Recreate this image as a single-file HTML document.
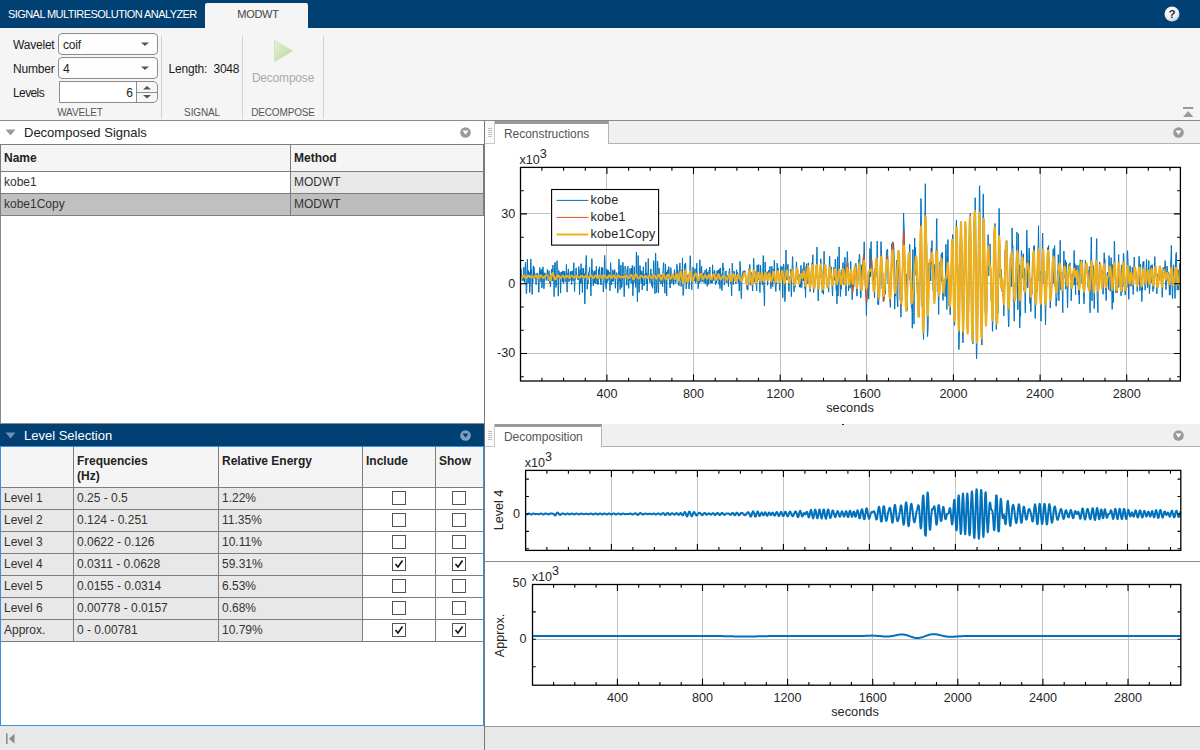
<!DOCTYPE html>
<html lang="en">
<head>
<meta charset="utf-8">
<title>Signal Multiresolution Analyzer</title>
<style>
*{box-sizing:border-box;margin:0;padding:0}
html,body{width:1200px;height:750px;overflow:hidden;background:#fff}
body{position:relative;font-family:"Liberation Sans",Arial,sans-serif;font-size:12px;color:#222}
.abs{position:absolute}
#title{left:0;top:0;width:1200px;height:28px;background:#004073}
#title .app{left:8px;top:0;line-height:29px;color:#fff;font-size:11px;white-space:nowrap;letter-spacing:-0.57px}
#tab{left:205px;top:3px;width:103px;height:25px;background:#f5f5f5;border-radius:2px 2px 0 0;text-align:center;line-height:22px;color:#444;font-size:11px;letter-spacing:-0.3px;padding-left:3px}
#strip{left:0;top:28px;width:1200px;height:92px;background:#f5f5f5}
#stripb{left:0;top:120px;width:1200px;height:1px;background:#8a8a8a}
.lbl{font-size:12px;color:#1a1a1a;white-space:nowrap;line-height:14px;letter-spacing:-0.2px}
.dd{border:1px solid #8c8c8c;border-radius:4px;background:#fdfdfd;height:22px;line-height:22px;padding-left:4px;font-size:12px;color:#222;letter-spacing:-0.2px}
.sec{font-size:10px;color:#555;letter-spacing:-0.15px;white-space:nowrap;text-align:center;line-height:12px}
.vsep{width:1px;background:#d2d2d2;top:36px;height:83px}
.ph{left:0;width:484px;height:23px}
.ph .t{left:24px;top:0;line-height:23px;font-size:13px;white-space:nowrap}
table{border-collapse:collapse;table-layout:fixed;position:absolute}
td,th{border:1px solid #7d7d7d;font-size:12px;text-align:left;padding:0 0 2px 3px;white-space:nowrap;overflow:hidden;font-weight:normal;color:#333}
th{font-weight:bold;background:#f5f5f5;color:#222;vertical-align:top}
.g{background:#e8e8e8}
#lv tr:first-child th{border-top-color:#3d8fe0}
#lv td:first-child,#lv th:first-child{border-left-color:#3d8fe0}
#lv td:last-child,#lv th:last-child{border-right-color:#3d8fe0}
#lv td:nth-child(n+4){padding:0 0 1px 0}
#lv td:last-child .cb{left:-1px}
.cb{display:block;width:14px;height:14px;border:1px solid #555;background:#fff;margin:0 auto;position:relative}
.cb svg{position:absolute;left:0;top:0}
.tabbar{left:485px;width:715px;height:23px;background:#f0f0f0;border-bottom:1px solid #b4b4b4}
.rtab{top:0;height:23px;background:#fff;border-top:3px solid #999;border-right:1px solid #b4b4b4;color:#555;font-size:12px;line-height:21px;padding-left:9px;white-space:nowrap;letter-spacing:-0.05px}
.grip{left:0;top:0;width:10px;height:23px;background:#fafafa;border-right:1px solid #c8c8c8;border-bottom:1px solid #c8c8c8}
</style>
</head>
<body>
<!-- title bar -->
<div id="title" class="abs">
  <div class="app abs">SIGNAL MULTIRESOLUTION ANALYZER</div>
  <div id="tab" class="abs">MODWT</div>
  <svg class="abs" style="left:1164px;top:6px" width="16" height="16" viewBox="0 0 16 16">
    <defs><radialGradient id="hg" cx="0.4" cy="0.3" r="0.8"><stop offset="0" stop-color="#ffffff"/><stop offset="0.6" stop-color="#f0f0f0"/><stop offset="1" stop-color="#b8bcc4"/></radialGradient></defs>
    <circle cx="8" cy="8" r="7.5" fill="url(#hg)"/>
    <text x="8" y="12" text-anchor="middle" font-family="Liberation Sans, Arial, sans-serif" font-weight="bold" font-size="11.5" fill="#1d2b45">?</text>
  </svg>
</div>
<!-- toolstrip -->
<div id="strip" class="abs"></div>
<div id="stripb" class="abs"></div>
<div class="abs lbl" style="left:13px;top:38px">Wavelet</div>
<div class="abs lbl" style="left:13px;top:62px">Number</div>
<div class="abs lbl" style="left:13px;top:86px;letter-spacing:-0.6px">Levels</div>
<div class="abs dd" style="left:58px;top:33px;width:100px">coif</div>
<div class="abs dd" style="left:58px;top:57px;width:100px">4</div>
<svg class="abs" style="left:140px;top:41px" width="10" height="6"><path d="M1 1.5h8l-4 3.6z" fill="#555"/></svg>
<svg class="abs" style="left:140px;top:65px" width="10" height="6"><path d="M1 1.5h8l-4 3.6z" fill="#555"/></svg>
<div class="abs" style="left:59px;top:81px;width:99px;height:22px;border:1px solid #8c8c8c;border-radius:0 5px 5px 0;background:#f7f7f7"></div>
<div class="abs" style="left:60px;top:82px;width:77px;height:20px;background:#fff;border-right:1px solid #8c8c8c;text-align:right;padding-right:3px;line-height:23px;font-size:12px;color:#222">6</div>
<div class="abs" style="left:137px;top:92px;width:20px;height:1px;background:#8c8c8c"></div>
<svg class="abs" style="left:142px;top:85px" width="10" height="14"><path d="M1 4.6h8l-4 -3.6z M1 10h8l-4 3.6z" fill="#555"/></svg>
<div class="abs sec" style="left:40px;top:107px;width:80px">WAVELET</div>
<div class="abs vsep" style="left:161px"></div>
<div class="abs lbl" style="left:168.5px;top:62px">Length:&nbsp; 3048</div>
<div class="abs sec" style="left:162px;top:107px;width:80px">SIGNAL</div>
<div class="abs vsep" style="left:242px"></div>
<svg class="abs" style="left:272px;top:38px" width="24" height="26" viewBox="0 0 24 26"><defs><linearGradient id="pg" x1="0" y1="0" x2="1" y2="1"><stop offset="0" stop-color="#e4f0d8"/><stop offset="1" stop-color="#b9d89f"/></linearGradient></defs><path d="M2.5 2.5 L20.5 13 L2.5 23.5 Z" fill="url(#pg)" stroke="#cfe3bd" stroke-width="1" stroke-linejoin="round"/></svg>
<div class="abs lbl" style="left:243px;top:71px;width:80px;text-align:center;color:#aaa;font-size:12px">Decompose</div>
<div class="abs sec" style="left:243px;top:107px;width:80px">DECOMPOSE</div>
<div class="abs vsep" style="left:323px"></div>
<svg class="abs" style="left:1182px;top:106px" width="12" height="12"><path d="M1 1h10.4v2H1z M6.2 5l5.2 6H1z" fill="#9a9a9a"/></svg>

<!-- left top panel -->
<div class="abs ph" style="top:121px;background:#fff">
  <svg class="abs" style="left:5px;top:8px" width="11" height="7"><path d="M0.5 0.5h10l-5 6z" fill="#9b9b9b"/></svg>
  <div class="abs t" style="color:#222">Decomposed Signals</div>
  <svg class="abs" style="left:460px;top:6px" width="11" height="11"><circle cx="5.5" cy="5.5" r="5.3" fill="#9a9a9a"/><path d="M2.5 3.6h6l-3 4.2z" fill="#fff"/></svg>
</div>
<div class="abs" style="left:0;top:144px;width:484px;height:280px;background:#fff;border:1px solid #8a8a8a;border-right:none"></div>
<table style="left:0;top:144px;width:483px">
<colgroup><col style="width:290px"><col style="width:193px"></colgroup>
<tr style="height:27px"><th style="padding-top:6px">Name</th><th style="padding-top:6px">Method</th></tr>
<tr style="height:22px"><td style="background:#fff">kobe1</td><td class="g">MODWT</td></tr>
<tr style="height:22px"><td style="background:#c0c0c0">kobe1Copy</td><td style="background:#bdbdbd">MODWT</td></tr>
</table>

<!-- left bottom panel -->
<div class="abs ph" style="top:424px;background:#004073">
  <svg class="abs" style="left:5px;top:8px" width="11" height="7"><path d="M0.5 0.5h10l-5 6z" fill="#6f8fb0"/></svg>
  <div class="abs t" style="color:#fff">Level Selection</div>
  <svg class="abs" style="left:460px;top:6px" width="11" height="11"><circle cx="5.5" cy="5.5" r="5.3" fill="#7f9fc0"/><path d="M2.5 3.6h6l-3 4.2z" fill="#0b3c6c"/></svg>
</div>
<div class="abs" style="left:0;top:446px;width:484px;height:280px;background:#fff;border:1px solid #3d8fe0"></div>
<table id="lv" style="left:0;top:446px;width:483px">
<colgroup><col style="width:73px"><col style="width:145px"><col style="width:144px"><col style="width:73px"><col style="width:48px"></colgroup>
<tr style="height:41px"><th></th><th style="padding-top:7px;line-height:15px">Frequencies<br>(Hz)</th><th style="padding-top:7px;line-height:15px">Relative Energy</th><th style="padding-top:7px;line-height:15px">Include</th><th style="padding-top:7px;line-height:15px">Show</th></tr>
<tr style="height:22px"><td class="g">Level 1</td><td class="g">0.25 - 0.5</td><td class="g">1.22%</td><td><span class="cb"></span></td><td><span class="cb"></span></td></tr>
<tr style="height:22px"><td class="g">Level 2</td><td class="g">0.124 - 0.251</td><td class="g">11.35%</td><td><span class="cb"></span></td><td><span class="cb"></span></td></tr>
<tr style="height:22px"><td class="g">Level 3</td><td class="g">0.0622 - 0.126</td><td class="g">10.11%</td><td><span class="cb"></span></td><td><span class="cb"></span></td></tr>
<tr style="height:22px"><td class="g">Level 4</td><td class="g">0.0311 - 0.0628</td><td class="g">59.31%</td><td><span class="cb"><svg width="12" height="12"><path d="M2.5 6l2.5 3l4.5-6.5" fill="none" stroke="#111" stroke-width="1.6"/></svg></span></td><td><span class="cb"><svg width="12" height="12"><path d="M2.5 6l2.5 3l4.5-6.5" fill="none" stroke="#111" stroke-width="1.6"/></svg></span></td></tr>
<tr style="height:22px"><td class="g">Level 5</td><td class="g">0.0155 - 0.0314</td><td class="g">6.53%</td><td><span class="cb"></span></td><td><span class="cb"></span></td></tr>
<tr style="height:22px"><td class="g">Level 6</td><td class="g">0.00778 - 0.0157</td><td class="g">0.68%</td><td><span class="cb"></span></td><td><span class="cb"></span></td></tr>
<tr style="height:22px"><td class="g">Approx.</td><td class="g">0 - 0.00781</td><td class="g">10.79%</td><td><span class="cb"><svg width="12" height="12"><path d="M2.5 6l2.5 3l4.5-6.5" fill="none" stroke="#111" stroke-width="1.6"/></svg></span></td><td><span class="cb"><svg width="12" height="12"><path d="M2.5 6l2.5 3l4.5-6.5" fill="none" stroke="#111" stroke-width="1.6"/></svg></span></td></tr>
</table>

<!-- status bar -->
<div class="abs" style="left:0;top:726px;width:1200px;height:24px;background:#e8e8e8"></div>
<svg class="abs" style="left:5px;top:733px" width="12" height="12"><path d="M1 0.5h1.6v10.5H1z M4 5.7l5.5-5v10z" fill="#8c8c8c"/></svg>

<!-- divider -->
<div class="abs" style="left:484px;top:121px;width:1px;height:629px;background:#777"></div>

<!-- right top -->
<div class="abs" style="left:485px;top:121px;width:715px;height:303px;background:#fff"></div>
<div class="abs tabbar" style="top:121px">
  <div class="abs grip"><svg class="abs" style="left:3px;top:7px" width="4" height="10"><path d="M0 0.5h4M0 2.5h4M0 4.5h4M0 6.5h4M0 8.5h4" stroke="#c0c0c0" stroke-width="1"/></svg></div>
  <div class="abs rtab" style="left:10px;width:114px">Reconstructions</div>
  <svg class="abs" style="left:688px;top:6px" width="11" height="11"><circle cx="5.5" cy="5.5" r="5.3" fill="#9a9a9a"/><path d="M2.5 3.6h6l-3 4.2z" fill="#fff"/></svg>
</div>
<!-- right bottom -->
<div class="abs" style="left:485px;top:424px;width:715px;height:303px;background:#fff;border-top:1px solid #999;border-bottom:1px solid #999"></div>
<div class="abs tabbar" style="top:424px">
  <div class="abs grip"><svg class="abs" style="left:3px;top:7px" width="4" height="10"><path d="M0 0.5h4M0 2.5h4M0 4.5h4M0 6.5h4M0 8.5h4" stroke="#c0c0c0" stroke-width="1"/></svg></div>
  <div class="abs rtab" style="left:10px;width:107px">Decomposition</div>
  <svg class="abs" style="left:688px;top:6px" width="11" height="11"><circle cx="5.5" cy="5.5" r="5.3" fill="#9a9a9a"/><path d="M2.5 3.6h6l-3 4.2z" fill="#fff"/></svg>
</div>
<div class="abs" style="left:842px;top:424px;width:2px;height:1px;background:#222"></div>
<div class="abs" style="left:0;top:0;width:1200px;height:750px;pointer-events:none">
<svg id="plots" width="1200" height="750" viewBox="0 0 1200 750" font-family="Liberation Sans, Arial, sans-serif" font-size="12.6" fill="#262626">
<rect x="520.5" y="167.4" width="659.9" height="213.6" fill="#fff"/>
<line x1="606.5" x2="606.5" y1="167.4" y2="381.0" stroke="#c2c2c2" stroke-width="1"/>
<line x1="693.5" x2="693.5" y1="167.4" y2="381.0" stroke="#c2c2c2" stroke-width="1"/>
<line x1="780.5" x2="780.5" y1="167.4" y2="381.0" stroke="#c2c2c2" stroke-width="1"/>
<line x1="866.5" x2="866.5" y1="167.4" y2="381.0" stroke="#c2c2c2" stroke-width="1"/>
<line x1="953.5" x2="953.5" y1="167.4" y2="381.0" stroke="#c2c2c2" stroke-width="1"/>
<line x1="1040.5" x2="1040.5" y1="167.4" y2="381.0" stroke="#c2c2c2" stroke-width="1"/>
<line x1="1126.5" x2="1126.5" y1="167.4" y2="381.0" stroke="#c2c2c2" stroke-width="1"/>
<line x1="520.5" x2="1180.4" y1="213.5" y2="213.5" stroke="#c2c2c2" stroke-width="1"/>
<line x1="520.5" x2="1180.4" y1="283.5" y2="283.5" stroke="#c2c2c2" stroke-width="1"/>
<line x1="520.5" x2="1180.4" y1="353.5" y2="353.5" stroke="#c2c2c2" stroke-width="1"/>
<clipPath id="c1"><rect x="520.5" y="167.4" width="659.9" height="213.6"/></clipPath>
<g clip-path="url(#c1)" fill="none" stroke-linejoin="round">
<path d="M520.5,286.3 L520.7,272.2 L520.9,268.6 L521.1,270.0 L521.4,272.2 L521.6,276.7 L521.8,277.8 L522.0,277.7 L522.2,279.8 L522.4,280.6 L522.7,279.7 L522.9,279.3 L523.1,280.0 L523.3,280.7 L523.5,275.5 L523.7,267.1 L524.0,268.4 L524.2,278.3 L524.4,282.6 L524.6,281.0 L524.8,279.0 L525.0,274.3 L525.3,266.0 L525.5,262.3 L525.7,266.9 L525.9,276.6 L526.1,288.4 L526.3,293.8 L526.6,292.6 L526.8,288.8 L527.0,278.9 L527.2,265.2 L527.4,259.1 L527.6,267.3 L527.9,278.7 L528.1,283.3 L528.3,276.8 L528.5,270.6 L528.7,272.3 L528.9,275.1 L529.2,272.1 L529.4,279.0 L529.6,292.3 L529.8,292.7 L530.0,286.2 L530.2,286.1 L530.5,275.6 L530.7,258.9 L530.9,259.6 L531.1,271.8 L531.3,274.2 L531.5,269.3 L531.8,275.0 L532.0,290.9 L532.2,294.6 L532.4,281.4 L532.6,276.1 L532.8,283.3 L533.1,278.2 L533.3,265.9 L533.5,269.3 L533.7,275.9 L533.9,270.3 L534.1,267.4 L534.4,274.0 L534.6,275.6 L534.8,273.2 L535.0,275.4 L535.2,278.8 L535.4,278.1 L535.7,277.9 L535.9,282.5 L536.1,284.7 L536.3,278.5 L536.5,273.6 L536.7,274.4 L537.0,275.2 L537.2,273.8 L537.4,273.3 L537.6,273.2 L537.8,273.7 L538.0,276.8 L538.3,281.2 L538.5,286.5 L538.7,292.0 L538.9,292.3 L539.1,285.8 L539.3,276.9 L539.6,269.6 L539.8,267.6 L540.0,269.1 L540.2,269.7 L540.4,270.4 L540.6,274.8 L540.9,281.9 L541.1,282.0 L541.3,272.0 L541.5,269.3 L541.7,280.4 L541.9,287.9 L542.2,283.6 L542.4,277.1 L542.6,271.2 L542.8,267.4 L543.0,266.8 L543.2,269.2 L543.5,275.8 L543.7,284.1 L543.9,288.8 L544.1,287.3 L544.3,282.6 L544.5,276.6 L544.8,272.7 L545.0,273.3 L545.2,275.3 L545.4,275.6 L545.6,274.0 L545.8,274.2 L546.1,278.8 L546.3,280.5 L546.5,275.3 L546.7,274.3 L546.9,277.0 L547.1,273.8 L547.4,269.3 L547.6,273.5 L547.8,278.9 L548.0,279.3 L548.2,280.3 L548.4,281.0 L548.7,277.4 L548.9,271.3 L549.1,270.7 L549.3,279.1 L549.5,283.0 L549.7,276.8 L550.0,275.8 L550.2,282.9 L550.4,287.1 L550.6,285.2 L550.8,281.6 L551.0,278.1 L551.3,273.3 L551.5,269.2 L551.7,270.3 L551.9,274.4 L552.1,278.4 L552.3,281.1 L552.6,276.2 L552.8,265.7 L553.0,265.0 L553.2,272.6 L553.4,275.4 L553.6,274.5 L553.9,285.2 L554.1,296.7 L554.3,286.2 L554.5,270.6 L554.7,266.0 L554.9,262.3 L555.2,262.9 L555.4,272.7 L555.6,282.2 L555.8,287.4 L556.0,287.5 L556.2,285.4 L556.5,285.1 L556.7,277.2 L556.9,262.4 L557.1,260.7 L557.3,268.2 L557.5,267.9 L557.8,269.1 L558.0,282.3 L558.2,296.1 L558.4,295.4 L558.6,280.8 L558.8,270.6 L559.1,272.7 L559.3,275.9 L559.5,275.4 L559.7,275.9 L559.9,274.4 L560.1,272.3 L560.3,282.0 L560.6,293.1 L560.8,286.8 L561.0,275.7 L561.2,275.4 L561.4,276.5 L561.6,272.0 L561.9,272.1 L562.1,277.4 L562.3,281.7 L562.5,278.5 L562.7,270.8 L562.9,271.1 L563.2,280.5 L563.4,283.7 L563.6,279.0 L563.8,273.5 L564.0,271.1 L564.2,275.5 L564.5,277.2 L564.7,271.5 L564.9,273.2 L565.1,282.1 L565.3,281.8 L565.5,276.9 L565.8,278.8 L566.0,278.4 L566.2,270.7 L566.4,264.5 L566.6,270.4 L566.8,284.5 L567.1,292.1 L567.3,284.1 L567.5,273.7 L567.7,273.4 L567.9,276.5 L568.1,272.6 L568.4,268.9 L568.6,274.6 L568.8,281.6 L569.0,281.9 L569.2,279.1 L569.4,276.6 L569.7,277.8 L569.9,280.4 L570.1,275.9 L570.3,271.5 L570.5,275.6 L570.7,277.4 L571.0,272.4 L571.2,271.5 L571.4,278.7 L571.6,284.5 L571.8,281.3 L572.0,273.9 L572.3,270.8 L572.5,273.6 L572.7,277.9 L572.9,280.0 L573.1,281.0 L573.3,279.1 L573.6,269.8 L573.8,262.7 L574.0,269.2 L574.2,280.5 L574.4,288.9 L574.6,291.5 L574.9,284.5 L575.1,277.3 L575.3,278.4 L575.5,279.3 L575.7,274.3 L575.9,269.1 L576.2,267.9 L576.4,271.5 L576.6,275.9 L576.8,276.1 L577.0,275.3 L577.2,277.4 L577.5,278.7 L577.7,276.4 L577.9,275.7 L578.1,280.0 L578.3,278.8 L578.5,270.5 L578.8,266.6 L579.0,271.3 L579.2,277.8 L579.4,288.1 L579.6,294.6 L579.8,282.7 L580.1,269.7 L580.3,274.7 L580.5,283.9 L580.7,279.6 L580.9,268.6 L581.1,263.7 L581.4,271.7 L581.6,281.7 L581.8,282.9 L582.0,280.5 L582.2,285.5 L582.4,292.5 L582.7,283.1 L582.9,268.1 L583.1,271.2 L583.3,274.8 L583.5,268.5 L583.7,270.6 L584.0,276.6 L584.2,274.1 L584.4,273.7 L584.6,290.9 L584.8,303.9 L585.0,298.6 L585.3,284.7 L585.5,270.3 L585.7,264.9 L585.9,264.3 L586.1,257.6 L586.3,255.5 L586.6,265.0 L586.8,274.6 L587.0,281.6 L587.2,289.2 L587.4,288.6 L587.6,280.3 L587.9,280.7 L588.1,283.6 L588.3,277.9 L588.5,272.9 L588.7,272.4 L588.9,271.9 L589.2,271.9 L589.4,269.4 L589.6,267.3 L589.8,273.1 L590.0,277.7 L590.2,275.4 L590.5,277.9 L590.7,289.9 L590.9,296.0 L591.1,288.3 L591.3,279.4 L591.5,268.9 L591.8,258.6 L592.0,260.5 L592.2,268.7 L592.4,269.8 L592.6,272.1 L592.8,280.2 L593.1,284.4 L593.3,285.9 L593.5,285.3 L593.7,278.5 L593.9,271.4 L594.1,276.5 L594.4,282.8 L594.6,278.0 L594.8,271.7 L595.0,270.4 L595.2,271.5 L595.4,274.0 L595.7,280.5 L595.9,283.9 L596.1,275.7 L596.3,266.3 L596.5,269.2 L596.7,277.8 L597.0,281.6 L597.2,283.5 L597.4,284.3 L597.6,281.5 L597.8,279.1 L598.0,283.8 L598.2,284.5 L598.5,272.2 L598.7,269.0 L598.9,279.0 L599.1,278.2 L599.3,268.2 L599.5,266.7 L599.8,271.5 L600.0,274.5 L600.2,276.2 L600.4,279.0 L600.6,282.2 L600.8,284.7 L601.1,285.0 L601.3,280.4 L601.5,271.0 L601.7,267.1 L601.9,271.3 L602.1,274.2 L602.4,272.3 L602.6,267.8 L602.8,268.1 L603.0,279.2 L603.2,291.1 L603.4,292.0 L603.7,286.9 L603.9,283.4 L604.1,280.3 L604.3,269.6 L604.5,257.2 L604.7,255.4 L605.0,262.0 L605.2,273.1 L605.4,283.1 L605.6,282.7 L605.8,281.6 L606.0,288.9 L606.3,288.8 L606.5,276.6 L606.7,268.9 L606.9,275.1 L607.1,282.6 L607.3,277.2 L607.6,270.3 L607.8,276.3 L608.0,280.7 L608.2,274.9 L608.4,270.3 L608.6,274.5 L608.9,277.1 L609.1,274.3 L609.3,272.4 L609.5,272.7 L609.7,280.3 L609.9,290.8 L610.2,286.2 L610.4,270.3 L610.6,262.7 L610.8,266.3 L611.0,273.0 L611.2,279.7 L611.5,284.8 L611.7,282.7 L611.9,278.1 L612.1,279.2 L612.3,281.3 L612.5,275.8 L612.8,269.7 L613.0,273.5 L613.2,279.5 L613.4,281.5 L613.6,277.4 L613.8,271.3 L614.1,272.2 L614.3,277.5 L614.5,276.0 L614.7,269.6 L614.9,271.7 L615.1,283.3 L615.4,288.3 L615.6,281.3 L615.8,275.6 L616.0,276.1 L616.2,275.1 L616.4,272.6 L616.7,272.9 L616.9,273.3 L617.1,273.6 L617.3,278.7 L617.5,287.5 L617.7,293.1 L618.0,291.4 L618.2,285.0 L618.4,278.2 L618.6,270.5 L618.8,261.5 L619.0,259.1 L619.3,268.1 L619.5,279.1 L619.7,282.4 L619.9,283.6 L620.1,289.6 L620.3,288.6 L620.6,275.9 L620.8,264.9 L621.0,265.3 L621.2,273.7 L621.4,283.5 L621.6,287.6 L621.9,287.0 L622.1,284.6 L622.3,281.2 L622.5,273.7 L622.7,265.0 L622.9,262.3 L623.2,265.8 L623.4,266.6 L623.6,266.9 L623.8,277.5 L624.0,292.8 L624.2,296.7 L624.5,288.8 L624.7,280.4 L624.9,272.8 L625.1,266.4 L625.3,266.0 L625.5,268.5 L625.8,268.6 L626.0,269.3 L626.2,274.2 L626.4,279.3 L626.6,283.9 L626.8,285.4 L627.1,279.4 L627.3,272.8 L627.5,270.3 L627.7,268.2 L627.9,266.1 L628.1,272.6 L628.4,283.4 L628.6,288.4 L628.8,287.6 L629.0,281.8 L629.2,277.9 L629.4,280.6 L629.7,280.1 L629.9,271.6 L630.1,268.4 L630.3,276.5 L630.5,276.6 L630.7,273.0 L631.0,281.8 L631.2,283.4 L631.4,269.5 L631.6,268.2 L631.8,278.7 L632.0,275.5 L632.3,265.4 L632.5,272.9 L632.7,290.9 L632.9,295.9 L633.1,289.4 L633.3,285.0 L633.6,281.9 L633.8,275.5 L634.0,269.1 L634.2,266.5 L634.4,268.1 L634.6,273.8 L634.9,280.9 L635.1,282.6 L635.3,278.1 L635.5,277.6 L635.7,287.4 L635.9,285.2 L636.2,263.2 L636.4,252.2 L636.6,264.4 L636.8,277.2 L637.0,280.1 L637.2,290.3 L637.4,301.7 L637.7,289.7 L637.9,264.4 L638.1,255.5 L638.3,261.0 L638.5,267.5 L638.7,280.1 L639.0,291.6 L639.2,292.4 L639.4,285.4 L639.6,281.2 L639.8,272.3 L640.0,265.5 L640.3,271.3 L640.5,274.8 L640.7,270.4 L640.9,272.6 L641.1,281.6 L641.3,283.6 L641.6,275.0 L641.8,271.2 L642.0,280.4 L642.2,289.9 L642.4,284.5 L642.6,273.6 L642.9,272.7 L643.1,272.3 L643.3,266.8 L643.5,268.2 L643.7,279.6 L643.9,285.4 L644.2,283.7 L644.4,285.6 L644.6,285.2 L644.8,278.1 L645.0,273.9 L645.2,275.6 L645.5,274.5 L645.7,267.7 L645.9,262.1 L646.1,270.1 L646.3,283.8 L646.5,282.5 L646.8,272.9 L647.0,280.3 L647.2,291.0 L647.4,285.0 L647.6,280.1 L647.8,280.1 L648.1,267.6 L648.3,258.6 L648.5,267.8 L648.7,275.5 L648.9,275.2 L649.1,275.3 L649.4,276.0 L649.6,278.5 L649.8,282.5 L650.0,282.8 L650.2,280.7 L650.4,277.1 L650.7,270.7 L650.9,268.9 L651.1,272.6 L651.3,274.2 L651.5,277.8 L651.7,285.9 L652.0,286.3 L652.2,281.9 L652.4,284.9 L652.6,288.3 L652.8,282.4 L653.0,275.3 L653.3,272.5 L653.5,267.5 L653.7,260.7 L653.9,263.8 L654.1,275.7 L654.3,285.0 L654.6,288.4 L654.8,290.9 L655.0,293.7 L655.2,285.6 L655.4,265.0 L655.6,253.1 L655.9,261.0 L656.1,276.4 L656.3,284.2 L656.5,289.6 L656.7,292.7 L656.9,284.5 L657.2,270.4 L657.4,263.1 L657.6,261.2 L657.8,263.8 L658.0,274.2 L658.2,288.5 L658.5,292.9 L658.7,282.6 L658.9,270.0 L659.1,268.1 L659.3,271.4 L659.5,271.7 L659.8,274.7 L660.0,281.9 L660.2,281.5 L660.4,274.7 L660.6,276.4 L660.8,284.1 L661.1,283.7 L661.3,277.0 L661.5,274.9 L661.7,278.5 L661.9,279.4 L662.1,279.1 L662.4,284.8 L662.6,286.6 L662.8,278.1 L663.0,271.2 L663.2,269.1 L663.4,263.4 L663.7,262.6 L663.9,275.7 L664.1,282.5 L664.3,273.0 L664.5,273.8 L664.7,290.9 L665.0,293.3 L665.2,275.4 L665.4,263.9 L665.6,267.8 L665.8,277.0 L666.0,274.4 L666.3,272.0 L666.5,285.7 L666.7,296.0 L666.9,283.0 L667.1,272.0 L667.3,276.5 L667.6,274.9 L667.8,269.8 L668.0,275.6 L668.2,278.5 L668.4,271.0 L668.6,266.7 L668.9,266.9 L669.1,269.8 L669.3,278.1 L669.5,283.9 L669.7,284.8 L669.9,287.4 L670.2,288.0 L670.4,283.0 L670.6,274.3 L670.8,267.7 L671.0,269.2 L671.2,273.6 L671.5,275.8 L671.7,279.9 L671.9,283.4 L672.1,282.0 L672.3,278.4 L672.5,275.1 L672.8,274.2 L673.0,275.3 L673.2,276.0 L673.4,279.3 L673.6,285.1 L673.8,284.5 L674.1,277.3 L674.3,271.2 L674.5,269.6 L674.7,272.8 L674.9,279.1 L675.1,280.9 L675.4,277.9 L675.6,279.3 L675.8,283.2 L676.0,278.6 L676.2,272.8 L676.4,273.5 L676.6,272.2 L676.9,264.3 L677.1,265.6 L677.3,277.6 L677.5,278.7 L677.7,269.7 L677.9,271.6 L678.2,281.1 L678.4,284.0 L678.6,282.6 L678.8,284.7 L679.0,285.8 L679.2,278.7 L679.5,269.8 L679.7,264.8 L679.9,262.8 L680.1,265.6 L680.3,273.6 L680.5,279.3 L680.8,279.2 L681.0,282.2 L681.2,286.5 L681.4,280.0 L681.6,270.4 L681.8,273.2 L682.1,277.9 L682.3,269.1 L682.5,257.9 L682.7,268.6 L682.9,289.3 L683.1,295.5 L683.4,294.3 L683.6,291.9 L683.8,283.8 L684.0,280.9 L684.2,282.0 L684.4,275.3 L684.7,264.8 L684.9,264.1 L685.1,268.0 L685.3,268.2 L685.5,262.9 L685.7,263.6 L686.0,278.8 L686.2,288.9 L686.4,281.6 L686.6,274.1 L686.8,278.3 L687.0,281.7 L687.3,276.8 L687.5,275.5 L687.7,281.2 L687.9,283.3 L688.1,278.1 L688.3,274.7 L688.6,278.8 L688.8,286.3 L689.0,289.0 L689.2,287.1 L689.4,285.2 L689.6,278.5 L689.9,265.5 L690.1,256.7 L690.3,255.7 L690.5,259.0 L690.7,264.9 L690.9,270.7 L691.2,276.4 L691.4,282.9 L691.6,289.1 L691.8,289.7 L692.0,284.5 L692.2,281.3 L692.5,281.8 L692.7,278.2 L692.9,270.5 L693.1,267.0 L693.3,270.6 L693.5,277.5 L693.8,280.2 L694.0,278.5 L694.2,278.4 L694.4,281.1 L694.6,278.4 L694.8,270.0 L695.1,268.6 L695.3,276.7 L695.5,282.8 L695.7,283.1 L695.9,282.6 L696.1,281.8 L696.4,276.4 L696.6,267.5 L696.8,263.2 L697.0,270.8 L697.2,280.4 L697.4,279.5 L697.7,276.4 L697.9,282.0 L698.1,288.7 L698.3,287.3 L698.5,281.6 L698.7,280.8 L699.0,283.4 L699.2,282.8 L699.4,275.8 L699.6,266.7 L699.8,259.8 L700.0,261.4 L700.3,271.1 L700.5,278.3 L700.7,280.3 L700.9,282.3 L701.1,279.5 L701.3,270.9 L701.6,266.2 L701.8,269.7 L702.0,274.4 L702.2,278.4 L702.4,281.6 L702.6,279.8 L702.9,277.0 L703.1,278.8 L703.3,279.5 L703.5,273.6 L703.7,272.8 L703.9,281.3 L704.2,283.1 L704.4,275.9 L704.6,273.9 L704.8,274.0 L705.0,270.1 L705.2,273.2 L705.5,282.5 L705.7,284.1 L705.9,281.0 L706.1,278.3 L706.3,272.9 L706.5,268.7 L706.8,273.8 L707.0,283.4 L707.2,286.3 L707.4,278.9 L707.6,272.6 L707.8,272.2 L708.1,273.8 L708.3,277.3 L708.5,283.5 L708.7,284.5 L708.9,276.4 L709.1,270.2 L709.4,274.5 L709.6,275.0 L709.8,267.0 L710.0,269.9 L710.2,281.8 L710.4,283.1 L710.7,276.9 L710.9,277.1 L711.1,281.3 L711.3,283.1 L711.5,281.8 L711.7,278.7 L712.0,280.2 L712.2,283.2 L712.4,275.4 L712.6,264.8 L712.8,269.2 L713.0,279.0 L713.3,280.5 L713.5,278.9 L713.7,275.3 L713.9,272.4 L714.1,275.1 L714.3,275.4 L714.6,270.3 L714.8,271.5 L715.0,277.9 L715.2,281.0 L715.4,283.4 L715.6,284.7 L715.8,279.7 L716.1,274.3 L716.3,277.1 L716.5,283.0 L716.7,282.1 L716.9,274.4 L717.1,270.8 L717.4,276.5 L717.6,280.3 L717.8,274.3 L718.0,270.5 L718.2,275.5 L718.4,276.9 L718.7,269.9 L718.9,273.5 L719.1,284.5 L719.3,278.6 L719.5,268.8 L719.7,278.3 L720.0,288.6 L720.2,279.9 L720.4,267.9 L720.6,269.2 L720.8,275.1 L721.0,274.4 L721.3,274.7 L721.5,282.1 L721.7,288.6 L721.9,290.6 L722.1,288.9 L722.3,283.1 L722.6,271.3 L722.8,262.9 L723.0,264.9 L723.2,269.7 L723.4,269.8 L723.6,267.7 L723.9,271.6 L724.1,281.2 L724.3,285.2 L724.5,283.7 L724.7,282.8 L724.9,282.3 L725.2,276.6 L725.4,272.9 L725.6,272.8 L725.8,271.1 L726.0,270.9 L726.2,274.8 L726.5,280.3 L726.7,283.0 L726.9,282.7 L727.1,278.7 L727.3,275.4 L727.5,278.2 L727.8,280.6 L728.0,275.9 L728.2,277.2 L728.4,286.7 L728.6,285.4 L728.8,275.2 L729.1,271.3 L729.3,270.7 L729.5,268.5 L729.7,270.7 L729.9,274.9 L730.1,277.3 L730.4,280.8 L730.6,283.3 L730.8,282.9 L731.0,281.7 L731.2,284.2 L731.4,291.7 L731.7,295.8 L731.9,285.6 L732.1,269.1 L732.3,263.2 L732.5,268.3 L732.7,271.3 L733.0,272.7 L733.2,280.1 L733.4,284.6 L733.6,277.5 L733.8,271.2 L734.0,271.9 L734.3,271.8 L734.5,273.1 L734.7,277.1 L734.9,277.6 L735.1,277.0 L735.3,280.1 L735.6,283.3 L735.8,283.9 L736.0,283.5 L736.2,279.6 L736.4,271.5 L736.6,269.7 L736.9,274.2 L737.1,275.1 L737.3,273.2 L737.5,272.6 L737.7,272.4 L737.9,276.8 L738.2,282.6 L738.4,281.8 L738.6,279.4 L738.8,280.7 L739.0,285.0 L739.2,291.1 L739.5,288.8 L739.7,272.8 L739.9,261.4 L740.1,264.3 L740.3,265.1 L740.5,265.9 L740.8,277.7 L741.0,291.2 L741.2,297.7 L741.4,298.7 L741.6,291.5 L741.8,280.4 L742.1,275.5 L742.3,276.0 L742.5,275.0 L742.7,272.3 L742.9,271.3 L743.1,271.4 L743.4,271.6 L743.6,273.3 L743.8,276.1 L744.0,274.6 L744.2,270.5 L744.4,271.0 L744.7,275.3 L744.9,275.6 L745.1,271.3 L745.3,271.6 L745.5,276.6 L745.7,277.6 L746.0,278.1 L746.2,283.0 L746.4,283.4 L746.6,279.0 L746.8,282.5 L747.0,289.1 L747.3,286.5 L747.5,284.4 L747.7,289.7 L747.9,290.2 L748.1,280.9 L748.3,272.0 L748.6,272.5 L748.8,272.6 L749.0,268.7 L749.2,272.8 L749.4,274.4 L749.6,264.5 L749.9,264.6 L750.1,279.6 L750.3,285.3 L750.5,278.0 L750.7,273.1 L750.9,272.0 L751.2,272.3 L751.4,273.9 L751.6,275.3 L751.8,278.1 L752.0,280.9 L752.2,284.3 L752.5,290.0 L752.7,291.0 L752.9,284.7 L753.1,278.1 L753.3,272.0 L753.5,262.8 L753.7,258.3 L754.0,265.7 L754.2,277.8 L754.4,282.2 L754.6,277.5 L754.8,275.6 L755.0,277.9 L755.3,275.9 L755.5,271.7 L755.7,275.9 L755.9,283.7 L756.1,284.4 L756.3,285.3 L756.6,291.0 L756.8,287.5 L757.0,271.8 L757.2,264.9 L757.4,275.9 L757.6,281.9 L757.9,274.1 L758.1,274.5 L758.3,279.7 L758.5,271.9 L758.7,264.5 L758.9,272.4 L759.2,279.5 L759.4,276.6 L759.6,279.3 L759.8,291.5 L760.0,292.5 L760.2,276.3 L760.5,265.2 L760.7,267.4 L760.9,272.2 L761.1,273.0 L761.3,272.7 L761.5,272.3 L761.8,273.9 L762.0,279.3 L762.2,284.7 L762.4,284.7 L762.6,280.6 L762.8,272.1 L763.1,260.3 L763.3,255.6 L763.5,267.9 L763.7,285.6 L763.9,291.3 L764.1,294.4 L764.4,305.8 L764.6,302.9 L764.8,278.9 L765.0,262.0 L765.2,262.0 L765.4,267.2 L765.7,272.7 L765.9,277.0 L766.1,277.3 L766.3,275.9 L766.5,275.4 L766.7,273.6 L767.0,271.8 L767.2,274.3 L767.4,281.0 L767.6,285.3 L767.8,283.0 L768.0,277.3 L768.3,273.0 L768.5,270.4 L768.7,272.4 L768.9,276.8 L769.1,276.5 L769.3,273.5 L769.6,272.4 L769.8,269.0 L770.0,266.3 L770.2,271.3 L770.4,279.6 L770.6,285.1 L770.9,288.8 L771.1,287.7 L771.3,282.1 L771.5,275.2 L771.7,268.4 L771.9,266.3 L772.2,270.5 L772.4,278.5 L772.6,285.5 L772.8,286.7 L773.0,278.5 L773.2,269.2 L773.5,269.7 L773.7,278.4 L773.9,280.8 L774.1,269.9 L774.3,260.4 L774.5,266.2 L774.8,277.7 L775.0,281.7 L775.2,283.0 L775.4,286.2 L775.6,289.5 L775.8,291.5 L776.1,287.7 L776.3,281.6 L776.5,283.0 L776.7,284.1 L776.9,273.4 L777.1,263.2 L777.4,266.2 L777.6,271.1 L777.8,269.4 L778.0,267.9 L778.2,268.7 L778.4,271.0 L778.7,275.0 L778.9,279.2 L779.1,281.2 L779.3,283.9 L779.5,289.5 L779.7,290.5 L780.0,283.3 L780.2,277.8 L780.4,277.4 L780.6,273.5 L780.8,266.4 L781.0,269.6 L781.3,277.4 L781.5,276.6 L781.7,272.9 L781.9,269.8 L782.1,266.6 L782.3,274.7 L782.6,291.2 L782.8,297.7 L783.0,288.1 L783.2,273.0 L783.4,264.2 L783.6,264.0 L783.9,265.4 L784.1,269.5 L784.3,276.8 L784.5,285.3 L784.7,295.1 L784.9,301.6 L785.2,297.4 L785.4,286.7 L785.6,274.2 L785.8,259.5 L786.0,250.0 L786.2,259.6 L786.5,277.1 L786.7,280.1 L786.9,276.5 L787.1,279.5 L787.3,279.0 L787.5,270.8 L787.8,265.0 L788.0,264.3 L788.2,268.7 L788.4,277.1 L788.6,286.3 L788.8,291.5 L789.1,290.9 L789.3,285.1 L789.5,278.3 L789.7,276.8 L789.9,278.5 L790.1,278.1 L790.4,275.4 L790.6,271.4 L790.8,269.2 L791.0,278.2 L791.2,294.6 L791.4,296.6 L791.7,284.0 L791.9,273.8 L792.1,268.7 L792.3,263.2 L792.5,256.7 L792.7,256.5 L792.9,265.0 L793.2,273.2 L793.4,275.6 L793.6,278.3 L793.8,286.1 L794.0,291.8 L794.2,290.5 L794.5,286.5 L794.7,282.6 L794.9,281.6 L795.1,285.5 L795.3,287.2 L795.5,283.1 L795.8,278.7 L796.0,276.8 L796.2,270.4 L796.4,261.9 L796.6,263.3 L796.8,270.2 L797.1,272.5 L797.3,271.3 L797.5,275.5 L797.7,279.4 L797.9,276.6 L798.1,274.4 L798.4,275.4 L798.6,275.9 L798.8,275.9 L799.0,277.4 L799.2,282.0 L799.4,287.1 L799.7,283.1 L799.9,274.2 L800.1,277.6 L800.3,287.4 L800.5,283.9 L800.7,270.7 L801.0,265.4 L801.2,269.7 L801.4,276.7 L801.6,285.1 L801.8,287.6 L802.0,278.2 L802.3,272.1 L802.5,279.2 L802.7,278.7 L802.9,268.9 L803.1,271.6 L803.3,281.2 L803.6,275.3 L803.8,262.8 L804.0,262.1 L804.2,266.1 L804.4,269.4 L804.6,279.4 L804.9,288.8 L805.1,287.1 L805.3,288.0 L805.5,297.6 L805.7,291.6 L805.9,269.3 L806.2,265.9 L806.4,275.3 L806.6,270.5 L806.8,263.5 L807.0,270.9 L807.2,282.8 L807.5,284.0 L807.7,274.8 L807.9,269.0 L808.1,269.4 L808.3,265.7 L808.5,262.9 L808.8,272.6 L809.0,282.9 L809.2,282.2 L809.4,280.6 L809.6,282.6 L809.8,286.3 L810.1,291.7 L810.3,289.9 L810.5,278.6 L810.7,276.0 L810.9,283.1 L811.1,280.9 L811.4,273.6 L811.6,273.7 L811.8,271.9 L812.0,264.3 L812.2,262.5 L812.4,264.7 L812.7,257.2 L812.9,254.7 L813.1,270.2 L813.3,288.1 L813.5,292.7 L813.7,291.2 L814.0,288.1 L814.2,285.6 L814.4,284.3 L814.6,281.8 L814.8,278.7 L815.0,279.5 L815.3,281.2 L815.5,279.8 L815.7,276.4 L815.9,275.2 L816.1,277.8 L816.3,277.1 L816.6,266.8 L816.8,251.9 L817.0,247.1 L817.2,257.0 L817.4,272.2 L817.6,281.3 L817.9,288.9 L818.1,298.6 L818.3,301.0 L818.5,292.4 L818.7,285.7 L818.9,285.5 L819.2,282.1 L819.4,272.9 L819.6,267.8 L819.8,272.8 L820.0,278.0 L820.2,273.4 L820.5,263.8 L820.7,258.8 L820.9,259.9 L821.1,264.3 L821.3,268.2 L821.5,268.9 L821.8,270.6 L822.0,280.7 L822.2,293.1 L822.4,292.4 L822.6,283.2 L822.8,284.5 L823.1,290.1 L823.3,290.9 L823.5,294.3 L823.7,286.3 L823.9,259.6 L824.1,251.3 L824.4,269.5 L824.6,278.0 L824.8,274.7 L825.0,273.9 L825.2,273.4 L825.4,272.9 L825.7,273.3 L825.9,272.4 L826.1,269.1 L826.3,268.8 L826.5,276.2 L826.7,284.6 L827.0,284.7 L827.2,280.0 L827.4,280.6 L827.6,283.5 L827.8,282.6 L828.0,281.1 L828.3,283.8 L828.5,290.7 L828.7,292.1 L828.9,283.0 L829.1,273.3 L829.3,264.4 L829.6,256.2 L829.8,258.6 L830.0,268.2 L830.2,269.8 L830.4,267.2 L830.6,272.2 L830.9,278.0 L831.1,273.9 L831.3,266.9 L831.5,270.5 L831.7,281.5 L831.9,285.4 L832.1,287.4 L832.4,294.7 L832.6,296.0 L832.8,286.4 L833.0,281.9 L833.2,282.7 L833.4,276.8 L833.7,267.9 L833.9,267.2 L834.1,269.5 L834.3,271.3 L834.5,277.9 L834.7,280.4 L835.0,270.6 L835.2,259.2 L835.4,259.8 L835.6,266.8 L835.8,273.1 L836.0,284.8 L836.3,290.4 L836.5,281.2 L836.7,284.8 L836.9,303.8 L837.1,296.0 L837.3,263.0 L837.6,256.8 L837.8,283.2 L838.0,296.0 L838.2,286.2 L838.4,282.4 L838.6,282.6 L838.9,264.7 L839.1,246.9 L839.3,254.4 L839.5,268.1 L839.7,274.8 L839.9,280.5 L840.2,288.0 L840.4,296.5 L840.6,295.0 L840.8,284.9 L841.0,272.6 L841.2,279.5 L841.5,289.1 L841.7,280.2 L841.9,269.7 L842.1,273.6 L842.3,280.4 L842.5,275.8 L842.8,265.1 L843.0,262.5 L843.2,268.3 L843.4,272.3 L843.6,274.6 L843.8,281.0 L844.1,284.9 L844.3,278.9 L844.5,270.2 L844.7,263.2 L844.9,257.2 L845.1,261.1 L845.4,274.4 L845.6,285.9 L845.8,292.6 L846.0,296.0 L846.2,290.7 L846.4,276.9 L846.7,267.3 L846.9,263.4 L847.1,257.9 L847.3,251.6 L847.5,254.2 L847.7,262.2 L848.0,263.0 L848.2,266.4 L848.4,282.3 L848.6,291.1 L848.8,281.5 L849.0,273.2 L849.3,278.3 L849.5,284.1 L849.7,283.3 L849.9,285.5 L850.1,288.3 L850.3,279.5 L850.6,263.6 L850.8,261.4 L851.0,274.2 L851.2,286.5 L851.4,284.0 L851.6,278.3 L851.9,287.4 L852.1,299.7 L852.3,296.9 L852.5,286.8 L852.7,285.0 L852.9,287.0 L853.2,282.6 L853.4,279.9 L853.6,286.3 L853.8,287.2 L854.0,276.4 L854.2,270.1 L854.5,274.9 L854.7,279.1 L854.9,276.4 L855.1,270.0 L855.3,264.3 L855.5,263.7 L855.8,264.0 L856.0,263.5 L856.2,267.2 L856.4,277.0 L856.6,288.1 L856.8,296.0 L857.1,296.2 L857.3,291.3 L857.5,285.0 L857.7,277.7 L857.9,276.3 L858.1,280.4 L858.4,276.3 L858.6,265.0 L858.8,259.8 L859.0,261.1 L859.2,258.2 L859.4,254.0 L859.7,255.2 L859.9,261.9 L860.1,273.5 L860.3,288.1 L860.5,296.2 L860.7,298.0 L861.0,296.9 L861.2,287.1 L861.4,270.8 L861.6,264.8 L861.8,269.6 L862.0,269.6 L862.3,268.0 L862.5,273.2 L862.7,279.7 L862.9,276.4 L863.1,264.8 L863.3,258.8 L863.6,262.6 L863.8,260.2 L864.0,247.5 L864.2,241.8 L864.4,251.2 L864.6,263.4 L864.9,271.3 L865.1,277.7 L865.3,285.5 L865.5,292.6 L865.7,291.3 L865.9,291.5 L866.2,305.2 L866.4,315.5 L866.6,306.9 L866.8,297.5 L867.0,297.8 L867.2,292.6 L867.5,278.8 L867.7,275.0 L867.9,277.9 L868.1,280.0 L868.3,286.9 L868.5,297.7 L868.8,299.1 L869.0,291.3 L869.2,286.0 L869.4,279.4 L869.6,263.4 L869.8,248.6 L870.0,248.8 L870.3,263.8 L870.5,276.9 L870.7,267.6 L870.9,247.3 L871.1,241.6 L871.3,251.9 L871.6,263.0 L871.8,268.8 L872.0,270.9 L872.2,273.3 L872.4,274.4 L872.6,270.8 L872.9,272.4 L873.1,281.2 L873.3,282.0 L873.5,277.1 L873.7,279.1 L873.9,279.7 L874.2,282.2 L874.4,296.7 L874.6,297.7 L874.8,275.4 L875.0,268.1 L875.2,279.2 L875.5,280.1 L875.7,274.0 L875.9,275.6 L876.1,276.4 L876.3,265.8 L876.5,258.7 L876.8,260.0 L877.0,254.0 L877.2,241.1 L877.4,250.6 L877.6,282.8 L877.8,304.2 L878.1,304.6 L878.3,301.5 L878.5,304.8 L878.7,303.9 L878.9,296.5 L879.1,289.8 L879.4,287.3 L879.6,284.9 L879.8,283.2 L880.0,283.9 L880.2,282.7 L880.4,271.6 L880.7,254.8 L880.9,242.8 L881.1,241.6 L881.3,245.4 L881.5,253.5 L881.7,269.7 L882.0,284.2 L882.2,288.9 L882.4,287.0 L882.6,275.8 L882.8,272.9 L883.0,291.1 L883.3,301.6 L883.5,294.0 L883.7,293.0 L883.9,300.1 L884.1,293.2 L884.3,286.6 L884.6,289.4 L884.8,286.8 L885.0,286.4 L885.2,294.4 L885.4,293.6 L885.6,284.7 L885.9,278.1 L886.1,270.3 L886.3,259.0 L886.5,251.4 L886.7,250.5 L886.9,251.2 L887.2,251.1 L887.4,249.3 L887.6,249.2 L887.8,260.6 L888.0,278.6 L888.2,283.6 L888.5,277.6 L888.7,277.0 L888.9,281.3 L889.1,282.8 L889.3,285.0 L889.5,292.6 L889.8,297.6 L890.0,299.2 L890.2,305.5 L890.4,307.4 L890.6,299.3 L890.8,289.4 L891.1,280.5 L891.3,265.9 L891.5,249.3 L891.7,243.7 L891.9,248.7 L892.1,252.7 L892.4,253.6 L892.6,255.6 L892.8,256.9 L893.0,252.0 L893.2,244.8 L893.4,242.6 L893.7,245.5 L893.9,250.5 L894.1,255.0 L894.3,267.4 L894.5,294.1 L894.7,309.1 L895.0,296.6 L895.2,289.1 L895.4,296.0 L895.6,294.3 L895.8,284.9 L896.0,276.4 L896.3,266.5 L896.5,260.2 L896.7,271.6 L896.9,291.3 L897.1,299.3 L897.3,299.6 L897.6,307.0 L897.8,306.8 L898.0,280.0 L898.2,251.4 L898.4,250.9 L898.6,262.7 L898.9,264.8 L899.1,265.2 L899.3,273.3 L899.5,278.0 L899.7,277.0 L899.9,287.0 L900.2,300.2 L900.4,296.5 L900.6,296.3 L900.8,313.5 L901.0,317.2 L901.2,295.3 L901.5,284.1 L901.7,294.7 L901.9,300.9 L902.1,290.0 L902.3,278.2 L902.5,272.6 L902.8,265.9 L903.0,258.2 L903.2,244.2 L903.4,222.3 L903.6,213.1 L903.8,220.3 L904.1,225.4 L904.3,230.8 L904.5,247.6 L904.7,267.8 L904.9,275.8 L905.1,280.1 L905.4,292.8 L905.6,301.5 L905.8,291.1 L906.0,278.3 L906.2,285.3 L906.4,301.0 L906.7,292.6 L906.9,273.8 L907.1,289.3 L907.3,310.4 L907.5,297.4 L907.7,276.2 L908.0,267.8 L908.2,261.5 L908.4,263.1 L908.6,269.5 L908.8,263.7 L909.0,262.4 L909.2,272.1 L909.5,264.8 L909.7,244.2 L909.9,252.9 L910.1,280.0 L910.3,274.8 L910.5,264.6 L910.8,281.1 L911.0,299.1 L911.2,304.4 L911.4,306.0 L911.6,307.4 L911.8,306.4 L912.1,314.7 L912.3,328.3 L912.5,312.7 L912.7,266.0 L912.9,249.5 L913.1,277.7 L913.4,294.1 L913.6,286.4 L913.8,301.2 L914.0,324.2 L914.2,300.6 L914.4,253.0 L914.7,238.1 L914.9,254.5 L915.1,260.7 L915.3,250.3 L915.5,247.3 L915.7,263.2 L916.0,275.4 L916.2,267.1 L916.4,256.5 L916.6,261.3 L916.8,276.4 L917.0,285.7 L917.3,292.1 L917.5,293.4 L917.7,289.1 L917.9,285.5 L918.1,281.9 L918.3,287.3 L918.6,308.4 L918.8,316.8 L919.0,305.7 L919.2,305.2 L919.4,315.2 L919.6,303.4 L919.9,274.6 L920.1,255.9 L920.3,250.9 L920.5,238.9 L920.7,215.6 L920.9,198.4 L921.2,203.4 L921.4,226.7 L921.6,250.4 L921.8,272.8 L922.0,295.6 L922.2,306.8 L922.5,301.9 L922.7,302.9 L922.9,313.7 L923.1,322.3 L923.3,333.6 L923.5,339.5 L923.8,324.1 L924.0,302.2 L924.2,293.2 L924.4,279.5 L924.6,246.8 L924.8,219.1 L925.1,209.5 L925.3,183.7 L925.5,226.1 L925.7,226.0 L925.9,229.9 L926.1,244.1 L926.4,248.4 L926.6,243.2 L926.8,248.4 L927.0,275.0 L927.2,313.1 L927.4,336.5 L927.7,335.0 L927.9,331.2 L928.1,327.6 L928.3,311.5 L928.5,289.8 L928.7,270.9 L929.0,262.9 L929.2,265.9 L929.4,272.9 L929.6,277.5 L929.8,274.1 L930.0,264.2 L930.3,260.9 L930.5,271.7 L930.7,281.0 L930.9,270.2 L931.1,249.6 L931.3,247.9 L931.6,256.5 L931.8,248.5 L932.0,240.6 L932.2,254.4 L932.4,269.5 L932.6,271.7 L932.9,276.0 L933.1,289.6 L933.3,290.8 L933.5,279.4 L933.7,282.8 L933.9,299.7 L934.2,292.1 L934.4,264.6 L934.6,269.2 L934.8,296.4 L935.0,295.5 L935.2,284.2 L935.5,289.3 L935.7,291.5 L935.9,278.4 L936.1,261.3 L936.3,244.8 L936.5,224.5 L936.8,218.6 L937.0,245.7 L937.2,268.2 L937.4,255.1 L937.6,251.5 L937.8,276.5 L938.1,291.7 L938.3,294.2 L938.5,307.1 L938.7,314.4 L938.9,300.5 L939.1,287.2 L939.4,287.5 L939.6,289.3 L939.8,275.1 L940.0,261.5 L940.2,265.3 L940.4,271.7 L940.7,273.5 L940.9,270.7 L941.1,260.4 L941.3,253.7 L941.5,265.1 L941.7,281.5 L942.0,273.9 L942.2,252.2 L942.4,255.0 L942.6,279.4 L942.8,296.9 L943.0,300.4 L943.3,296.6 L943.5,293.6 L943.7,290.9 L943.9,283.6 L944.1,279.6 L944.3,285.8 L944.6,289.2 L944.8,286.5 L945.0,290.8 L945.2,296.6 L945.4,283.1 L945.6,255.5 L945.9,244.4 L946.1,249.4 L946.3,254.7 L946.5,274.6 L946.7,305.4 L946.9,309.5 L947.2,288.1 L947.4,269.1 L947.6,255.4 L947.8,243.6 L948.0,239.6 L948.2,254.6 L948.4,276.4 L948.7,279.8 L948.9,284.2 L949.1,306.2 L949.3,304.1 L949.5,287.5 L949.7,297.4 L950.0,312.2 L950.2,314.8 L950.4,311.2 L950.6,295.5 L950.8,278.9 L951.0,278.7 L951.3,278.9 L951.5,258.6 L951.7,241.0 L951.9,248.7 L952.1,256.4 L952.3,247.2 L952.6,234.6 L952.8,235.5 L953.0,252.5 L953.2,269.8 L953.4,279.3 L953.6,292.6 L953.9,311.2 L954.1,321.5 L954.3,322.7 L954.5,325.4 L954.7,323.8 L954.9,307.2 L955.2,295.7 L955.4,292.0 L955.6,272.1 L955.8,246.3 L956.0,235.1 L956.2,225.0 L956.5,219.9 L956.7,234.7 L956.9,248.4 L957.1,258.5 L957.3,268.4 L957.5,267.9 L957.8,265.2 L958.0,274.7 L958.2,289.9 L958.4,307.3 L958.6,332.5 L958.8,349.7 L959.1,347.1 L959.3,338.3 L959.5,321.3 L959.7,290.1 L959.9,264.5 L960.1,248.9 L960.4,233.6 L960.6,223.6 L960.8,221.5 L961.0,224.9 L961.2,232.0 L961.4,237.1 L961.7,241.0 L961.9,251.3 L962.1,274.0 L962.3,298.1 L962.5,318.6 L962.7,337.4 L963.0,342.8 L963.2,333.8 L963.4,327.0 L963.6,321.7 L963.8,305.8 L964.0,280.6 L964.3,258.5 L964.5,250.1 L964.7,251.5 L964.9,248.5 L965.1,240.2 L965.3,234.8 L965.6,229.2 L965.8,228.3 L966.0,241.2 L966.2,252.0 L966.4,256.9 L966.6,274.0 L966.9,301.2 L967.1,320.3 L967.3,328.5 L967.5,332.8 L967.7,331.4 L967.9,320.8 L968.2,309.0 L968.4,307.3 L968.6,312.0 L968.8,301.9 L969.0,271.0 L969.2,237.3 L969.5,215.9 L969.7,217.5 L969.9,228.8 L970.1,223.9 L970.3,213.3 L970.5,221.0 L970.8,237.5 L971.0,251.0 L971.2,275.3 L971.4,306.7 L971.6,325.5 L971.8,334.3 L972.1,337.9 L972.3,332.4 L972.5,327.8 L972.7,335.4 L972.9,343.8 L973.1,321.1 L973.4,280.0 L973.6,265.0 L973.8,259.2 L974.0,228.0 L974.2,220.3 L974.4,253.9 L974.7,260.2 L974.9,222.1 L975.1,197.7 L975.3,203.6 L975.5,210.7 L975.7,219.7 L976.0,258.8 L976.2,319.8 L976.4,355.7 L976.6,358.7 L976.8,353.9 L977.0,342.3 L977.3,319.9 L977.5,296.5 L977.7,282.4 L977.9,284.7 L978.1,295.3 L978.3,292.2 L978.6,277.1 L978.8,269.0 L979.0,253.0 L979.2,211.4 L979.4,187.9 L979.6,185.7 L979.9,195.1 L980.1,244.6 L980.3,280.4 L980.5,303.5 L980.7,319.8 L980.9,317.9 L981.2,316.7 L981.4,330.8 L981.6,342.6 L981.8,345.0 L982.0,345.1 L982.2,338.1 L982.5,314.9 L982.7,278.5 L982.9,235.6 L983.1,199.0 L983.3,193.9 L983.5,211.5 L983.8,231.5 L984.0,236.2 L984.2,246.4 L984.4,261.7 L984.6,265.1 L984.8,273.2 L985.1,298.5 L985.3,313.2 L985.5,305.7 L985.7,297.7 L985.9,302.8 L986.1,315.5 L986.3,320.1 L986.6,315.6 L986.8,309.5 L987.0,295.2 L987.2,274.0 L987.4,259.1 L987.6,252.6 L987.9,242.7 L988.1,234.6 L988.3,240.4 L988.5,260.8 L988.7,275.8 L988.9,267.5 L989.2,254.3 L989.4,259.5 L989.6,266.3 L989.8,254.2 L990.0,243.9 L990.2,254.3 L990.5,268.6 L990.7,274.5 L990.9,282.1 L991.1,296.1 L991.3,301.2 L991.5,293.8 L991.8,288.1 L992.0,295.8 L992.2,313.2 L992.4,330.3 L992.6,331.4 L992.8,322.6 L993.1,315.4 L993.3,300.7 L993.5,271.1 L993.7,244.5 L993.9,234.0 L994.1,233.9 L994.4,237.0 L994.6,243.0 L994.8,235.3 L995.0,223.5 L995.2,231.1 L995.4,245.1 L995.7,261.0 L995.9,288.6 L996.1,318.5 L996.3,329.5 L996.5,324.0 L996.7,312.3 L997.0,302.9 L997.2,297.8 L997.4,298.1 L997.6,300.5 L997.8,308.8 L998.0,313.3 L998.3,296.8 L998.5,264.4 L998.7,237.9 L998.9,221.8 L999.1,208.4 L999.3,212.6 L999.6,246.3 L999.8,277.3 L1000.0,277.0 L1000.2,270.6 L1000.4,279.3 L1000.6,284.1 L1000.9,274.0 L1001.1,269.5 L1001.3,275.3 L1001.5,278.7 L1001.7,280.9 L1001.9,287.5 L1002.2,291.9 L1002.4,286.1 L1002.6,280.3 L1002.8,288.9 L1003.0,296.1 L1003.2,287.6 L1003.5,291.7 L1003.7,314.3 L1003.9,316.1 L1004.1,301.8 L1004.3,297.9 L1004.5,289.4 L1004.8,267.1 L1005.0,250.3 L1005.2,252.1 L1005.4,267.0 L1005.6,272.5 L1005.8,260.6 L1006.1,250.6 L1006.3,249.2 L1006.5,247.0 L1006.7,240.5 L1006.9,241.0 L1007.1,252.6 L1007.4,258.8 L1007.6,268.0 L1007.8,288.7 L1008.0,305.7 L1008.2,314.7 L1008.4,322.3 L1008.7,326.9 L1008.9,324.8 L1009.1,311.3 L1009.3,290.2 L1009.5,284.5 L1009.7,286.7 L1010.0,273.2 L1010.2,258.6 L1010.4,257.4 L1010.6,256.5 L1010.8,256.2 L1011.0,270.3 L1011.3,286.6 L1011.5,283.9 L1011.7,268.5 L1011.9,243.0 L1012.1,227.9 L1012.3,236.4 L1012.6,248.1 L1012.8,245.8 L1013.0,253.0 L1013.2,282.7 L1013.4,301.8 L1013.6,297.6 L1013.9,300.7 L1014.1,319.4 L1014.3,321.2 L1014.5,299.8 L1014.7,286.0 L1014.9,284.2 L1015.2,283.4 L1015.4,291.5 L1015.6,298.5 L1015.8,287.3 L1016.0,272.3 L1016.2,264.8 L1016.5,255.6 L1016.7,239.4 L1016.9,232.1 L1017.1,245.0 L1017.3,270.4 L1017.5,294.3 L1017.8,309.8 L1018.0,306.0 L1018.2,269.9 L1018.4,233.7 L1018.6,245.7 L1018.8,275.6 L1019.1,276.5 L1019.3,264.9 L1019.5,288.1 L1019.7,327.9 L1019.9,325.4 L1020.1,310.6 L1020.4,316.3 L1020.6,314.1 L1020.8,296.6 L1021.0,277.0 L1021.2,259.3 L1021.4,250.5 L1021.7,253.4 L1021.9,255.4 L1022.1,256.8 L1022.3,264.7 L1022.5,272.3 L1022.7,277.3 L1023.0,278.4 L1023.2,264.3 L1023.4,253.8 L1023.6,271.4 L1023.8,290.1 L1024.0,283.1 L1024.3,269.7 L1024.5,268.5 L1024.7,277.5 L1024.9,291.5 L1025.1,307.3 L1025.3,312.8 L1025.5,298.1 L1025.8,281.5 L1026.0,279.3 L1026.2,285.7 L1026.4,268.7 L1026.6,236.5 L1026.8,230.1 L1027.1,241.6 L1027.3,255.9 L1027.5,276.1 L1027.7,288.1 L1027.9,282.3 L1028.1,276.1 L1028.4,274.6 L1028.6,268.3 L1028.8,258.5 L1029.0,251.2 L1029.2,248.2 L1029.4,253.0 L1029.7,276.8 L1029.9,303.5 L1030.1,302.9 L1030.3,292.4 L1030.5,299.1 L1030.7,311.7 L1031.0,310.8 L1031.2,295.1 L1031.4,278.7 L1031.6,277.9 L1031.8,289.1 L1032.0,293.9 L1032.3,282.0 L1032.5,263.7 L1032.7,256.6 L1032.9,265.6 L1033.1,271.2 L1033.3,261.9 L1033.6,249.3 L1033.8,246.6 L1034.0,249.9 L1034.2,245.4 L1034.4,249.0 L1034.6,274.1 L1034.9,300.3 L1035.1,315.3 L1035.3,318.5 L1035.5,307.9 L1035.7,296.0 L1035.9,292.9 L1036.2,289.1 L1036.4,281.5 L1036.6,280.3 L1036.8,287.6 L1037.0,289.9 L1037.2,291.2 L1037.5,286.5 L1037.7,269.1 L1037.9,254.8 L1038.1,250.5 L1038.3,237.9 L1038.5,225.7 L1038.8,244.6 L1039.0,274.6 L1039.2,281.4 L1039.4,277.5 L1039.6,275.7 L1039.8,271.0 L1040.1,277.5 L1040.3,292.7 L1040.5,296.9 L1040.7,302.1 L1040.9,318.3 L1041.1,321.2 L1041.4,300.2 L1041.6,284.2 L1041.8,282.7 L1042.0,273.2 L1042.2,254.3 L1042.4,238.8 L1042.7,233.0 L1042.9,246.2 L1043.1,264.2 L1043.3,262.3 L1043.5,254.1 L1043.7,266.4 L1044.0,283.4 L1044.2,282.6 L1044.4,275.5 L1044.6,270.8 L1044.8,271.1 L1045.0,287.3 L1045.3,314.8 L1045.5,324.9 L1045.7,316.7 L1045.9,307.7 L1046.1,296.0 L1046.3,279.5 L1046.6,271.2 L1046.8,274.8 L1047.0,278.9 L1047.2,274.7 L1047.4,262.9 L1047.6,247.7 L1047.9,248.0 L1048.1,265.3 L1048.3,263.1 L1048.5,245.5 L1048.7,248.9 L1048.9,259.4 L1049.2,259.4 L1049.4,266.8 L1049.6,282.0 L1049.8,289.3 L1050.0,297.7 L1050.2,307.9 L1050.5,304.1 L1050.7,294.6 L1050.9,296.5 L1051.1,299.2 L1051.3,291.7 L1051.5,284.0 L1051.8,282.9 L1052.0,283.5 L1052.2,275.3 L1052.4,262.3 L1052.6,259.7 L1052.8,259.3 L1053.1,250.4 L1053.3,248.7 L1053.5,261.7 L1053.7,276.9 L1053.9,283.4 L1054.1,279.2 L1054.4,263.9 L1054.6,245.6 L1054.8,251.7 L1055.0,276.3 L1055.2,286.9 L1055.4,279.8 L1055.7,282.8 L1055.9,297.2 L1056.1,306.3 L1056.3,301.4 L1056.5,298.1 L1056.7,300.8 L1057.0,295.6 L1057.2,282.0 L1057.4,271.4 L1057.6,270.6 L1057.8,274.8 L1058.0,268.2 L1058.3,254.6 L1058.5,260.4 L1058.7,285.1 L1058.9,300.7 L1059.1,289.5 L1059.3,270.1 L1059.6,263.5 L1059.8,265.9 L1060.0,252.7 L1060.2,240.3 L1060.4,259.3 L1060.6,285.6 L1060.9,289.8 L1061.1,284.1 L1061.3,280.7 L1061.5,274.8 L1061.7,272.0 L1061.9,281.3 L1062.2,289.5 L1062.4,293.7 L1062.6,307.1 L1062.8,312.7 L1063.0,291.8 L1063.2,270.3 L1063.5,267.3 L1063.7,260.9 L1063.9,251.1 L1064.1,259.7 L1064.3,276.1 L1064.5,277.8 L1064.7,274.1 L1065.0,271.9 L1065.2,264.6 L1065.4,259.9 L1065.6,275.5 L1065.8,289.2 L1066.0,276.7 L1066.3,262.2 L1066.5,264.1 L1066.7,269.7 L1066.9,274.1 L1067.1,286.1 L1067.3,301.6 L1067.6,307.7 L1067.8,298.2 L1068.0,286.2 L1068.2,282.0 L1068.4,275.4 L1068.6,266.2 L1068.9,264.5 L1069.1,264.9 L1069.3,265.9 L1069.5,267.7 L1069.7,265.4 L1069.9,262.7 L1070.2,268.2 L1070.4,276.2 L1070.6,277.6 L1070.8,277.7 L1071.0,288.9 L1071.2,300.7 L1071.5,294.0 L1071.7,281.1 L1071.9,275.7 L1072.1,273.8 L1072.3,273.7 L1072.5,277.9 L1072.8,283.2 L1073.0,285.2 L1073.2,279.0 L1073.4,270.5 L1073.6,273.3 L1073.8,269.4 L1074.1,250.4 L1074.3,256.6 L1074.5,284.9 L1074.7,283.0 L1074.9,263.4 L1075.1,266.4 L1075.4,287.1 L1075.6,294.6 L1075.8,280.1 L1076.0,265.4 L1076.2,265.2 L1076.4,269.3 L1076.7,271.7 L1076.9,272.2 L1077.1,272.7 L1077.3,278.9 L1077.5,285.1 L1077.7,277.1 L1078.0,265.3 L1078.2,271.1 L1078.4,288.2 L1078.6,295.0 L1078.8,291.0 L1079.0,295.0 L1079.3,304.0 L1079.5,295.5 L1079.7,273.8 L1079.9,264.7 L1080.1,263.7 L1080.3,259.7 L1080.6,267.2 L1080.8,283.1 L1081.0,283.2 L1081.2,270.2 L1081.4,264.3 L1081.6,267.9 L1081.9,268.9 L1082.1,265.2 L1082.3,260.1 L1082.5,260.2 L1082.7,270.6 L1082.9,281.7 L1083.2,283.4 L1083.4,285.6 L1083.6,293.6 L1083.8,300.8 L1084.0,303.8 L1084.2,301.2 L1084.5,292.5 L1084.7,284.4 L1084.9,278.9 L1085.1,270.0 L1085.3,260.3 L1085.5,260.7 L1085.8,265.6 L1086.0,264.5 L1086.2,266.8 L1086.4,272.9 L1086.6,271.8 L1086.8,267.5 L1087.1,266.5 L1087.3,267.3 L1087.5,269.5 L1087.7,272.9 L1087.9,279.6 L1088.1,287.1 L1088.4,281.4 L1088.6,270.1 L1088.8,278.0 L1089.0,288.7 L1089.2,277.1 L1089.4,266.5 L1089.7,282.2 L1089.9,307.2 L1090.1,312.8 L1090.3,297.1 L1090.5,278.6 L1090.7,265.5 L1091.0,251.6 L1091.2,237.1 L1091.4,237.2 L1091.6,260.3 L1091.8,288.5 L1092.0,300.9 L1092.3,291.7 L1092.5,277.0 L1092.7,273.0 L1092.9,272.2 L1093.1,265.3 L1093.3,265.8 L1093.6,276.2 L1093.8,284.6 L1094.0,296.9 L1094.2,308.6 L1094.4,300.3 L1094.6,280.4 L1094.9,274.4 L1095.1,280.4 L1095.3,281.0 L1095.5,274.9 L1095.7,274.0 L1095.9,270.7 L1096.2,258.7 L1096.4,249.3 L1096.6,239.4 L1096.8,238.5 L1097.0,266.8 L1097.2,296.8 L1097.5,302.0 L1097.7,305.3 L1097.9,312.6 L1098.1,297.7 L1098.3,276.2 L1098.5,277.9 L1098.8,286.0 L1099.0,280.4 L1099.2,271.5 L1099.4,265.1 L1099.6,261.9 L1099.8,267.7 L1100.1,275.0 L1100.3,273.7 L1100.5,270.0 L1100.7,271.6 L1100.9,274.0 L1101.1,276.7 L1101.4,281.8 L1101.6,281.1 L1101.8,275.5 L1102.0,275.1 L1102.2,275.2 L1102.4,271.0 L1102.7,272.1 L1102.9,285.8 L1103.1,294.3 L1103.3,284.7 L1103.5,277.3 L1103.7,275.4 L1103.9,263.1 L1104.2,252.7 L1104.4,259.2 L1104.6,265.8 L1104.8,258.9 L1105.0,261.0 L1105.2,278.7 L1105.5,290.7 L1105.7,291.3 L1105.9,294.5 L1106.1,300.6 L1106.3,299.1 L1106.5,290.7 L1106.8,284.8 L1107.0,280.1 L1107.2,273.2 L1107.4,272.3 L1107.6,280.3 L1107.8,282.1 L1108.1,273.5 L1108.3,276.4 L1108.5,289.5 L1108.7,282.3 L1108.9,260.2 L1109.1,255.5 L1109.4,266.8 L1109.6,270.7 L1109.8,270.9 L1110.0,281.3 L1110.2,291.3 L1110.4,286.3 L1110.7,272.0 L1110.9,261.3 L1111.1,257.6 L1111.3,260.5 L1111.5,270.7 L1111.7,284.2 L1112.0,301.0 L1112.2,309.4 L1112.4,299.7 L1112.6,274.9 L1112.8,264.5 L1113.0,286.5 L1113.3,302.7 L1113.5,287.7 L1113.7,275.3 L1113.9,273.5 L1114.1,258.1 L1114.3,241.3 L1114.6,244.2 L1114.8,256.5 L1115.0,265.4 L1115.2,273.2 L1115.4,279.9 L1115.6,287.0 L1115.9,292.4 L1116.1,293.0 L1116.3,290.3 L1116.5,285.5 L1116.7,282.7 L1116.9,288.7 L1117.2,292.6 L1117.4,280.3 L1117.6,269.4 L1117.8,276.8 L1118.0,287.8 L1118.2,277.2 L1118.5,257.6 L1118.7,254.5 L1118.9,264.7 L1119.1,265.5 L1119.3,262.8 L1119.5,270.3 L1119.8,278.1 L1120.0,281.8 L1120.2,286.9 L1120.4,285.8 L1120.6,283.6 L1120.8,292.0 L1121.1,295.9 L1121.3,280.2 L1121.5,264.9 L1121.7,273.9 L1121.9,292.2 L1122.1,286.3 L1122.4,267.3 L1122.6,271.2 L1122.8,286.9 L1123.0,280.6 L1123.2,263.4 L1123.4,253.2 L1123.7,253.6 L1123.9,260.4 L1124.1,270.8 L1124.3,278.8 L1124.5,278.9 L1124.7,278.4 L1125.0,287.5 L1125.2,295.1 L1125.4,291.1 L1125.6,285.5 L1125.8,287.9 L1126.0,290.9 L1126.3,283.3 L1126.5,276.5 L1126.7,284.0 L1126.9,287.5 L1127.1,270.5 L1127.3,252.7 L1127.6,250.7 L1127.8,256.2 L1128.0,261.6 L1128.2,269.5 L1128.4,283.3 L1128.6,297.2 L1128.9,299.4 L1129.1,287.7 L1129.3,279.4 L1129.5,281.7 L1129.7,278.6 L1129.9,267.0 L1130.2,265.8 L1130.4,272.5 L1130.6,281.2 L1130.8,284.9 L1131.0,286.2 L1131.2,281.8 L1131.5,273.9 L1131.7,276.8 L1131.9,283.2 L1132.1,275.5 L1132.3,267.4 L1132.5,274.8 L1132.8,284.7 L1133.0,290.8 L1133.2,294.5 L1133.4,290.9 L1133.6,281.0 L1133.8,270.5 L1134.1,260.4 L1134.3,257.0 L1134.5,263.6 L1134.7,269.9 L1134.9,269.6 L1135.1,270.4 L1135.4,275.7 L1135.6,279.0 L1135.8,277.0 L1136.0,271.8 L1136.2,272.9 L1136.4,279.0 L1136.7,280.5 L1136.9,283.1 L1137.1,290.8 L1137.3,291.6 L1137.5,285.4 L1137.7,284.8 L1138.0,283.4 L1138.2,277.1 L1138.4,274.9 L1138.6,271.9 L1138.8,262.0 L1139.0,256.3 L1139.3,258.5 L1139.5,264.6 L1139.7,277.3 L1139.9,290.9 L1140.1,288.0 L1140.3,271.7 L1140.6,264.3 L1140.8,273.6 L1141.0,280.7 L1141.2,276.7 L1141.4,278.1 L1141.6,293.3 L1141.8,301.6 L1142.1,293.5 L1142.3,287.9 L1142.5,289.9 L1142.7,279.6 L1142.9,262.8 L1143.1,262.0 L1143.4,268.0 L1143.6,263.6 L1143.8,261.1 L1144.0,269.3 L1144.2,276.1 L1144.4,276.9 L1144.7,279.5 L1144.9,286.5 L1145.1,290.2 L1145.3,288.9 L1145.5,288.3 L1145.7,285.4 L1146.0,275.9 L1146.2,267.1 L1146.4,262.3 L1146.6,259.3 L1146.8,270.0 L1147.0,283.5 L1147.3,284.5 L1147.5,283.7 L1147.7,287.7 L1147.9,283.3 L1148.1,272.8 L1148.3,269.6 L1148.6,266.3 L1148.8,260.5 L1149.0,267.0 L1149.2,284.5 L1149.4,293.7 L1149.6,291.2 L1149.9,287.8 L1150.1,285.4 L1150.3,280.2 L1150.5,271.3 L1150.7,266.3 L1150.9,266.4 L1151.2,265.1 L1151.4,267.9 L1151.6,277.1 L1151.8,282.8 L1152.0,274.2 L1152.2,264.6 L1152.5,268.4 L1152.7,283.2 L1152.9,291.5 L1153.1,288.2 L1153.3,284.7 L1153.5,288.0 L1153.8,288.8 L1154.0,284.4 L1154.2,278.6 L1154.4,270.3 L1154.6,260.9 L1154.8,256.6 L1155.1,264.2 L1155.3,272.3 L1155.5,270.7 L1155.7,268.2 L1155.9,272.1 L1156.1,275.5 L1156.4,273.4 L1156.6,278.0 L1156.8,292.9 L1157.0,293.8 L1157.2,279.2 L1157.4,273.9 L1157.7,279.2 L1157.9,282.4 L1158.1,282.3 L1158.3,282.9 L1158.5,281.6 L1158.7,280.3 L1159.0,280.6 L1159.2,278.6 L1159.4,275.4 L1159.6,274.0 L1159.8,271.7 L1160.0,267.7 L1160.3,268.0 L1160.5,269.9 L1160.7,269.4 L1160.9,271.2 L1161.1,275.3 L1161.3,274.9 L1161.6,275.6 L1161.8,283.0 L1162.0,292.3 L1162.2,297.3 L1162.4,296.1 L1162.6,289.8 L1162.9,279.7 L1163.1,268.6 L1163.3,267.5 L1163.5,274.2 L1163.7,274.1 L1163.9,269.8 L1164.2,272.0 L1164.4,271.7 L1164.6,266.3 L1164.8,265.4 L1165.0,263.8 L1165.2,260.6 L1165.5,270.9 L1165.7,286.3 L1165.9,289.7 L1166.1,288.8 L1166.3,286.2 L1166.5,277.9 L1166.8,270.1 L1167.0,266.0 L1167.2,266.8 L1167.4,272.9 L1167.6,279.5 L1167.8,280.7 L1168.1,275.4 L1168.3,271.8 L1168.5,279.4 L1168.7,280.6 L1168.9,273.5 L1169.1,282.8 L1169.4,294.5 L1169.6,288.1 L1169.8,286.1 L1170.0,295.2 L1170.2,292.5 L1170.4,278.1 L1170.7,263.0 L1170.9,259.2 L1171.1,254.5 L1171.3,245.4 L1171.5,248.2 L1171.7,267.0 L1172.0,283.8 L1172.2,291.7 L1172.4,298.5 L1172.6,298.6 L1172.8,291.3 L1173.0,279.1 L1173.3,269.7 L1173.5,264.8 L1173.7,264.9 L1173.9,272.6 L1174.1,277.1 L1174.3,277.7 L1174.6,283.9 L1174.8,293.7 L1175.0,298.5 L1175.2,292.9 L1175.4,276.9 L1175.6,259.6 L1175.9,254.1 L1176.1,254.4 L1176.3,252.4 L1176.5,254.8 L1176.7,266.3 L1176.9,282.6 L1177.2,290.2 L1177.4,288.8 L1177.6,288.6 L1177.8,283.4 L1178.0,269.8 L1178.2,272.6 L1178.5,289.8 L1178.7,289.9 L1178.9,280.3 L1179.1,282.1 L1179.3,284.2 L1179.5,273.5 L1179.8,263.4 L1180.0,268.3 L1180.2,282.7 L1180.4,293.0" stroke="#0072BD" stroke-width="1"/>
<path d="M520.5,276.8 L520.7,277.0 L520.9,277.3 L521.1,277.6 L521.4,277.8 L521.6,277.9 L521.8,277.9 L522.0,277.7 L522.2,277.4 L522.4,277.0 L522.7,276.6 L522.9,276.1 L523.1,275.7 L523.3,275.4 L523.5,275.1 L523.7,275.0 L524.0,275.0 L524.2,275.2 L524.4,275.4 L524.6,275.8 L524.8,276.2 L525.0,276.7 L525.3,277.1 L525.5,277.5 L525.7,277.9 L525.9,278.0 L526.1,278.2 L526.3,278.3 L526.6,278.2 L526.8,278.0 L527.0,277.8 L527.2,277.5 L527.4,277.2 L527.6,277.0 L527.9,276.7 L528.1,276.6 L528.3,276.5 L528.5,276.5 L528.7,276.6 L528.9,276.8 L529.2,277.0 L529.4,277.2 L529.6,277.3 L529.8,277.5 L530.0,277.5 L530.2,277.5 L530.5,277.3 L530.7,277.1 L530.9,276.9 L531.1,276.5 L531.3,276.2 L531.5,275.9 L531.8,275.7 L532.0,275.6 L532.2,275.6 L532.4,275.7 L532.6,275.8 L532.8,276.0 L533.1,276.2 L533.3,276.3 L533.5,276.4 L533.7,276.5 L533.9,276.5 L534.1,276.4 L534.4,276.3 L534.6,276.1 L534.8,275.9 L535.0,275.7 L535.2,275.6 L535.4,275.5 L535.7,275.5 L535.9,275.6 L536.1,275.8 L536.3,276.1 L536.5,276.5 L536.7,276.9 L537.0,277.4 L537.2,277.9 L537.4,278.4 L537.6,278.8 L537.8,279.2 L538.0,279.3 L538.3,279.3 L538.5,279.2 L538.7,279.1 L538.9,278.8 L539.1,278.4 L539.3,277.9 L539.6,277.3 L539.8,276.7 L540.0,276.2 L540.2,275.7 L540.4,275.3 L540.6,275.1 L540.9,275.0 L541.1,274.8 L541.3,274.9 L541.5,275.0 L541.7,275.3 L541.9,275.7 L542.2,276.0 L542.4,276.4 L542.6,276.8 L542.8,277.1 L543.0,277.4 L543.2,277.6 L543.5,277.7 L543.7,277.8 L543.9,277.7 L544.1,277.6 L544.3,277.5 L544.5,277.3 L544.8,277.0 L545.0,276.8 L545.2,276.5 L545.4,276.2 L545.6,276.0 L545.8,275.9 L546.1,275.8 L546.3,275.7 L546.5,275.7 L546.7,275.8 L546.9,275.8 L547.1,275.8 L547.4,275.9 L547.6,275.9 L547.8,275.9 L548.0,276.0 L548.2,276.2 L548.4,276.4 L548.7,276.8 L548.9,277.3 L549.1,277.9 L549.3,278.6 L549.5,279.3 L549.7,279.9 L550.0,280.3 L550.2,280.6 L550.4,280.6 L550.6,280.4 L550.8,279.7 L551.0,278.8 L551.3,277.8 L551.5,276.7 L551.7,275.6 L551.9,274.6 L552.1,273.8 L552.3,273.1 L552.6,272.8 L552.8,272.7 L553.0,272.8 L553.2,273.2 L553.4,273.7 L553.6,274.4 L553.9,275.1 L554.1,275.9 L554.3,276.6 L554.5,277.2 L554.7,277.6 L554.9,278.0 L555.2,278.1 L555.4,278.1 L555.6,278.0 L555.8,277.8 L556.0,277.6 L556.2,277.2 L556.5,276.9 L556.7,276.6 L556.9,276.3 L557.1,276.1 L557.3,276.0 L557.5,275.9 L557.8,276.0 L558.0,276.2 L558.2,276.5 L558.4,276.7 L558.6,277.0 L558.8,277.4 L559.1,277.7 L559.3,278.1 L559.5,278.5 L559.7,278.9 L559.9,279.1 L560.1,279.3 L560.3,279.4 L560.6,279.3 L560.8,279.2 L561.0,278.9 L561.2,278.5 L561.4,278.0 L561.6,277.4 L561.9,276.9 L562.1,276.4 L562.3,275.9 L562.5,275.6 L562.7,275.3 L562.9,275.2 L563.2,275.2 L563.4,275.3 L563.6,275.6 L563.8,275.8 L564.0,276.2 L564.2,276.5 L564.5,276.8 L564.7,277.0 L564.9,277.1 L565.1,277.1 L565.3,277.0 L565.5,276.9 L565.8,276.7 L566.0,276.4 L566.2,276.2 L566.4,275.9 L566.6,275.8 L566.8,275.7 L567.1,275.7 L567.3,275.8 L567.5,276.0 L567.7,276.3 L567.9,276.6 L568.1,276.9 L568.4,277.2 L568.6,277.4 L568.8,277.6 L569.0,277.7 L569.2,277.7 L569.4,277.6 L569.7,277.5 L569.9,277.2 L570.1,276.9 L570.3,276.6 L570.5,276.2 L570.7,275.9 L571.0,275.7 L571.2,275.5 L571.4,275.5 L571.6,275.5 L571.8,275.6 L572.0,275.8 L572.3,276.0 L572.5,276.3 L572.7,276.7 L572.9,277.1 L573.1,277.4 L573.3,277.7 L573.6,278.0 L573.8,278.2 L574.0,278.3 L574.2,278.3 L574.4,278.3 L574.6,278.1 L574.9,277.8 L575.1,277.5 L575.3,277.1 L575.5,276.7 L575.7,276.3 L575.9,275.9 L576.2,275.5 L576.4,275.2 L576.6,275.0 L576.8,274.9 L577.0,274.9 L577.2,274.9 L577.5,275.1 L577.7,275.4 L577.9,275.7 L578.1,276.0 L578.3,276.4 L578.5,276.7 L578.8,277.1 L579.0,277.3 L579.2,277.5 L579.4,277.6 L579.6,277.7 L579.8,277.7 L580.1,277.6 L580.3,277.6 L580.5,277.5 L580.7,277.4 L580.9,277.3 L581.1,277.3 L581.4,277.3 L581.6,277.3 L581.8,277.4 L582.0,277.5 L582.2,277.7 L582.4,277.8 L582.7,278.0 L582.9,278.1 L583.1,278.2 L583.3,278.3 L583.5,278.2 L583.7,278.2 L584.0,278.0 L584.2,277.7 L584.4,277.4 L584.6,277.1 L584.8,276.7 L585.0,276.2 L585.3,275.8 L585.5,275.5 L585.7,275.1 L585.9,274.9 L586.1,274.8 L586.3,274.7 L586.6,274.8 L586.8,275.0 L587.0,275.3 L587.2,275.7 L587.4,276.1 L587.6,276.6 L587.9,277.0 L588.1,277.5 L588.3,277.8 L588.5,278.0 L588.7,278.2 L588.9,278.2 L589.2,278.1 L589.4,277.9 L589.6,277.5 L589.8,277.1 L590.0,276.7 L590.2,276.3 L590.5,275.9 L590.7,275.5 L590.9,275.3 L591.1,275.1 L591.3,275.1 L591.5,275.1 L591.8,275.3 L592.0,275.6 L592.2,275.9 L592.4,276.2 L592.6,276.5 L592.8,276.8 L593.1,277.0 L593.3,277.1 L593.5,277.2 L593.7,277.1 L593.9,277.0 L594.1,276.8 L594.4,276.6 L594.6,276.4 L594.8,276.2 L595.0,276.0 L595.2,276.0 L595.4,276.0 L595.7,276.1 L595.9,276.3 L596.1,276.6 L596.3,277.0 L596.5,277.4 L596.7,277.8 L597.0,278.2 L597.2,278.6 L597.4,278.8 L597.6,278.9 L597.8,278.9 L598.0,278.8 L598.2,278.5 L598.5,278.2 L598.7,277.7 L598.9,277.3 L599.1,276.8 L599.3,276.3 L599.5,276.0 L599.8,275.7 L600.0,275.5 L600.2,275.5 L600.4,275.6 L600.6,275.8 L600.8,276.1 L601.1,276.4 L601.3,276.8 L601.5,277.2 L601.7,277.5 L601.9,277.7 L602.1,277.9 L602.4,277.9 L602.6,277.8 L602.8,277.7 L603.0,277.4 L603.2,277.1 L603.4,276.7 L603.7,276.4 L603.9,276.1 L604.1,275.8 L604.3,275.6 L604.5,275.6 L604.7,275.6 L605.0,275.7 L605.2,276.0 L605.4,276.3 L605.6,276.6 L605.8,277.0 L606.0,277.4 L606.3,277.7 L606.5,277.9 L606.7,278.1 L606.9,278.1 L607.1,278.0 L607.3,277.8 L607.6,277.4 L607.8,277.0 L608.0,276.5 L608.2,276.0 L608.4,275.5 L608.6,275.1 L608.9,274.7 L609.1,274.5 L609.3,274.4 L609.5,274.5 L609.7,274.7 L609.9,275.0 L610.2,275.4 L610.4,275.9 L610.6,276.5 L610.8,277.0 L611.0,277.4 L611.2,277.8 L611.5,278.0 L611.7,278.1 L611.9,278.1 L612.1,278.0 L612.3,277.8 L612.5,277.4 L612.8,277.1 L613.0,276.7 L613.2,276.3 L613.4,276.0 L613.6,275.7 L613.8,275.6 L614.1,275.6 L614.3,275.7 L614.5,275.8 L614.7,276.1 L614.9,276.4 L615.1,276.7 L615.4,277.1 L615.6,277.4 L615.8,277.6 L616.0,277.8 L616.2,277.9 L616.4,277.9 L616.7,277.8 L616.9,277.7 L617.1,277.5 L617.3,277.3 L617.5,277.1 L617.7,276.9 L618.0,276.8 L618.2,276.8 L618.4,276.8 L618.6,276.9 L618.8,277.1 L619.0,277.4 L619.3,277.6 L619.5,277.9 L619.7,278.2 L619.9,278.4 L620.1,278.6 L620.3,278.6 L620.6,278.6 L620.8,278.5 L621.0,278.3 L621.2,278.0 L621.4,277.6 L621.6,277.3 L621.9,276.9 L622.1,276.6 L622.3,276.3 L622.5,276.2 L622.7,276.1 L622.9,276.0 L623.2,276.0 L623.4,276.0 L623.6,276.0 L623.8,276.0 L624.0,275.9 L624.2,275.8 L624.5,275.6 L624.7,275.3 L624.9,275.1 L625.1,274.9 L625.3,274.6 L625.5,274.5 L625.8,274.4 L626.0,274.4 L626.2,274.4 L626.4,274.6 L626.6,274.9 L626.8,275.3 L627.1,275.7 L627.3,276.1 L627.5,276.6 L627.7,277.0 L627.9,277.4 L628.1,277.7 L628.4,278.0 L628.6,278.1 L628.8,278.2 L629.0,278.2 L629.2,278.0 L629.4,277.8 L629.7,277.5 L629.9,277.1 L630.1,276.7 L630.3,276.4 L630.5,276.1 L630.7,275.9 L631.0,275.9 L631.2,275.8 L631.4,275.9 L631.6,276.2 L631.8,276.6 L632.0,277.1 L632.3,277.7 L632.5,278.2 L632.7,278.7 L632.9,279.2 L633.1,279.5 L633.3,279.6 L633.6,279.6 L633.8,279.5 L634.0,279.1 L634.2,278.6 L634.4,278.0 L634.6,277.2 L634.9,276.5 L635.1,275.7 L635.3,275.1 L635.5,274.6 L635.7,274.3 L635.9,274.1 L636.2,274.2 L636.4,274.4 L636.6,274.7 L636.8,275.2 L637.0,275.7 L637.2,276.2 L637.4,276.8 L637.7,277.3 L637.9,277.7 L638.1,278.0 L638.3,278.3 L638.5,278.4 L638.7,278.3 L639.0,278.2 L639.2,278.0 L639.4,277.7 L639.6,277.4 L639.8,277.1 L640.0,276.7 L640.3,276.4 L640.5,276.2 L640.7,276.0 L640.9,275.9 L641.1,275.9 L641.3,276.0 L641.6,276.1 L641.8,276.2 L642.0,276.5 L642.2,276.7 L642.4,277.0 L642.6,277.3 L642.9,277.5 L643.1,277.7 L643.3,277.8 L643.5,277.8 L643.7,277.7 L643.9,277.5 L644.2,277.3 L644.4,276.9 L644.6,276.5 L644.8,276.2 L645.0,275.8 L645.2,275.6 L645.5,275.4 L645.7,275.4 L645.9,275.5 L646.1,275.7 L646.3,275.9 L646.5,276.2 L646.8,276.4 L647.0,276.7 L647.2,276.8 L647.4,276.8 L647.6,276.8 L647.8,276.6 L648.1,276.3 L648.3,276.0 L648.5,275.7 L648.7,275.4 L648.9,275.1 L649.1,275.0 L649.4,275.0 L649.6,275.1 L649.8,275.3 L650.0,275.7 L650.2,276.2 L650.4,276.8 L650.7,277.4 L650.9,278.0 L651.1,278.6 L651.3,279.1 L651.5,279.4 L651.7,279.7 L652.0,279.7 L652.2,279.7 L652.4,279.4 L652.6,279.1 L652.8,278.6 L653.0,278.2 L653.3,277.6 L653.5,277.1 L653.7,276.7 L653.9,276.3 L654.1,276.1 L654.3,275.9 L654.6,275.8 L654.8,275.8 L655.0,275.9 L655.2,276.1 L655.4,276.3 L655.6,276.6 L655.9,276.9 L656.1,277.1 L656.3,277.3 L656.5,277.4 L656.7,277.3 L656.9,277.2 L657.2,276.9 L657.4,276.6 L657.6,276.1 L657.8,275.7 L658.0,275.2 L658.2,274.8 L658.5,274.5 L658.7,274.3 L658.9,274.3 L659.1,274.4 L659.3,274.8 L659.5,275.3 L659.8,276.0 L660.0,276.8 L660.2,277.7 L660.4,278.6 L660.6,279.4 L660.8,280.0 L661.1,280.5 L661.3,280.6 L661.5,280.4 L661.7,280.0 L661.9,279.3 L662.1,278.5 L662.4,277.6 L662.6,276.6 L662.8,275.7 L663.0,274.9 L663.2,274.3 L663.4,273.9 L663.7,273.8 L663.9,273.9 L664.1,274.3 L664.3,274.8 L664.5,275.5 L664.7,276.2 L665.0,276.9 L665.2,277.5 L665.4,278.0 L665.6,278.3 L665.8,278.3 L666.0,278.1 L666.3,277.8 L666.5,277.2 L666.7,276.6 L666.9,275.9 L667.1,275.3 L667.3,274.7 L667.6,274.3 L667.8,274.0 L668.0,274.0 L668.2,274.1 L668.4,274.5 L668.6,275.0 L668.9,275.6 L669.1,276.3 L669.3,277.0 L669.5,277.7 L669.7,278.3 L669.9,278.9 L670.2,279.3 L670.4,279.6 L670.6,279.7 L670.8,279.6 L671.0,279.3 L671.2,278.9 L671.5,278.4 L671.7,277.8 L671.9,277.2 L672.1,276.7 L672.3,276.3 L672.5,276.1 L672.8,276.1 L673.0,276.2 L673.2,276.6 L673.4,277.1 L673.6,277.6 L673.8,278.2 L674.1,278.7 L674.3,279.1 L674.5,279.3 L674.7,279.2 L674.9,278.8 L675.1,278.2 L675.4,277.4 L675.6,276.4 L675.8,275.3 L676.0,274.3 L676.2,273.4 L676.4,272.8 L676.6,272.5 L676.9,272.5 L677.1,272.9 L677.3,273.6 L677.5,274.6 L677.7,275.7 L677.9,276.8 L678.2,277.9 L678.4,278.7 L678.6,279.2 L678.8,279.4 L679.0,279.2 L679.2,278.6 L679.5,277.7 L679.7,276.6 L679.9,275.4 L680.1,274.3 L680.3,273.3 L680.5,272.6 L680.8,272.3 L681.0,272.4 L681.2,273.0 L681.4,274.1 L681.6,275.5 L681.8,277.1 L682.1,278.9 L682.3,280.6 L682.5,282.2 L682.7,283.4 L682.9,284.0 L683.1,284.1 L683.4,283.6 L683.6,282.6 L683.8,281.1 L684.0,279.3 L684.2,277.3 L684.4,275.3 L684.7,273.5 L684.9,272.0 L685.1,270.8 L685.3,270.2 L685.5,270.2 L685.7,270.6 L686.0,271.6 L686.2,272.9 L686.4,274.6 L686.6,276.3 L686.8,278.1 L687.0,279.7 L687.3,281.1 L687.5,282.0 L687.7,282.5 L687.9,282.5 L688.1,282.1 L688.3,281.2 L688.6,280.0 L688.8,278.5 L689.0,276.9 L689.2,275.4 L689.4,273.9 L689.6,272.7 L689.9,271.8 L690.1,271.3 L690.3,271.1 L690.5,271.4 L690.7,272.0 L690.9,273.0 L691.2,274.1 L691.4,275.3 L691.6,276.6 L691.8,277.8 L692.0,278.8 L692.2,279.6 L692.5,280.2 L692.7,280.5 L692.9,280.5 L693.1,280.3 L693.3,279.8 L693.5,279.3 L693.8,278.6 L694.0,277.8 L694.2,277.1 L694.4,276.4 L694.6,275.9 L694.8,275.4 L695.1,275.1 L695.3,274.9 L695.5,274.9 L695.7,275.0 L695.9,275.3 L696.1,275.7 L696.4,276.2 L696.6,276.8 L696.8,277.5 L697.0,278.2 L697.2,278.9 L697.4,279.5 L697.7,280.0 L697.9,280.3 L698.1,280.5 L698.3,280.4 L698.5,280.1 L698.7,279.5 L699.0,278.8 L699.2,277.8 L699.4,276.8 L699.6,275.7 L699.8,274.7 L700.0,273.7 L700.3,272.9 L700.5,272.4 L700.7,272.1 L700.9,272.2 L701.1,272.4 L701.3,273.0 L701.6,273.7 L701.8,274.6 L702.0,275.5 L702.2,276.5 L702.4,277.3 L702.6,277.9 L702.9,278.4 L703.1,278.6 L703.3,278.6 L703.5,278.3 L703.7,277.9 L703.9,277.4 L704.2,276.9 L704.4,276.4 L704.6,275.9 L704.8,275.6 L705.0,275.4 L705.2,275.4 L705.5,275.5 L705.7,275.9 L705.9,276.4 L706.1,277.0 L706.3,277.5 L706.5,278.0 L706.8,278.5 L707.0,278.7 L707.2,278.7 L707.4,278.6 L707.6,278.3 L707.8,277.8 L708.1,277.2 L708.3,276.6 L708.5,276.1 L708.7,275.6 L708.9,275.3 L709.1,275.1 L709.4,275.2 L709.6,275.5 L709.8,275.9 L710.0,276.5 L710.2,277.2 L710.4,278.0 L710.7,278.7 L710.9,279.3 L711.1,279.7 L711.3,279.9 L711.5,279.9 L711.7,279.6 L712.0,279.2 L712.2,278.5 L712.4,277.8 L712.6,277.0 L712.8,276.1 L713.0,275.4 L713.3,274.8 L713.5,274.4 L713.7,274.4 L713.9,274.4 L714.1,274.7 L714.3,275.2 L714.6,275.9 L714.8,276.8 L715.0,277.6 L715.2,278.4 L715.4,279.2 L715.6,279.7 L715.8,279.9 L716.1,279.9 L716.3,279.8 L716.5,279.4 L716.7,278.8 L716.9,278.0 L717.1,277.1 L717.4,276.2 L717.6,275.3 L717.8,274.6 L718.0,274.0 L718.2,273.7 L718.4,273.6 L718.7,273.8 L718.9,274.2 L719.1,274.8 L719.3,275.5 L719.5,276.3 L719.7,277.1 L720.0,277.9 L720.2,278.5 L720.4,279.0 L720.6,279.3 L720.8,279.4 L721.0,279.3 L721.3,279.1 L721.5,278.7 L721.7,278.3 L721.9,277.8 L722.1,277.4 L722.3,277.0 L722.6,276.8 L722.8,276.5 L723.0,276.4 L723.2,276.3 L723.4,276.3 L723.6,276.2 L723.9,276.2 L724.1,276.1 L724.3,276.0 L724.5,276.0 L724.7,275.9 L724.9,275.9 L725.2,276.1 L725.4,276.3 L725.6,276.6 L725.8,277.0 L726.0,277.5 L726.2,278.1 L726.5,278.5 L726.7,278.9 L726.9,279.1 L727.1,279.2 L727.3,279.0 L727.5,278.6 L727.8,278.1 L728.0,277.5 L728.2,276.8 L728.4,276.2 L728.6,275.7 L728.8,275.4 L729.1,275.4 L729.3,275.7 L729.5,276.3 L729.7,277.2 L729.9,278.3 L730.1,279.4 L730.4,280.5 L730.6,281.5 L730.8,282.3 L731.0,282.7 L731.2,282.8 L731.4,282.4 L731.7,281.7 L731.9,280.7 L732.1,279.5 L732.3,278.1 L732.5,276.8 L732.7,275.5 L733.0,274.5 L733.2,273.8 L733.4,273.5 L733.6,273.3 L733.8,273.6 L734.0,274.1 L734.3,274.9 L734.5,275.7 L734.7,276.6 L734.9,277.4 L735.1,278.0 L735.3,278.5 L735.6,278.7 L735.8,278.8 L736.0,278.6 L736.2,278.3 L736.4,277.9 L736.6,277.4 L736.9,276.9 L737.1,276.4 L737.3,276.0 L737.5,275.8 L737.7,275.6 L737.9,275.6 L738.2,275.8 L738.4,276.1 L738.6,276.5 L738.8,277.0 L739.0,277.5 L739.2,278.2 L739.5,278.8 L739.7,279.4 L739.9,279.9 L740.1,280.4 L740.3,280.9 L740.5,281.2 L740.8,281.4 L741.0,281.4 L741.2,281.3 L741.4,281.1 L741.6,280.7 L741.8,280.2 L742.1,279.6 L742.3,278.8 L742.5,278.0 L742.7,277.1 L742.9,276.1 L743.1,275.2 L743.4,274.3 L743.6,273.4 L743.8,272.7 L744.0,272.2 L744.2,271.8 L744.4,271.7 L744.7,271.9 L744.9,272.4 L745.1,273.1 L745.3,274.2 L745.5,275.6 L745.7,277.2 L746.0,278.9 L746.2,280.6 L746.4,282.4 L746.6,283.9 L746.8,285.1 L747.0,285.9 L747.3,286.2 L747.5,286.0 L747.7,285.1 L747.9,283.7 L748.1,281.8 L748.3,279.5 L748.6,277.2 L748.8,274.9 L749.0,272.7 L749.2,271.0 L749.4,269.7 L749.6,269.4 L749.9,269.1 L750.1,269.7 L750.3,271.0 L750.5,272.7 L750.7,274.7 L750.9,276.9 L751.2,279.0 L751.4,280.9 L751.6,282.4 L751.8,282.8 L752.0,282.9 L752.2,283.0 L752.5,282.0 L752.7,280.5 L752.9,278.7 L753.1,276.6 L753.3,274.7 L753.5,273.0 L753.7,271.7 L754.0,271.1 L754.2,271.3 L754.4,271.4 L754.6,272.5 L754.8,274.2 L755.0,276.1 L755.3,278.2 L755.5,280.1 L755.7,281.8 L755.9,283.0 L756.1,283.6 L756.3,283.5 L756.6,282.9 L756.8,281.6 L757.0,280.0 L757.2,278.1 L757.4,276.2 L757.6,274.5 L757.9,273.2 L758.1,272.4 L758.3,272.1 L758.5,272.5 L758.7,273.4 L758.9,274.7 L759.2,276.2 L759.4,277.7 L759.6,279.0 L759.8,279.8 L760.0,280.2 L760.2,280.0 L760.5,279.2 L760.7,278.1 L760.9,276.8 L761.1,275.4 L761.3,274.2 L761.5,273.3 L761.8,273.0 L762.0,273.1 L762.2,273.8 L762.4,275.0 L762.6,276.5 L762.8,278.1 L763.1,279.7 L763.3,281.1 L763.5,282.1 L763.7,282.7 L763.9,282.6 L764.1,282.1 L764.4,281.0 L764.6,279.6 L764.8,277.9 L765.0,276.3 L765.2,274.8 L765.4,273.7 L765.7,273.0 L765.9,272.9 L766.1,273.2 L766.3,274.0 L766.5,275.0 L766.7,276.3 L767.0,277.4 L767.2,278.3 L767.4,278.8 L767.6,278.9 L767.8,278.4 L768.0,277.6 L768.3,276.4 L768.5,275.1 L768.7,273.9 L768.9,272.9 L769.1,272.2 L769.3,272.1 L769.6,272.4 L769.8,273.1 L770.0,274.2 L770.2,275.6 L770.4,277.0 L770.6,278.4 L770.9,279.6 L771.1,280.4 L771.3,280.8 L771.5,280.8 L771.7,280.3 L771.9,279.3 L772.2,278.1 L772.4,276.8 L772.6,275.4 L772.8,274.1 L773.0,273.1 L773.2,272.6 L773.5,272.4 L773.7,272.8 L773.9,273.7 L774.1,275.0 L774.3,276.6 L774.5,278.3 L774.8,280.0 L775.0,281.5 L775.2,282.7 L775.4,283.4 L775.6,283.6 L775.8,283.3 L776.1,282.4 L776.3,281.0 L776.5,279.3 L776.7,277.3 L776.9,275.4 L777.1,273.6 L777.4,272.2 L777.6,271.2 L777.8,270.7 L778.0,270.9 L778.2,271.5 L778.4,272.7 L778.7,274.2 L778.9,275.9 L779.1,277.6 L779.3,279.2 L779.5,280.4 L779.7,281.3 L780.0,281.6 L780.2,281.4 L780.4,280.7 L780.6,279.6 L780.8,278.1 L781.0,276.4 L781.3,274.7 L781.5,273.1 L781.7,271.9 L781.9,271.0 L782.1,270.7 L782.3,270.9 L782.6,271.6 L782.8,272.9 L783.0,274.5 L783.2,276.3 L783.4,278.2 L783.6,280.1 L783.9,281.6 L784.1,282.8 L784.3,283.5 L784.5,283.7 L784.7,283.3 L784.9,282.5 L785.2,281.1 L785.4,279.5 L785.6,277.7 L785.8,275.8 L786.0,274.0 L786.2,272.4 L786.5,271.2 L786.7,270.4 L786.9,270.1 L787.1,270.3 L787.3,270.9 L787.5,272.0 L787.8,273.4 L788.0,274.9 L788.2,276.6 L788.4,278.2 L788.6,279.7 L788.8,280.9 L789.1,281.8 L789.3,282.4 L789.5,282.5 L789.7,282.4 L789.9,281.8 L790.1,281.0 L790.4,280.0 L790.6,278.7 L790.8,277.4 L791.0,276.0 L791.2,274.6 L791.4,273.3 L791.7,272.2 L791.9,271.3 L792.1,270.6 L792.3,270.3 L792.5,270.5 L792.7,271.0 L792.9,272.0 L793.2,273.4 L793.4,275.2 L793.6,277.2 L793.8,279.4 L794.0,281.4 L794.2,283.2 L794.5,284.6 L794.7,285.4 L794.9,285.5 L795.1,284.9 L795.3,283.6 L795.5,281.7 L795.8,279.3 L796.0,276.6 L796.2,273.9 L796.4,271.5 L796.6,269.5 L796.8,268.2 L797.1,267.7 L797.3,268.0 L797.5,269.2 L797.7,271.0 L797.9,273.2 L798.1,275.7 L798.4,278.2 L798.6,280.3 L798.8,281.9 L799.0,282.9 L799.2,283.0 L799.4,282.5 L799.7,281.4 L799.9,279.9 L800.1,278.2 L800.3,276.6 L800.5,275.4 L800.7,274.6 L801.0,274.4 L801.2,274.8 L801.4,275.6 L801.6,276.7 L801.8,277.8 L802.0,278.5 L802.3,278.7 L802.5,278.2 L802.7,277.1 L802.9,275.7 L803.1,274.1 L803.3,272.6 L803.6,271.4 L803.8,270.9 L804.0,271.1 L804.2,272.0 L804.4,273.6 L804.6,275.7 L804.9,278.2 L805.1,280.6 L805.3,282.8 L805.5,284.4 L805.7,285.3 L805.9,285.3 L806.2,284.3 L806.4,282.5 L806.6,280.0 L806.8,277.0 L807.0,273.9 L807.2,271.0 L807.5,268.7 L807.7,267.1 L807.9,266.5 L808.1,266.9 L808.3,268.4 L808.5,270.8 L808.8,273.8 L809.0,277.2 L809.2,280.7 L809.4,283.8 L809.6,286.2 L809.8,287.8 L810.1,288.3 L810.3,287.7 L810.5,285.9 L810.7,283.2 L810.9,279.9 L811.1,276.2 L811.4,272.5 L811.6,269.1 L811.8,266.5 L812.0,264.8 L812.2,264.3 L812.4,264.9 L812.7,266.7 L812.9,269.5 L813.1,272.9 L813.3,276.7 L813.5,280.5 L813.7,283.9 L814.0,286.5 L814.2,288.2 L814.4,288.7 L814.6,288.0 L814.8,286.3 L815.0,283.5 L815.3,280.2 L815.5,276.5 L815.7,272.9 L815.9,269.7 L816.1,267.3 L816.3,265.9 L816.6,265.7 L816.8,266.6 L817.0,268.7 L817.2,271.6 L817.4,275.1 L817.6,278.8 L817.9,282.4 L818.1,285.5 L818.3,287.7 L818.5,288.9 L818.7,288.8 L818.9,287.5 L819.2,285.2 L819.4,281.9 L819.6,278.1 L819.8,274.1 L820.0,270.2 L820.2,266.9 L820.5,264.5 L820.7,263.2 L820.9,263.1 L821.1,264.3 L821.3,266.7 L821.5,269.9 L821.8,273.7 L822.0,277.8 L822.2,281.8 L822.4,285.2 L822.6,287.9 L822.8,289.4 L823.1,289.8 L823.3,289.0 L823.5,287.1 L823.7,284.3 L823.9,280.9 L824.1,277.2 L824.4,273.7 L824.6,270.6 L824.8,268.3 L825.0,266.8 L825.2,266.4 L825.4,267.0 L825.7,268.5 L825.9,270.8 L826.1,273.7 L826.3,276.8 L826.5,279.9 L826.7,282.7 L827.0,284.9 L827.2,286.4 L827.4,287.0 L827.6,286.7 L827.8,285.6 L828.0,283.8 L828.3,281.4 L828.5,278.6 L828.7,275.7 L828.9,272.8 L829.1,270.3 L829.3,268.2 L829.6,266.8 L829.8,266.1 L830.0,266.1 L830.2,266.9 L830.4,268.3 L830.6,270.2 L830.9,272.6 L831.1,275.1 L831.3,277.7 L831.5,280.1 L831.7,282.2 L831.9,283.9 L832.1,284.9 L832.4,285.4 L832.6,285.2 L832.8,284.3 L833.0,282.9 L833.2,281.0 L833.4,278.9 L833.7,276.5 L833.9,274.2 L834.1,272.2 L834.3,270.5 L834.5,269.4 L834.7,268.9 L835.0,269.0 L835.2,269.8 L835.4,271.3 L835.6,273.2 L835.8,275.4 L836.0,277.7 L836.3,279.9 L836.5,281.8 L836.7,283.3 L836.9,284.1 L837.1,284.3 L837.3,283.8 L837.6,282.6 L837.8,281.0 L838.0,279.1 L838.2,277.0 L838.4,275.2 L838.6,273.6 L838.9,272.6 L839.1,272.3 L839.3,272.6 L839.5,273.7 L839.7,275.3 L839.9,277.3 L840.2,279.6 L840.4,281.7 L840.6,283.6 L840.8,285.0 L841.0,285.8 L841.2,285.7 L841.5,284.9 L841.7,283.2 L841.9,281.0 L842.1,278.3 L842.3,275.4 L842.5,272.6 L842.8,270.3 L843.0,268.6 L843.2,267.7 L843.4,267.6 L843.6,268.5 L843.8,270.2 L844.1,272.4 L844.3,274.8 L844.5,277.3 L844.7,279.4 L844.9,281.0 L845.1,281.7 L845.4,281.5 L845.6,280.3 L845.8,278.3 L846.0,275.7 L846.2,272.6 L846.4,269.6 L846.7,266.8 L846.9,264.7 L847.1,263.3 L847.3,263.0 L847.5,263.7 L847.7,265.4 L848.0,267.8 L848.2,270.8 L848.4,273.9 L848.6,276.9 L848.8,279.4 L849.0,281.2 L849.3,282.2 L849.5,282.4 L849.7,281.7 L849.9,280.5 L850.1,278.9 L850.3,277.4 L850.6,276.2 L850.8,275.6 L851.0,275.9 L851.2,277.1 L851.4,279.2 L851.6,281.9 L851.9,284.9 L852.1,287.9 L852.3,290.4 L852.5,292.1 L852.7,292.8 L852.9,292.2 L853.2,290.5 L853.4,287.8 L853.6,284.3 L853.8,280.4 L854.0,276.4 L854.2,272.8 L854.5,269.8 L854.7,267.7 L854.9,266.7 L855.1,266.9 L855.3,268.0 L855.5,270.1 L855.8,272.7 L856.0,275.7 L856.2,278.7 L856.4,281.4 L856.6,283.5 L856.8,284.6 L857.1,284.9 L857.3,284.4 L857.5,282.8 L857.7,280.4 L857.9,277.6 L858.1,274.5 L858.4,271.4 L858.6,268.6 L858.8,266.4 L859.0,265.4 L859.2,265.4 L859.4,265.3 L859.7,266.1 L859.9,268.4 L860.1,271.2 L860.3,274.5 L860.5,277.8 L860.7,280.8 L861.0,283.2 L861.2,284.8 L861.4,284.6 L861.6,283.6 L861.8,282.7 L862.0,280.1 L862.3,276.5 L862.5,272.2 L862.7,267.7 L862.9,263.3 L863.1,259.5 L863.3,256.5 L863.6,254.6 L863.8,254.1 L864.0,255.0 L864.2,257.2 L864.4,260.8 L864.6,265.4 L864.9,270.7 L865.1,276.4 L865.3,282.2 L865.5,287.8 L865.7,292.7 L865.9,296.8 L866.2,299.8 L866.4,301.6 L866.6,302.2 L866.8,301.7 L867.0,300.2 L867.2,297.8 L867.5,294.9 L867.7,291.7 L867.9,288.4 L868.1,285.1 L868.3,282.0 L868.5,279.3 L868.8,276.8 L869.0,274.7 L869.2,272.9 L869.4,271.2 L869.6,269.7 L869.8,268.1 L870.0,266.5 L870.3,264.8 L870.5,263.2 L870.7,261.6 L870.9,260.2 L871.1,259.2 L871.3,258.7 L871.6,258.9 L871.8,259.8 L872.0,261.6 L872.2,264.1 L872.4,267.3 L872.6,270.9 L872.9,274.9 L873.1,278.9 L873.3,282.6 L873.5,285.8 L873.7,288.3 L873.9,289.8 L874.2,290.2 L874.4,289.4 L874.6,287.6 L874.8,284.7 L875.0,281.1 L875.2,276.9 L875.5,272.6 L875.7,268.4 L875.9,264.8 L876.1,262.1 L876.3,261.1 L876.5,260.9 L876.8,262.0 L877.0,264.8 L877.2,268.8 L877.4,273.8 L877.6,279.4 L877.8,285.1 L878.1,290.5 L878.3,295.0 L878.5,298.4 L878.7,298.4 L878.9,298.3 L879.1,298.2 L879.4,295.4 L879.6,290.7 L879.8,284.8 L880.0,278.4 L880.2,271.9 L880.4,265.8 L880.7,260.6 L880.9,256.8 L881.1,255.4 L881.3,255.4 L881.5,255.7 L881.7,258.9 L882.0,263.5 L882.2,269.2 L882.4,275.5 L882.6,281.9 L882.8,288.0 L883.0,293.2 L883.3,297.3 L883.5,300.0 L883.7,301.3 L883.9,301.2 L884.1,299.8 L884.3,297.3 L884.6,294.0 L884.8,290.2 L885.0,286.2 L885.2,282.1 L885.4,278.1 L885.6,274.4 L885.9,270.8 L886.1,267.6 L886.3,264.6 L886.5,261.8 L886.7,259.5 L886.9,257.6 L887.2,256.4 L887.4,256.0 L887.6,256.6 L887.8,258.4 L888.0,261.4 L888.2,265.5 L888.5,270.6 L888.7,276.3 L888.9,282.4 L889.1,288.4 L889.3,293.7 L889.5,298.0 L889.8,300.8 L890.0,301.8 L890.2,301.0 L890.4,298.2 L890.6,293.6 L890.8,287.5 L891.1,280.3 L891.3,272.5 L891.5,264.7 L891.7,257.4 L891.9,251.1 L892.1,246.2 L892.4,243.1 L892.6,241.7 L892.8,242.2 L893.0,244.3 L893.2,247.9 L893.4,252.4 L893.7,257.7 L893.9,263.2 L894.1,268.6 L894.3,273.6 L894.5,277.9 L894.7,281.6 L895.0,284.4 L895.2,286.5 L895.4,287.9 L895.6,288.7 L895.8,289.0 L896.0,288.9 L896.3,288.4 L896.5,287.6 L896.7,286.3 L896.9,284.7 L897.1,282.6 L897.3,280.1 L897.6,277.4 L897.8,274.6 L898.0,272.0 L898.2,269.7 L898.4,268.0 L898.6,267.2 L898.9,267.6 L899.1,269.2 L899.3,272.1 L899.5,276.1 L899.7,281.0 L899.9,286.5 L900.2,292.1 L900.4,297.3 L900.6,301.7 L900.8,304.8 L901.0,306.3 L901.2,305.3 L901.5,303.2 L901.7,298.7 L901.9,292.3 L902.1,284.3 L902.3,275.2 L902.5,265.6 L902.8,256.1 L903.0,247.3 L903.2,239.9 L903.4,234.4 L903.6,232.9 L903.8,232.4 L904.1,232.4 L904.3,236.8 L904.5,243.5 L904.7,251.9 L904.9,261.3 L905.1,271.2 L905.4,280.7 L905.6,289.3 L905.8,296.3 L906.0,301.5 L906.2,304.4 L906.4,305.0 L906.7,303.5 L906.9,300.1 L907.1,295.2 L907.3,289.3 L907.5,283.0 L907.7,276.7 L908.0,270.9 L908.2,265.8 L908.4,261.9 L908.6,259.3 L908.8,258.0 L909.0,258.0 L909.2,259.3 L909.5,261.6 L909.7,264.9 L909.9,268.9 L910.1,273.5 L910.3,278.4 L910.5,283.4 L910.8,288.3 L911.0,292.9 L911.2,297.0 L911.4,300.3 L911.6,302.7 L911.8,304.1 L912.1,304.4 L912.3,303.6 L912.5,301.8 L912.7,299.0 L912.9,295.6 L913.1,291.8 L913.4,287.9 L913.6,284.0 L913.8,280.5 L914.0,277.4 L914.2,274.6 L914.4,272.2 L914.7,270.0 L914.9,267.8 L915.1,265.5 L915.3,263.2 L915.5,260.9 L915.7,258.8 L916.0,257.4 L916.2,257.0 L916.4,258.0 L916.6,260.6 L916.8,265.0 L917.0,271.2 L917.3,278.7 L917.5,287.2 L917.7,295.9 L917.9,304.0 L918.1,310.8 L918.3,315.5 L918.6,317.4 L918.8,316.2 L919.0,312.2 L919.2,304.9 L919.4,294.6 L919.6,282.1 L919.9,268.4 L920.1,254.5 L920.3,241.8 L920.5,231.5 L920.7,227.6 L920.9,226.6 L921.2,225.6 L921.4,230.7 L921.6,241.7 L921.8,256.0 L922.0,272.6 L922.2,289.9 L922.5,306.4 L922.7,320.6 L922.9,329.1 L923.1,329.6 L923.3,330.2 L923.5,330.8 L923.8,320.9 L924.0,306.0 L924.2,288.0 L924.4,268.6 L924.6,250.1 L924.8,234.2 L925.1,222.0 L925.3,215.2 L925.5,215.6 L925.7,216.0 L925.9,222.6 L926.1,233.8 L926.4,247.7 L926.6,262.8 L926.8,277.9 L927.0,291.5 L927.2,302.7 L927.4,310.6 L927.7,314.9 L927.9,315.5 L928.1,312.7 L928.3,307.3 L928.5,300.0 L928.7,291.8 L929.0,283.7 L929.2,276.4 L929.4,270.6 L929.6,266.6 L929.8,264.5 L930.0,263.8 L930.3,264.2 L930.5,264.9 L930.7,265.4 L930.9,265.1 L931.1,263.9 L931.3,261.9 L931.6,259.5 L931.8,257.2 L932.0,255.6 L932.2,255.2 L932.4,256.5 L932.6,259.6 L932.9,264.3 L933.1,270.4 L933.3,277.3 L933.5,284.3 L933.7,290.8 L933.9,295.9 L934.2,299.3 L934.4,300.3 L934.6,299.0 L934.8,295.3 L935.0,289.6 L935.2,282.4 L935.5,274.5 L935.7,266.5 L935.9,259.3 L936.1,253.4 L936.3,249.5 L936.5,249.1 L936.8,250.2 L937.0,251.4 L937.2,256.1 L937.4,262.1 L937.6,269.0 L937.8,275.9 L938.1,282.2 L938.3,287.5 L938.5,292.1 L938.7,295.0 L938.9,295.3 L939.1,295.6 L939.4,294.3 L939.6,290.6 L939.8,285.7 L940.0,280.0 L940.2,274.2 L940.4,268.7 L940.7,264.0 L940.9,260.6 L941.1,258.8 L941.3,258.6 L941.5,260.2 L941.7,263.3 L942.0,267.5 L942.2,272.4 L942.4,277.7 L942.6,282.6 L942.8,286.9 L943.0,290.2 L943.3,292.3 L943.5,293.0 L943.7,292.5 L943.9,290.9 L944.1,288.7 L944.3,286.1 L944.6,283.5 L944.8,281.3 L945.0,279.7 L945.2,278.7 L945.4,278.3 L945.6,278.3 L945.9,278.4 L946.1,278.2 L946.3,277.5 L946.5,276.1 L946.7,274.1 L946.9,271.6 L947.2,268.8 L947.4,266.2 L947.6,264.1 L947.8,263.1 L948.0,263.4 L948.2,265.3 L948.4,268.9 L948.7,273.9 L948.9,280.1 L949.1,287.0 L949.3,293.8 L949.5,299.9 L949.7,304.5 L950.0,307.0 L950.2,306.9 L950.4,304.1 L950.6,298.7 L950.8,290.9 L951.0,281.3 L951.3,270.9 L951.5,260.5 L951.7,251.3 L951.9,244.1 L952.1,239.9 L952.3,239.1 L952.6,241.8 L952.8,248.2 L953.0,257.6 L953.2,269.3 L953.4,282.2 L953.6,295.0 L953.9,306.4 L954.1,315.4 L954.3,319.7 L954.5,320.3 L954.7,319.2 L954.9,312.0 L955.2,301.2 L955.4,287.8 L955.6,273.0 L955.8,258.2 L956.0,244.9 L956.2,234.5 L956.5,227.9 L956.7,227.0 L956.9,228.8 L957.1,236.5 L957.3,248.1 L957.5,262.6 L957.8,278.7 L958.0,294.7 L958.2,309.2 L958.4,320.7 L958.6,328.0 L958.8,330.4 L959.1,327.6 L959.3,319.9 L959.5,308.0 L959.7,293.0 L959.9,276.3 L960.1,259.6 L960.4,244.5 L960.6,232.5 L960.8,224.8 L961.0,222.2 L961.2,224.9 L961.4,232.7 L961.7,244.9 L961.9,260.3 L962.1,277.5 L962.3,294.7 L962.5,310.0 L962.7,322.1 L963.0,329.8 L963.2,332.4 L963.4,329.8 L963.6,322.1 L963.8,310.2 L964.0,295.2 L964.3,278.5 L964.5,261.8 L964.7,246.5 L964.9,234.1 L965.1,225.7 L965.3,222.0 L965.6,223.4 L965.8,229.6 L966.0,240.1 L966.2,253.9 L966.4,269.7 L966.6,286.2 L966.9,301.9 L967.1,315.3 L967.3,325.5 L967.5,331.4 L967.7,332.6 L967.9,329.0 L968.2,320.9 L968.4,309.0 L968.6,294.3 L968.8,277.9 L969.0,261.3 L969.2,245.8 L969.5,232.7 L969.7,223.1 L969.9,217.8 L970.1,217.3 L970.3,221.7 L970.5,230.7 L970.8,243.6 L971.0,259.4 L971.2,276.9 L971.4,294.7 L971.6,311.3 L971.8,325.4 L972.1,335.7 L972.3,341.4 L972.5,341.9 L972.7,337.0 L972.9,327.2 L973.1,313.0 L973.4,295.7 L973.6,276.8 L973.8,257.7 L974.0,240.1 L974.2,225.6 L974.4,215.2 L974.7,210.0 L974.9,210.4 L975.1,216.3 L975.3,227.4 L975.5,242.6 L975.7,260.7 L976.0,280.2 L976.2,299.2 L976.4,316.2 L976.6,329.7 L976.8,338.5 L977.0,341.7 L977.3,339.2 L977.5,331.1 L977.7,318.2 L977.9,301.5 L978.1,282.7 L978.3,263.3 L978.6,245.1 L978.8,229.8 L979.0,218.8 L979.2,212.9 L979.4,212.9 L979.6,218.6 L979.9,229.6 L980.1,244.7 L980.3,262.8 L980.5,282.0 L980.7,300.7 L980.9,317.1 L981.2,329.8 L981.4,337.6 L981.6,339.8 L981.8,336.4 L982.0,327.5 L982.2,314.2 L982.5,297.7 L982.7,279.4 L982.9,261.3 L983.1,244.9 L983.3,231.7 L983.5,223.0 L983.8,219.5 L984.0,221.6 L984.2,228.9 L984.4,240.4 L984.6,255.1 L984.8,271.3 L985.1,287.6 L985.3,302.3 L985.5,314.1 L985.7,322.0 L985.9,325.5 L986.1,324.3 L986.3,318.9 L986.6,310.0 L986.8,298.7 L987.0,286.3 L987.2,274.0 L987.4,262.9 L987.6,254.1 L987.9,248.1 L988.1,245.1 L988.3,245.0 L988.5,247.2 L988.7,250.9 L988.9,255.3 L989.2,259.6 L989.4,262.9 L989.6,265.0 L989.8,265.9 L990.0,265.9 L990.2,265.9 L990.5,266.7 L990.7,268.9 L990.9,273.1 L991.1,279.4 L991.3,287.3 L991.5,296.2 L991.8,305.1 L992.0,312.9 L992.2,318.4 L992.4,320.9 L992.6,319.6 L992.8,314.3 L993.1,305.4 L993.3,293.3 L993.5,279.1 L993.7,264.1 L993.9,249.8 L994.1,237.6 L994.4,228.6 L994.6,228.3 L994.8,228.5 L995.0,228.7 L995.2,237.6 L995.4,250.4 L995.7,265.6 L995.9,281.7 L996.1,297.4 L996.3,311.1 L996.5,321.6 L996.7,323.8 L997.0,323.5 L997.2,323.2 L997.4,319.7 L997.6,309.0 L997.8,295.9 L998.0,281.6 L998.3,267.5 L998.5,255.0 L998.7,245.1 L998.9,238.6 L999.1,235.9 L999.3,236.9 L999.6,241.2 L999.8,248.2 L1000.0,256.7 L1000.2,265.7 L1000.4,274.1 L1000.6,281.0 L1000.9,285.7 L1001.1,287.8 L1001.3,287.6 L1001.5,285.6 L1001.7,282.6 L1001.9,279.7 L1002.2,278.2 L1002.4,278.7 L1002.6,281.4 L1002.8,285.6 L1003.0,290.7 L1003.2,295.8 L1003.5,300.0 L1003.7,302.7 L1003.9,303.2 L1004.1,301.3 L1004.3,296.9 L1004.5,290.4 L1004.8,282.2 L1005.0,273.2 L1005.2,264.0 L1005.4,255.5 L1005.6,248.5 L1005.8,243.7 L1006.1,241.3 L1006.3,241.6 L1006.5,244.6 L1006.7,250.0 L1006.9,257.3 L1007.1,265.9 L1007.4,275.2 L1007.6,284.4 L1007.8,292.8 L1008.0,299.9 L1008.2,305.3 L1008.4,308.5 L1008.7,309.7 L1008.9,308.7 L1009.1,305.8 L1009.3,301.3 L1009.5,295.5 L1009.7,289.0 L1010.0,282.2 L1010.2,275.5 L1010.4,269.3 L1010.6,263.8 L1010.8,259.4 L1011.0,256.1 L1011.3,254.0 L1011.5,253.1 L1011.7,253.3 L1011.9,254.6 L1012.1,256.8 L1012.3,259.8 L1012.6,263.5 L1012.8,267.8 L1013.0,272.4 L1013.2,277.3 L1013.4,282.2 L1013.6,286.9 L1013.9,291.2 L1014.1,294.8 L1014.3,297.6 L1014.5,299.3 L1014.7,299.7 L1014.9,298.8 L1015.2,296.4 L1015.4,292.8 L1015.6,288.0 L1015.8,282.4 L1016.0,276.1 L1016.2,269.8 L1016.5,263.7 L1016.7,258.4 L1016.9,254.3 L1017.1,251.6 L1017.3,250.6 L1017.5,251.5 L1017.8,254.0 L1018.0,258.2 L1018.2,263.7 L1018.4,270.1 L1018.6,277.0 L1018.8,283.8 L1019.1,290.1 L1019.3,295.5 L1019.5,299.4 L1019.7,301.4 L1019.9,301.1 L1020.1,300.8 L1020.4,298.0 L1020.6,293.6 L1020.8,288.2 L1021.0,282.1 L1021.2,275.8 L1021.4,269.9 L1021.7,264.7 L1021.9,260.7 L1022.1,258.0 L1022.3,257.8 L1022.5,258.0 L1022.7,259.2 L1023.0,262.3 L1023.2,266.4 L1023.4,271.0 L1023.6,275.9 L1023.8,280.5 L1024.0,284.5 L1024.3,287.7 L1024.5,289.8 L1024.7,290.8 L1024.9,290.6 L1025.1,290.0 L1025.3,288.3 L1025.5,285.8 L1025.8,282.5 L1026.0,278.9 L1026.2,275.1 L1026.4,271.5 L1026.6,268.3 L1026.8,265.6 L1027.1,263.7 L1027.3,262.5 L1027.5,262.1 L1027.7,262.2 L1027.9,262.9 L1028.1,264.0 L1028.4,265.5 L1028.6,267.1 L1028.8,269.0 L1029.0,271.2 L1029.2,273.6 L1029.4,276.4 L1029.7,279.5 L1029.9,283.0 L1030.1,286.6 L1030.3,290.1 L1030.5,293.4 L1030.7,296.1 L1031.0,297.8 L1031.2,298.3 L1031.4,297.4 L1031.6,294.8 L1031.8,290.7 L1032.0,285.5 L1032.3,279.5 L1032.5,273.0 L1032.7,266.6 L1032.9,260.8 L1033.1,256.2 L1033.3,253.2 L1033.6,252.0 L1033.8,252.8 L1034.0,255.6 L1034.2,260.2 L1034.4,266.3 L1034.6,273.4 L1034.9,280.8 L1035.1,288.0 L1035.3,294.4 L1035.5,299.4 L1035.7,302.5 L1035.9,303.6 L1036.2,302.5 L1036.4,299.2 L1036.6,294.0 L1036.8,287.4 L1037.0,279.9 L1037.2,272.0 L1037.5,264.5 L1037.7,257.9 L1037.9,252.8 L1038.1,249.6 L1038.3,248.6 L1038.5,249.7 L1038.8,253.0 L1039.0,258.1 L1039.2,264.6 L1039.4,272.0 L1039.6,279.7 L1039.8,287.1 L1040.1,293.5 L1040.3,298.5 L1040.5,301.6 L1040.7,302.7 L1040.9,301.7 L1041.1,298.6 L1041.4,293.8 L1041.6,287.6 L1041.8,280.5 L1042.0,273.1 L1042.2,265.9 L1042.4,259.7 L1042.7,254.7 L1042.9,251.6 L1043.1,250.4 L1043.3,251.4 L1043.5,254.5 L1043.7,259.4 L1044.0,265.8 L1044.2,273.3 L1044.4,281.1 L1044.6,288.8 L1044.8,295.6 L1045.0,301.0 L1045.3,304.6 L1045.5,306.2 L1045.7,305.7 L1045.9,303.0 L1046.1,298.5 L1046.3,292.5 L1046.6,285.5 L1046.8,277.9 L1047.0,270.4 L1047.2,263.4 L1047.4,257.5 L1047.6,253.1 L1047.9,250.4 L1048.1,249.6 L1048.3,250.6 L1048.5,253.4 L1048.7,257.7 L1048.9,263.1 L1049.2,269.3 L1049.4,275.6 L1049.6,281.9 L1049.8,287.5 L1050.0,292.3 L1050.2,295.8 L1050.5,298.0 L1050.7,298.7 L1050.9,298.0 L1051.1,296.0 L1051.3,292.9 L1051.5,288.8 L1051.8,284.2 L1052.0,279.2 L1052.2,274.1 L1052.4,269.4 L1052.6,265.1 L1052.8,261.7 L1053.1,259.2 L1053.3,257.7 L1053.5,257.4 L1053.7,258.2 L1053.9,260.2 L1054.1,263.0 L1054.4,266.6 L1054.6,270.6 L1054.8,274.9 L1055.0,279.1 L1055.2,282.9 L1055.4,286.3 L1055.7,288.9 L1055.9,290.8 L1056.1,291.8 L1056.3,292.0 L1056.5,291.5 L1056.7,290.4 L1057.0,288.8 L1057.2,286.8 L1057.4,284.5 L1057.6,282.0 L1057.8,279.5 L1058.0,277.0 L1058.3,274.5 L1058.5,272.1 L1058.7,270.0 L1058.9,268.0 L1059.1,266.4 L1059.3,265.2 L1059.6,264.6 L1059.8,264.6 L1060.0,265.3 L1060.2,266.7 L1060.4,268.7 L1060.6,271.3 L1060.9,274.3 L1061.1,277.6 L1061.3,280.9 L1061.5,283.9 L1061.7,286.5 L1061.9,288.4 L1062.2,289.4 L1062.4,289.6 L1062.6,288.7 L1062.8,287.0 L1063.0,284.5 L1063.2,281.4 L1063.5,278.0 L1063.7,274.6 L1063.9,271.3 L1064.1,268.6 L1064.3,266.5 L1064.5,265.2 L1064.7,265.2 L1065.0,265.7 L1065.2,266.7 L1065.4,268.7 L1065.6,271.1 L1065.8,273.8 L1066.0,276.5 L1066.3,279.2 L1066.5,281.8 L1066.7,284.0 L1066.9,285.8 L1067.1,286.2 L1067.3,286.5 L1067.6,286.9 L1067.8,285.6 L1068.0,283.7 L1068.2,281.2 L1068.4,278.3 L1068.6,275.4 L1068.9,272.6 L1069.1,270.2 L1069.3,268.4 L1069.5,268.1 L1069.7,267.8 L1069.9,268.0 L1070.2,269.6 L1070.4,271.9 L1070.6,274.6 L1070.8,277.6 L1071.0,280.5 L1071.2,283.1 L1071.5,285.1 L1071.7,286.4 L1071.9,286.8 L1072.1,286.2 L1072.3,284.7 L1072.5,282.5 L1072.8,279.8 L1073.0,276.8 L1073.2,273.8 L1073.4,271.1 L1073.6,269.0 L1073.8,267.6 L1074.1,267.1 L1074.3,267.4 L1074.5,268.6 L1074.7,270.3 L1074.9,272.4 L1075.1,274.4 L1075.4,276.1 L1075.6,277.2 L1075.8,277.4 L1076.0,276.8 L1076.2,275.6 L1076.4,274.2 L1076.7,272.9 L1076.9,272.0 L1077.1,271.8 L1077.3,272.3 L1077.5,273.7 L1077.7,275.8 L1078.0,278.4 L1078.2,281.3 L1078.4,284.2 L1078.6,286.8 L1078.8,288.7 L1079.0,289.8 L1079.3,289.8 L1079.5,288.7 L1079.7,286.5 L1079.9,283.4 L1080.1,279.7 L1080.3,275.6 L1080.6,271.5 L1080.8,267.8 L1081.0,264.7 L1081.2,262.7 L1081.4,262.0 L1081.6,262.0 L1081.9,263.5 L1082.1,266.1 L1082.3,269.6 L1082.5,273.6 L1082.7,277.9 L1082.9,282.1 L1083.2,285.8 L1083.4,288.9 L1083.6,291.0 L1083.8,292.1 L1084.0,292.1 L1084.2,291.0 L1084.5,288.9 L1084.7,286.1 L1084.9,282.7 L1085.1,279.0 L1085.3,275.3 L1085.5,271.8 L1085.8,268.7 L1086.0,266.1 L1086.2,264.3 L1086.4,263.3 L1086.6,263.1 L1086.8,263.7 L1087.1,265.1 L1087.3,267.2 L1087.5,269.9 L1087.7,273.0 L1087.9,276.4 L1088.1,279.7 L1088.4,282.9 L1088.6,285.6 L1088.8,287.7 L1089.0,289.1 L1089.2,289.5 L1089.4,288.9 L1089.7,287.3 L1089.9,284.9 L1090.1,281.6 L1090.3,277.8 L1090.5,273.8 L1090.7,269.9 L1091.0,266.4 L1091.2,263.6 L1091.4,261.8 L1091.6,261.2 L1091.8,261.9 L1092.0,263.9 L1092.3,267.0 L1092.5,271.0 L1092.7,275.5 L1092.9,280.3 L1093.1,284.8 L1093.3,288.7 L1093.6,291.6 L1093.8,293.3 L1094.0,293.4 L1094.2,292.3 L1094.4,289.7 L1094.6,286.0 L1094.9,281.5 L1095.1,276.6 L1095.3,271.9 L1095.5,267.7 L1095.7,264.5 L1095.9,262.5 L1096.2,262.0 L1096.4,263.0 L1096.6,265.5 L1096.8,269.1 L1097.0,273.4 L1097.2,278.2 L1097.5,282.8 L1097.7,286.8 L1097.9,289.8 L1098.1,291.4 L1098.3,291.6 L1098.5,290.1 L1098.8,287.3 L1099.0,283.4 L1099.2,278.9 L1099.4,274.2 L1099.6,269.9 L1099.8,266.4 L1100.1,264.2 L1100.3,263.6 L1100.5,264.5 L1100.7,266.9 L1100.9,270.4 L1101.1,274.6 L1101.4,278.8 L1101.6,282.6 L1101.8,285.3 L1102.0,286.7 L1102.2,286.5 L1102.4,284.8 L1102.7,281.8 L1102.9,277.9 L1103.1,273.7 L1103.3,269.7 L1103.5,266.4 L1103.7,264.2 L1103.9,263.4 L1104.2,264.1 L1104.4,266.1 L1104.6,269.3 L1104.8,273.2 L1105.0,277.4 L1105.2,281.4 L1105.5,284.8 L1105.7,287.2 L1105.9,288.6 L1106.1,288.9 L1106.3,288.2 L1106.5,286.8 L1106.8,284.9 L1107.0,283.0 L1107.2,281.2 L1107.4,279.8 L1107.6,278.9 L1107.8,278.4 L1108.1,278.2 L1108.3,277.9 L1108.5,277.3 L1108.7,276.2 L1108.9,274.7 L1109.1,272.7 L1109.4,270.6 L1109.6,268.5 L1109.8,266.8 L1110.0,265.9 L1110.2,265.8 L1110.4,266.7 L1110.7,268.6 L1110.9,271.3 L1111.1,274.7 L1111.3,278.4 L1111.5,281.9 L1111.7,285.0 L1112.0,287.3 L1112.2,288.5 L1112.4,288.5 L1112.6,287.2 L1112.8,284.8 L1113.0,281.4 L1113.3,277.5 L1113.5,273.4 L1113.7,269.6 L1113.9,266.3 L1114.1,264.0 L1114.3,262.9 L1114.6,263.1 L1114.8,264.6 L1115.0,267.3 L1115.2,270.8 L1115.4,275.0 L1115.6,279.3 L1115.9,283.5 L1116.1,287.0 L1116.3,289.7 L1116.5,291.1 L1116.7,291.3 L1116.9,290.2 L1117.2,287.9 L1117.4,284.5 L1117.6,280.5 L1117.8,276.2 L1118.0,271.9 L1118.2,268.2 L1118.5,265.2 L1118.7,263.4 L1118.9,262.9 L1119.1,263.7 L1119.3,265.8 L1119.5,268.9 L1119.8,272.9 L1120.0,277.2 L1120.2,281.5 L1120.4,285.3 L1120.6,288.4 L1120.8,290.4 L1121.1,290.6 L1121.3,290.4 L1121.5,288.4 L1121.7,285.3 L1121.9,281.4 L1122.1,277.0 L1122.4,272.6 L1122.6,268.6 L1122.8,265.4 L1123.0,263.3 L1123.2,263.2 L1123.4,263.3 L1123.7,264.8 L1123.9,267.7 L1124.1,271.5 L1124.3,275.8 L1124.5,280.0 L1124.7,284.0 L1125.0,287.2 L1125.2,289.3 L1125.4,290.2 L1125.6,289.9 L1125.8,288.3 L1126.0,285.7 L1126.3,282.3 L1126.5,278.4 L1126.7,274.5 L1126.9,270.9 L1127.1,268.1 L1127.3,266.1 L1127.6,265.3 L1127.8,265.6 L1128.0,267.0 L1128.2,269.3 L1128.4,272.1 L1128.6,275.2 L1128.9,278.1 L1129.1,280.6 L1129.3,282.4 L1129.5,283.3 L1129.7,283.2 L1129.9,282.2 L1130.2,280.5 L1130.4,278.3 L1130.6,276.1 L1130.8,274.2 L1131.0,273.0 L1131.2,272.8 L1131.5,273.5 L1131.7,275.1 L1131.9,277.2 L1132.1,279.5 L1132.3,281.7 L1132.5,283.3 L1132.8,284.3 L1133.0,284.3 L1133.2,283.5 L1133.4,281.7 L1133.6,279.3 L1133.8,276.5 L1134.1,273.6 L1134.3,270.9 L1134.5,268.7 L1134.7,267.2 L1134.9,266.7 L1135.1,267.1 L1135.4,268.4 L1135.6,270.6 L1135.8,273.3 L1136.0,276.4 L1136.2,279.4 L1136.4,282.3 L1136.7,284.5 L1136.9,285.9 L1137.1,285.9 L1137.3,285.8 L1137.5,285.1 L1137.7,283.2 L1138.0,280.7 L1138.2,277.7 L1138.4,274.7 L1138.6,271.8 L1138.8,269.4 L1139.0,267.6 L1139.3,267.3 L1139.5,267.2 L1139.7,267.4 L1139.9,269.1 L1140.1,271.5 L1140.3,274.4 L1140.6,277.5 L1140.8,280.4 L1141.0,283.1 L1141.2,285.2 L1141.4,286.5 L1141.6,286.9 L1141.8,286.5 L1142.1,285.2 L1142.3,283.2 L1142.5,280.7 L1142.7,278.0 L1142.9,275.2 L1143.1,272.8 L1143.4,270.9 L1143.6,269.7 L1143.8,269.3 L1144.0,269.8 L1144.2,271.0 L1144.4,272.8 L1144.7,275.0 L1144.9,277.4 L1145.1,279.6 L1145.3,281.5 L1145.5,282.7 L1145.7,283.1 L1146.0,282.8 L1146.2,281.6 L1146.4,279.8 L1146.6,277.5 L1146.8,275.1 L1147.0,272.8 L1147.3,270.9 L1147.5,269.6 L1147.7,269.2 L1147.9,269.6 L1148.1,270.9 L1148.3,272.9 L1148.6,275.3 L1148.8,277.8 L1149.0,280.2 L1149.2,282.1 L1149.4,283.3 L1149.6,283.7 L1149.9,283.2 L1150.1,281.8 L1150.3,279.8 L1150.5,277.3 L1150.7,274.8 L1150.9,272.5 L1151.2,270.7 L1151.4,269.7 L1151.6,269.5 L1151.8,270.4 L1152.0,272.1 L1152.2,274.5 L1152.5,277.2 L1152.7,280.0 L1152.9,282.5 L1153.1,284.4 L1153.3,285.4 L1153.5,285.5 L1153.8,284.5 L1154.0,282.6 L1154.2,280.0 L1154.4,276.9 L1154.6,273.6 L1154.8,270.6 L1155.1,268.1 L1155.3,266.5 L1155.5,265.8 L1155.7,266.2 L1155.9,267.7 L1156.1,270.0 L1156.4,273.1 L1156.6,276.5 L1156.8,280.0 L1157.0,283.2 L1157.2,285.8 L1157.4,287.5 L1157.7,287.7 L1157.9,287.9 L1158.1,286.8 L1158.3,284.7 L1158.5,281.8 L1158.7,278.6 L1159.0,275.3 L1159.2,272.2 L1159.4,269.7 L1159.6,268.0 L1159.8,267.9 L1160.0,267.8 L1160.3,268.6 L1160.5,270.6 L1160.7,273.3 L1160.9,276.3 L1161.1,279.3 L1161.3,282.2 L1161.6,284.4 L1161.8,285.9 L1162.0,286.5 L1162.2,286.2 L1162.4,284.9 L1162.6,282.9 L1162.9,280.4 L1163.1,277.5 L1163.3,274.6 L1163.5,272.0 L1163.7,270.0 L1163.9,268.6 L1164.2,268.0 L1164.4,268.3 L1164.6,269.3 L1164.8,270.8 L1165.0,272.7 L1165.2,274.7 L1165.5,276.4 L1165.7,277.7 L1165.9,278.4 L1166.1,278.4 L1166.3,277.7 L1166.5,276.5 L1166.8,275.1 L1167.0,273.8 L1167.2,273.0 L1167.4,272.8 L1167.6,273.3 L1167.8,274.4 L1168.1,276.1 L1168.3,278.2 L1168.5,280.4 L1168.7,282.4 L1168.9,284.1 L1169.1,285.2 L1169.4,285.6 L1169.6,285.2 L1169.8,284.1 L1170.0,282.3 L1170.2,279.9 L1170.4,277.4 L1170.7,274.8 L1170.9,272.4 L1171.1,270.6 L1171.3,269.4 L1171.5,269.0 L1171.7,269.4 L1172.0,270.6 L1172.2,272.5 L1172.4,274.8 L1172.6,277.4 L1172.8,280.1 L1173.0,282.4 L1173.3,284.4 L1173.5,285.3 L1173.7,285.1 L1173.9,284.9 L1174.1,284.2 L1174.3,282.2 L1174.6,279.7 L1174.8,276.7 L1175.0,273.8 L1175.2,270.9 L1175.4,268.6 L1175.6,266.8 L1175.9,266.5 L1176.1,266.4 L1176.3,266.5 L1176.5,267.8 L1176.7,269.8 L1176.9,272.3 L1177.2,274.9 L1177.4,277.6 L1177.6,280.0 L1177.8,282.0 L1178.0,283.5 L1178.2,284.2 L1178.5,284.5 L1178.7,284.0 L1178.9,282.8 L1179.1,281.3 L1179.3,279.4 L1179.5,277.4 L1179.8,275.4 L1180.0,273.7 L1180.2,272.6 L1180.4,272.1" stroke="#D95319" stroke-width="1"/>
<path d="M520.5,276.4 L520.7,276.5 L520.9,276.8 L521.1,277.2 L521.4,277.4 L521.6,277.6 L521.8,277.6 L522.0,277.5 L522.2,277.3 L522.4,277.0 L522.7,276.6 L522.9,276.3 L523.1,275.9 L523.3,275.7 L523.5,275.5 L523.7,275.5 L524.0,275.5 L524.2,275.7 L524.4,275.9 L524.6,276.3 L524.8,276.7 L525.0,277.1 L525.3,277.4 L525.5,277.8 L525.7,278.0 L525.9,278.1 L526.1,278.1 L526.3,278.1 L526.6,277.8 L526.8,277.6 L527.0,277.2 L527.2,276.8 L527.4,276.5 L527.6,276.1 L527.9,275.9 L528.1,275.7 L528.3,275.6 L528.5,275.6 L528.7,275.8 L528.9,276.0 L529.2,276.2 L529.4,276.5 L529.6,276.8 L529.8,277.0 L530.0,277.2 L530.2,277.3 L530.5,277.3 L530.7,277.2 L530.9,277.1 L531.1,276.9 L531.3,276.7 L531.5,276.5 L531.8,276.4 L532.0,276.4 L532.2,276.5 L532.4,276.7 L532.6,276.9 L532.8,277.1 L533.1,277.4 L533.3,277.5 L533.5,277.7 L533.7,277.7 L533.9,277.6 L534.1,277.5 L534.4,277.3 L534.6,277.0 L534.8,276.7 L535.0,276.3 L535.2,276.0 L535.4,275.7 L535.7,275.5 L535.9,275.5 L536.1,275.5 L536.3,275.6 L536.5,275.8 L536.7,276.1 L537.0,276.4 L537.2,276.8 L537.4,277.2 L537.6,277.6 L537.8,277.9 L538.0,278.1 L538.3,278.1 L538.5,278.1 L538.7,278.1 L538.9,277.9 L539.1,277.6 L539.3,277.2 L539.6,276.8 L539.8,276.4 L540.0,276.1 L540.2,275.8 L540.4,275.5 L540.6,275.5 L540.9,275.5 L541.1,275.5 L541.3,275.6 L541.5,275.8 L541.7,276.1 L541.9,276.5 L542.2,276.8 L542.4,277.2 L542.6,277.5 L542.8,277.7 L543.0,277.9 L543.2,278.0 L543.5,278.0 L543.7,277.9 L543.9,277.7 L544.1,277.5 L544.3,277.3 L544.5,277.0 L544.8,276.7 L545.0,276.4 L545.2,276.1 L545.4,275.8 L545.6,275.6 L545.8,275.4 L546.1,275.3 L546.3,275.3 L546.5,275.4 L546.7,275.5 L546.9,275.5 L547.1,275.6 L547.4,275.7 L547.6,275.8 L547.8,275.8 L548.0,276.0 L548.2,276.2 L548.4,276.4 L548.7,276.8 L548.9,277.3 L549.1,277.9 L549.3,278.6 L549.5,279.2 L549.7,279.8 L550.0,280.2 L550.2,280.4 L550.4,280.4 L550.6,280.2 L550.8,279.5 L551.0,278.6 L551.3,277.6 L551.5,276.6 L551.7,275.5 L551.9,274.6 L552.1,273.9 L552.3,273.4 L552.6,273.1 L552.8,273.1 L553.0,273.4 L553.2,273.9 L553.4,274.5 L553.6,275.3 L553.9,276.1 L554.1,276.9 L554.3,277.7 L554.5,278.3 L554.7,278.8 L554.9,279.1 L555.2,279.2 L555.4,279.2 L555.6,279.0 L555.8,278.7 L556.0,278.3 L556.2,277.9 L556.5,277.4 L556.7,276.9 L556.9,276.4 L557.1,276.1 L557.3,275.7 L557.5,275.5 L557.8,275.4 L558.0,275.4 L558.2,275.5 L558.4,275.6 L558.6,275.8 L558.8,276.0 L559.1,276.3 L559.3,276.7 L559.5,277.0 L559.7,277.3 L559.9,277.6 L560.1,277.9 L560.3,278.0 L560.6,278.0 L560.8,278.0 L561.0,277.8 L561.2,277.5 L561.4,277.2 L561.6,276.9 L561.9,276.5 L562.1,276.1 L562.3,275.9 L562.5,275.7 L562.7,275.6 L562.9,275.6 L563.2,275.7 L563.4,275.9 L563.6,276.2 L563.8,276.6 L564.0,277.0 L564.2,277.3 L564.5,277.6 L564.7,277.8 L564.9,277.9 L565.1,277.9 L565.3,277.7 L565.5,277.5 L565.8,277.2 L566.0,276.8 L566.2,276.5 L566.4,276.1 L566.6,275.9 L566.8,275.7 L567.1,275.6 L567.3,275.7 L567.5,275.9 L567.7,276.1 L567.9,276.4 L568.1,276.7 L568.4,277.1 L568.6,277.4 L568.8,277.6 L569.0,277.8 L569.2,277.9 L569.4,277.9 L569.7,277.7 L569.9,277.6 L570.1,277.3 L570.3,277.0 L570.5,276.7 L570.7,276.4 L571.0,276.1 L571.2,275.9 L571.4,275.8 L571.6,275.7 L571.8,275.7 L572.0,275.7 L572.3,275.9 L572.5,276.1 L572.7,276.3 L572.9,276.6 L573.1,276.8 L573.3,277.1 L573.6,277.4 L573.8,277.6 L574.0,277.7 L574.2,277.8 L574.4,277.8 L574.6,277.8 L574.9,277.6 L575.1,277.4 L575.3,277.2 L575.5,276.9 L575.7,276.7 L575.9,276.4 L576.2,276.1 L576.4,276.0 L576.6,275.8 L576.8,275.8 L577.0,275.8 L577.2,275.9 L577.5,276.1 L577.7,276.3 L577.9,276.5 L578.1,276.8 L578.3,277.1 L578.5,277.3 L578.8,277.5 L579.0,277.6 L579.2,277.6 L579.4,277.6 L579.6,277.5 L579.8,277.3 L580.1,277.1 L580.3,276.8 L580.5,276.6 L580.7,276.3 L580.9,276.1 L581.1,276.0 L581.4,275.9 L581.6,275.9 L581.8,276.0 L582.0,276.1 L582.2,276.3 L582.4,276.5 L582.7,276.8 L582.9,277.0 L583.1,277.3 L583.3,277.5 L583.5,277.6 L583.7,277.7 L584.0,277.7 L584.2,277.7 L584.4,277.5 L584.6,277.3 L584.8,277.1 L585.0,276.8 L585.3,276.5 L585.5,276.3 L585.7,276.0 L585.9,275.8 L586.1,275.7 L586.3,275.6 L586.6,275.7 L586.8,275.8 L587.0,276.0 L587.2,276.3 L587.4,276.6 L587.6,277.0 L587.9,277.3 L588.1,277.6 L588.3,277.8 L588.5,278.0 L588.7,278.0 L588.9,278.0 L589.2,277.8 L589.4,277.6 L589.6,277.2 L589.8,276.9 L590.0,276.5 L590.2,276.1 L590.5,275.8 L590.7,275.6 L590.9,275.5 L591.1,275.4 L591.3,275.5 L591.5,275.7 L591.8,276.0 L592.0,276.4 L592.2,276.8 L592.4,277.1 L592.6,277.5 L592.8,277.8 L593.1,278.0 L593.3,278.1 L593.5,278.0 L593.7,277.9 L593.9,277.6 L594.1,277.3 L594.4,276.9 L594.6,276.6 L594.8,276.2 L595.0,275.9 L595.2,275.6 L595.4,275.5 L595.7,275.5 L595.9,275.6 L596.1,275.8 L596.3,276.1 L596.5,276.5 L596.7,276.8 L597.0,277.2 L597.2,277.6 L597.4,277.8 L597.6,278.0 L597.8,278.1 L598.0,278.0 L598.2,277.8 L598.5,277.5 L598.7,277.2 L598.9,276.8 L599.1,276.4 L599.3,276.0 L599.5,275.7 L599.8,275.5 L600.0,275.4 L600.2,275.5 L600.4,275.6 L600.6,275.9 L600.8,276.2 L601.1,276.6 L601.3,277.0 L601.5,277.4 L601.7,277.7 L601.9,278.0 L602.1,278.1 L602.4,278.1 L602.6,278.0 L602.8,277.8 L603.0,277.5 L603.2,277.1 L603.4,276.7 L603.7,276.3 L603.9,276.0 L604.1,275.7 L604.3,275.5 L604.5,275.4 L604.7,275.4 L605.0,275.5 L605.2,275.7 L605.4,276.1 L605.6,276.4 L605.8,276.9 L606.0,277.3 L606.3,277.6 L606.5,277.9 L606.7,278.1 L606.9,278.2 L607.1,278.1 L607.3,278.0 L607.6,277.7 L607.8,277.4 L608.0,277.0 L608.2,276.6 L608.4,276.2 L608.6,275.8 L608.9,275.5 L609.1,275.4 L609.3,275.3 L609.5,275.4 L609.7,275.6 L609.9,275.9 L610.2,276.3 L610.4,276.7 L610.6,277.1 L610.8,277.5 L611.0,277.8 L611.2,278.1 L611.5,278.2 L611.7,278.2 L611.9,278.1 L612.1,277.8 L612.3,277.5 L612.5,277.1 L612.8,276.7 L613.0,276.3 L613.2,275.9 L613.4,275.6 L613.6,275.4 L613.8,275.4 L614.1,275.4 L614.3,275.6 L614.5,275.8 L614.7,276.2 L614.9,276.5 L615.1,277.0 L615.4,277.3 L615.6,277.7 L615.8,277.9 L616.0,278.1 L616.2,278.1 L616.4,278.0 L616.7,277.9 L616.9,277.6 L617.1,277.3 L617.3,276.9 L617.5,276.5 L617.7,276.2 L618.0,275.9 L618.2,275.7 L618.4,275.6 L618.6,275.6 L618.8,275.7 L619.0,275.8 L619.3,276.1 L619.5,276.3 L619.7,276.6 L619.9,276.9 L620.1,277.2 L620.3,277.3 L620.6,277.5 L620.8,277.5 L621.0,277.5 L621.2,277.4 L621.4,277.3 L621.6,277.1 L621.9,276.9 L622.1,276.8 L622.3,276.8 L622.5,276.7 L622.7,276.8 L622.9,276.9 L623.2,277.0 L623.4,277.1 L623.6,277.2 L623.8,277.3 L624.0,277.2 L624.2,277.1 L624.5,277.0 L624.7,276.8 L624.9,276.5 L625.1,276.3 L625.3,276.1 L625.5,275.9 L625.8,275.7 L626.0,275.7 L626.2,275.7 L626.4,275.8 L626.6,276.0 L626.8,276.3 L627.1,276.6 L627.3,276.9 L627.5,277.2 L627.7,277.5 L627.9,277.8 L628.1,278.0 L628.4,278.1 L628.6,278.1 L628.8,278.0 L629.0,277.8 L629.2,277.6 L629.4,277.2 L629.7,276.8 L629.9,276.4 L630.1,275.9 L630.3,275.5 L630.5,275.1 L630.7,274.9 L631.0,274.9 L631.2,274.8 L631.4,275.0 L631.6,275.3 L631.8,275.8 L632.0,276.3 L632.3,276.9 L632.5,277.5 L632.7,278.1 L632.9,278.6 L633.1,279.0 L633.3,279.2 L633.6,279.3 L633.8,279.2 L634.0,278.9 L634.2,278.5 L634.4,277.9 L634.6,277.2 L634.9,276.5 L635.1,275.7 L635.3,275.1 L635.5,274.7 L635.7,274.4 L635.9,274.2 L636.2,274.3 L636.4,274.5 L636.6,274.8 L636.8,275.3 L637.0,275.8 L637.2,276.4 L637.4,276.9 L637.7,277.4 L637.9,277.9 L638.1,278.2 L638.3,278.4 L638.5,278.5 L638.7,278.5 L639.0,278.3 L639.2,278.1 L639.4,277.8 L639.6,277.5 L639.8,277.1 L640.0,276.7 L640.3,276.4 L640.5,276.1 L640.7,275.8 L640.9,275.7 L641.1,275.6 L641.3,275.7 L641.6,275.8 L641.8,275.9 L642.0,276.1 L642.2,276.4 L642.4,276.7 L642.6,277.0 L642.9,277.3 L643.1,277.5 L643.3,277.7 L643.5,277.7 L643.7,277.7 L643.9,277.6 L644.2,277.3 L644.4,277.1 L644.6,276.7 L644.8,276.4 L645.0,276.2 L645.2,276.0 L645.5,275.9 L645.7,275.9 L645.9,276.0 L646.1,276.3 L646.3,276.6 L646.5,276.9 L646.8,277.3 L647.0,277.5 L647.2,277.7 L647.4,277.8 L647.6,277.8 L647.8,277.6 L648.1,277.3 L648.3,277.0 L648.5,276.6 L648.7,276.2 L648.9,275.9 L649.1,275.6 L649.4,275.5 L649.6,275.5 L649.8,275.6 L650.0,275.8 L650.2,276.1 L650.4,276.5 L650.7,276.9 L650.9,277.3 L651.1,277.6 L651.3,277.9 L651.5,278.1 L651.7,278.2 L652.0,278.1 L652.2,278.0 L652.4,277.7 L652.6,277.3 L652.8,276.9 L653.0,276.5 L653.3,276.1 L653.5,275.8 L653.7,275.5 L653.9,275.4 L654.1,275.3 L654.3,275.4 L654.6,275.6 L654.8,275.8 L655.0,276.1 L655.2,276.5 L655.4,277.0 L655.6,277.5 L655.9,277.9 L656.1,278.2 L656.3,278.5 L656.5,278.6 L656.7,278.6 L656.9,278.4 L657.2,278.1 L657.4,277.7 L657.6,277.2 L657.8,276.6 L658.0,276.0 L658.2,275.4 L658.5,274.9 L658.7,274.6 L658.9,274.4 L659.1,274.4 L659.3,274.6 L659.5,275.0 L659.8,275.5 L660.0,276.2 L660.2,277.0 L660.4,277.8 L660.6,278.6 L660.8,279.2 L661.1,279.6 L661.3,279.8 L661.5,279.6 L661.7,279.2 L661.9,278.6 L662.1,277.9 L662.4,277.0 L662.6,276.1 L662.8,275.3 L663.0,274.7 L663.2,274.2 L663.4,274.0 L663.7,274.0 L663.9,274.3 L664.1,274.8 L664.3,275.4 L664.5,276.2 L664.7,277.0 L665.0,277.8 L665.2,278.4 L665.4,278.9 L665.6,279.2 L665.8,279.3 L666.0,279.1 L666.3,278.8 L666.5,278.2 L666.7,277.6 L666.9,276.9 L667.1,276.2 L667.3,275.5 L667.6,275.1 L667.8,274.7 L668.0,274.6 L668.2,274.7 L668.4,274.9 L668.6,275.3 L668.9,275.8 L669.1,276.4 L669.3,277.0 L669.5,277.5 L669.7,277.9 L669.9,278.3 L670.2,278.6 L670.4,278.7 L670.6,278.7 L670.8,278.4 L671.0,278.0 L671.2,277.5 L671.5,276.9 L671.7,276.2 L671.9,275.6 L672.1,275.0 L672.3,274.6 L672.5,274.4 L672.8,274.4 L673.0,274.7 L673.2,275.1 L673.4,275.7 L673.6,276.5 L673.8,277.2 L674.1,278.0 L674.3,278.6 L674.5,279.0 L674.7,279.1 L674.9,279.0 L675.1,278.7 L675.4,278.1 L675.6,277.3 L675.8,276.4 L676.0,275.6 L676.2,274.9 L676.4,274.4 L676.6,274.2 L676.9,274.3 L677.1,274.7 L677.3,275.4 L677.5,276.4 L677.7,277.4 L677.9,278.5 L678.2,279.4 L678.4,280.1 L678.6,280.4 L678.8,280.4 L679.0,280.0 L679.2,279.3 L679.5,278.2 L679.7,276.9 L679.9,275.5 L680.1,274.1 L680.3,272.9 L680.5,272.0 L680.8,271.5 L681.0,271.5 L681.2,272.0 L681.4,272.9 L681.6,274.3 L681.8,275.9 L682.1,277.7 L682.3,279.5 L682.5,281.1 L682.7,282.4 L682.9,283.1 L683.1,283.3 L683.4,282.9 L683.6,282.0 L683.8,280.7 L684.0,279.0 L684.2,277.1 L684.4,275.2 L684.7,273.5 L684.9,272.1 L685.1,271.0 L685.3,270.5 L685.5,270.5 L685.7,270.9 L686.0,271.9 L686.2,273.2 L686.4,274.8 L686.6,276.6 L686.8,278.4 L687.0,279.9 L687.3,281.2 L687.5,282.2 L687.7,282.6 L687.9,282.6 L688.1,282.1 L688.3,281.3 L688.6,280.0 L688.8,278.6 L689.0,277.0 L689.2,275.5 L689.4,274.1 L689.6,272.9 L689.9,272.1 L690.1,271.7 L690.3,271.6 L690.5,272.0 L690.7,272.6 L690.9,273.6 L691.2,274.8 L691.4,276.1 L691.6,277.3 L691.8,278.5 L692.0,279.5 L692.2,280.2 L692.5,280.7 L692.7,280.9 L692.9,280.8 L693.1,280.5 L693.3,279.9 L693.5,279.2 L693.8,278.4 L694.0,277.5 L694.2,276.6 L694.4,275.8 L694.6,275.0 L694.8,274.4 L695.1,274.0 L695.3,273.7 L695.5,273.5 L695.7,273.6 L695.9,273.7 L696.1,274.1 L696.4,274.6 L696.6,275.2 L696.8,275.9 L697.0,276.7 L697.2,277.5 L697.4,278.2 L697.7,278.9 L697.9,279.4 L698.1,279.8 L698.3,280.0 L698.5,279.9 L698.7,279.6 L699.0,279.1 L699.2,278.4 L699.4,277.6 L699.6,276.8 L699.8,275.9 L700.0,275.2 L700.3,274.5 L700.5,274.1 L700.7,273.9 L700.9,273.9 L701.1,274.2 L701.3,274.7 L701.6,275.4 L701.8,276.1 L702.0,276.9 L702.2,277.6 L702.4,278.3 L702.6,278.7 L702.9,279.0 L703.1,279.0 L703.3,278.8 L703.5,278.5 L703.7,278.0 L703.9,277.3 L704.2,276.7 L704.4,276.1 L704.6,275.6 L704.8,275.3 L705.0,275.1 L705.2,275.1 L705.5,275.3 L705.7,275.7 L705.9,276.2 L706.1,276.8 L706.3,277.4 L706.5,278.0 L706.8,278.4 L707.0,278.6 L707.2,278.7 L707.4,278.5 L707.6,278.1 L707.8,277.6 L708.1,277.0 L708.3,276.3 L708.5,275.7 L708.7,275.2 L708.9,274.8 L709.1,274.6 L709.4,274.7 L709.6,274.9 L709.8,275.4 L710.0,276.0 L710.2,276.7 L710.4,277.4 L710.7,278.2 L710.9,278.8 L711.1,279.2 L711.3,279.5 L711.5,279.5 L711.7,279.3 L712.0,278.9 L712.2,278.3 L712.4,277.6 L712.6,276.7 L712.8,275.9 L713.0,275.2 L713.3,274.6 L713.5,274.2 L713.7,274.2 L713.9,274.2 L714.1,274.4 L714.3,275.0 L714.6,275.7 L714.8,276.5 L715.0,277.4 L715.2,278.2 L715.4,279.0 L715.6,279.6 L715.8,279.8 L716.1,279.8 L716.3,279.8 L716.5,279.5 L716.7,278.9 L716.9,278.2 L717.1,277.3 L717.4,276.5 L717.6,275.7 L717.8,275.0 L718.0,274.5 L718.2,274.3 L718.4,274.2 L718.7,274.4 L718.9,274.9 L719.1,275.5 L719.3,276.2 L719.5,277.0 L719.7,277.7 L720.0,278.4 L720.2,279.0 L720.4,279.4 L720.6,279.6 L720.8,279.6 L721.0,279.4 L721.3,279.1 L721.5,278.6 L721.7,278.1 L721.9,277.6 L722.1,277.1 L722.3,276.6 L722.6,276.3 L722.8,276.1 L723.0,276.0 L723.2,275.9 L723.4,276.0 L723.6,276.0 L723.9,276.1 L724.1,276.1 L724.3,276.2 L724.5,276.3 L724.7,276.3 L724.9,276.5 L725.2,276.7 L725.4,277.0 L725.6,277.4 L725.8,277.9 L726.0,278.4 L726.2,278.9 L726.5,279.3 L726.7,279.6 L726.9,279.8 L727.1,279.7 L727.3,279.4 L727.5,278.9 L727.8,278.3 L728.0,277.5 L728.2,276.6 L728.4,275.8 L728.6,275.1 L728.8,274.7 L729.1,274.5 L729.3,274.6 L729.5,275.1 L729.7,275.8 L729.9,276.8 L730.1,277.8 L730.4,278.8 L730.6,279.8 L730.8,280.5 L731.0,280.9 L731.2,281.0 L731.4,280.8 L731.7,280.2 L731.9,279.3 L732.1,278.3 L732.3,277.2 L732.5,276.1 L732.7,275.2 L733.0,274.5 L733.2,274.2 L733.4,274.1 L733.6,274.3 L733.8,274.9 L734.0,275.8 L734.3,276.7 L734.5,277.8 L734.7,278.8 L734.9,279.7 L735.1,280.5 L735.3,280.9 L735.6,281.1 L735.8,281.0 L736.0,280.7 L736.2,280.1 L736.4,279.4 L736.6,278.6 L736.9,277.8 L737.1,277.0 L737.3,276.2 L737.5,275.5 L737.7,275.0 L737.9,274.7 L738.2,274.5 L738.4,274.6 L738.6,274.7 L738.8,275.1 L739.0,275.5 L739.2,276.1 L739.5,276.7 L739.7,277.4 L739.9,278.1 L740.1,278.7 L740.3,279.4 L740.5,279.9 L740.8,280.4 L741.0,280.7 L741.2,280.9 L741.4,281.0 L741.6,280.9 L741.8,280.7 L742.1,280.4 L742.3,279.9 L742.5,279.2 L742.7,278.5 L742.9,277.7 L743.1,276.9 L743.4,276.0 L743.6,275.2 L743.8,274.4 L744.0,273.7 L744.2,273.2 L744.4,272.9 L744.7,272.8 L744.9,273.0 L745.1,273.4 L745.3,274.2 L745.5,275.3 L745.7,276.5 L746.0,278.0 L746.2,279.5 L746.4,281.0 L746.6,282.3 L746.8,283.4 L747.0,284.1 L747.3,284.4 L747.5,284.2 L747.7,283.4 L747.9,282.1 L748.1,280.3 L748.3,278.3 L748.6,276.2 L748.8,274.2 L749.0,272.4 L749.2,270.9 L749.4,270.0 L749.6,269.9 L749.9,269.9 L750.1,270.8 L750.3,272.2 L750.5,274.1 L750.7,276.3 L750.9,278.6 L751.2,280.7 L751.4,282.6 L751.6,284.0 L751.8,284.3 L752.0,284.2 L752.2,284.2 L752.5,283.1 L752.7,281.3 L752.9,279.2 L753.1,277.0 L753.3,274.8 L753.5,272.9 L753.7,271.4 L754.0,270.5 L754.2,270.6 L754.4,270.6 L754.6,271.6 L754.8,273.1 L755.0,275.0 L755.3,277.1 L755.5,279.1 L755.7,280.8 L755.9,282.0 L756.1,282.8 L756.3,282.8 L756.6,282.3 L756.8,281.2 L757.0,279.7 L757.2,278.0 L757.4,276.2 L757.6,274.7 L757.9,273.5 L758.1,272.8 L758.3,272.7 L758.5,273.2 L758.7,274.1 L758.9,275.4 L759.2,277.0 L759.4,278.4 L759.6,279.7 L759.8,280.5 L760.0,280.8 L760.2,280.5 L760.5,279.6 L760.7,278.4 L760.9,276.9 L761.1,275.3 L761.3,274.0 L761.5,273.0 L761.8,272.5 L762.0,272.6 L762.2,273.1 L762.4,274.2 L762.6,275.6 L762.8,277.1 L763.1,278.7 L763.3,280.1 L763.5,281.1 L763.7,281.6 L763.9,281.6 L764.1,281.1 L764.4,280.1 L764.6,278.7 L764.8,277.2 L765.0,275.7 L765.2,274.4 L765.4,273.4 L765.7,272.9 L765.9,272.9 L766.1,273.3 L766.3,274.3 L766.5,275.5 L766.7,276.8 L767.0,278.1 L767.2,279.1 L767.4,279.7 L767.6,279.8 L767.8,279.4 L768.0,278.6 L768.3,277.5 L768.5,276.2 L768.7,275.0 L768.9,274.0 L769.1,273.4 L769.3,273.2 L769.6,273.5 L769.8,274.3 L770.0,275.4 L770.2,276.7 L770.4,278.1 L770.6,279.4 L770.9,280.5 L771.1,281.2 L771.3,281.5 L771.5,281.3 L771.7,280.6 L771.9,279.6 L772.2,278.2 L772.4,276.6 L772.6,275.1 L772.8,273.6 L773.0,272.5 L773.2,271.8 L773.5,271.5 L773.7,271.7 L773.9,272.5 L774.1,273.6 L774.3,275.1 L774.5,276.8 L774.8,278.4 L775.0,280.0 L775.2,281.2 L775.4,282.0 L775.6,282.3 L775.8,282.0 L776.1,281.3 L776.3,280.1 L776.5,278.5 L776.7,276.8 L776.9,275.1 L777.1,273.5 L777.4,272.3 L777.6,271.5 L777.8,271.2 L778.0,271.4 L778.2,272.2 L778.4,273.5 L778.7,275.0 L778.9,276.8 L779.1,278.5 L779.3,280.1 L779.5,281.3 L779.7,282.2 L780.0,282.4 L780.2,282.2 L780.4,281.4 L780.6,280.2 L780.8,278.6 L781.0,276.9 L781.3,275.1 L781.5,273.4 L781.7,272.0 L781.9,271.1 L782.1,270.7 L782.3,270.8 L782.6,271.5 L782.8,272.6 L783.0,274.2 L783.2,276.0 L783.4,277.8 L783.6,279.6 L783.9,281.1 L784.1,282.3 L784.3,283.0 L784.5,283.2 L784.7,282.8 L784.9,281.9 L785.2,280.7 L785.4,279.1 L785.6,277.3 L785.8,275.5 L786.0,273.8 L786.2,272.3 L786.5,271.2 L786.7,270.5 L786.9,270.3 L787.1,270.6 L787.3,271.3 L787.5,272.4 L787.8,273.9 L788.0,275.5 L788.2,277.1 L788.4,278.8 L788.6,280.2 L788.8,281.4 L789.1,282.3 L789.3,282.8 L789.5,282.9 L789.7,282.6 L789.9,282.0 L790.1,281.2 L790.4,280.0 L790.6,278.8 L790.8,277.4 L791.0,275.9 L791.2,274.5 L791.4,273.2 L791.7,272.0 L791.9,271.0 L792.1,270.3 L792.3,270.0 L792.5,270.1 L792.7,270.6 L792.9,271.6 L793.2,273.0 L793.4,274.8 L793.6,276.8 L793.8,278.9 L794.0,281.0 L794.2,282.8 L794.5,284.2 L794.7,285.0 L794.9,285.2 L795.1,284.6 L795.3,283.3 L795.5,281.4 L795.8,279.1 L796.0,276.5 L796.2,273.9 L796.4,271.6 L796.6,269.7 L796.8,268.5 L797.1,268.1 L797.3,268.5 L797.5,269.7 L797.7,271.6 L797.9,273.9 L798.1,276.4 L798.4,278.9 L798.6,281.0 L798.8,282.6 L799.0,283.5 L799.2,283.6 L799.4,283.0 L799.7,281.8 L799.9,280.2 L800.1,278.3 L800.3,276.6 L800.5,275.2 L800.7,274.3 L801.0,274.0 L801.2,274.3 L801.4,275.1 L801.6,276.1 L801.8,277.2 L802.0,277.9 L802.3,278.0 L802.5,277.6 L802.7,276.6 L802.9,275.2 L803.1,273.7 L803.3,272.4 L803.6,271.4 L803.8,271.0 L804.0,271.2 L804.2,272.3 L804.4,274.0 L804.6,276.2 L804.9,278.7 L805.1,281.2 L805.3,283.4 L805.5,285.0 L805.7,285.8 L805.9,285.8 L806.2,284.7 L806.4,282.8 L806.6,280.1 L806.8,277.0 L807.0,273.8 L807.2,270.8 L807.5,268.3 L807.7,266.7 L807.9,266.0 L808.1,266.4 L808.3,267.8 L808.5,270.1 L808.8,273.2 L809.0,276.6 L809.2,280.2 L809.4,283.4 L809.6,286.0 L809.8,287.7 L810.1,288.3 L810.3,287.8 L810.5,286.2 L810.7,283.6 L810.9,280.4 L811.1,276.7 L811.4,273.1 L811.6,269.8 L811.8,267.2 L812.0,265.5 L812.2,265.0 L812.4,265.6 L812.7,267.3 L812.9,270.0 L813.1,273.4 L813.3,277.1 L813.5,280.8 L813.7,284.0 L814.0,286.6 L814.2,288.2 L814.4,288.6 L814.6,287.8 L814.8,285.9 L815.0,283.1 L815.3,279.7 L815.5,275.9 L815.7,272.3 L815.9,269.0 L816.1,266.6 L816.3,265.2 L816.6,264.9 L816.8,265.9 L817.0,267.9 L817.2,270.9 L817.4,274.4 L817.6,278.2 L817.9,281.8 L818.1,285.0 L818.3,287.3 L818.5,288.6 L818.7,288.7 L818.9,287.6 L819.2,285.4 L819.4,282.4 L819.6,278.7 L819.8,274.8 L820.0,271.2 L820.2,268.0 L820.5,265.7 L820.7,264.5 L820.9,264.4 L821.1,265.6 L821.3,267.9 L821.5,271.1 L821.8,274.8 L822.0,278.7 L822.2,282.4 L822.4,285.6 L822.6,288.0 L822.8,289.3 L823.1,289.4 L823.3,288.3 L823.5,286.2 L823.7,283.1 L823.9,279.5 L824.1,275.7 L824.4,272.1 L824.6,268.9 L824.8,266.5 L825.0,265.0 L825.2,264.7 L825.4,265.3 L825.7,267.0 L825.9,269.5 L826.1,272.6 L826.3,275.9 L826.5,279.3 L826.7,282.3 L827.0,284.8 L827.2,286.6 L827.4,287.5 L827.6,287.5 L827.8,286.6 L828.0,285.0 L828.3,282.7 L828.5,280.1 L828.7,277.3 L828.9,274.5 L829.1,272.0 L829.3,269.9 L829.6,268.4 L829.8,267.6 L830.0,267.5 L830.2,268.1 L830.4,269.4 L830.6,271.1 L830.9,273.3 L831.1,275.6 L831.3,278.0 L831.5,280.3 L831.7,282.2 L831.9,283.7 L832.1,284.6 L832.4,285.0 L832.6,284.7 L832.8,283.8 L833.0,282.4 L833.2,280.5 L833.4,278.4 L833.7,276.1 L833.9,273.9 L834.1,272.0 L834.3,270.4 L834.5,269.4 L834.7,269.0 L835.0,269.2 L835.2,270.2 L835.4,271.7 L835.6,273.7 L835.8,275.9 L836.0,278.2 L836.3,280.4 L836.5,282.2 L836.7,283.5 L836.9,284.2 L837.1,284.1 L837.3,283.3 L837.6,281.9 L837.8,280.0 L838.0,277.8 L838.2,275.4 L838.4,273.2 L838.6,271.4 L838.9,270.2 L839.1,269.7 L839.3,269.9 L839.5,270.8 L839.7,272.3 L839.9,274.4 L840.2,276.6 L840.4,278.9 L840.6,280.9 L840.8,282.5 L841.0,283.5 L841.2,283.7 L841.5,283.2 L841.7,281.9 L841.9,280.0 L842.1,277.7 L842.3,275.2 L842.5,272.9 L842.8,270.9 L843.0,269.6 L843.2,269.1 L843.4,269.4 L843.6,270.6 L843.8,272.5 L844.1,275.0 L844.3,277.7 L844.5,280.3 L844.7,282.7 L844.9,284.3 L845.1,285.2 L845.4,285.1 L845.6,284.1 L845.8,282.3 L846.0,279.8 L846.2,276.9 L846.4,274.0 L846.7,271.4 L846.9,269.4 L847.1,268.2 L847.3,268.0 L847.5,268.8 L847.7,270.4 L848.0,272.8 L848.2,275.6 L848.4,278.5 L848.6,281.1 L848.8,283.1 L849.0,284.4 L849.3,284.6 L849.5,283.9 L849.7,282.3 L849.9,280.0 L850.1,277.3 L850.3,274.7 L850.6,272.3 L850.8,270.7 L851.0,270.0 L851.2,270.3 L851.4,271.6 L851.6,273.7 L851.9,276.2 L852.1,278.9 L852.3,281.4 L852.5,283.2 L852.7,284.1 L852.9,284.1 L853.2,283.0 L853.4,281.0 L853.6,278.4 L853.8,275.5 L854.0,272.5 L854.2,269.9 L854.5,267.9 L854.7,266.9 L854.9,266.8 L855.1,267.8 L855.3,269.8 L855.5,272.5 L855.8,275.7 L856.0,279.1 L856.2,282.3 L856.4,285.1 L856.6,287.1 L856.8,288.0 L857.1,288.0 L857.3,287.0 L857.5,284.9 L857.7,282.1 L857.9,278.6 L858.1,274.9 L858.4,271.3 L858.6,268.0 L858.8,265.3 L859.0,264.1 L859.2,263.9 L859.4,263.8 L859.7,264.9 L859.9,267.4 L860.1,270.8 L860.3,274.7 L860.5,278.8 L860.7,282.8 L861.0,286.2 L861.2,288.9 L861.4,289.8 L861.6,289.9 L861.8,290.0 L862.0,288.4 L862.3,285.5 L862.5,281.8 L862.7,277.7 L862.9,273.4 L863.1,269.3 L863.3,265.8 L863.6,263.1 L863.8,261.4 L864.0,260.8 L864.2,261.4 L864.4,263.1 L864.6,265.8 L864.9,269.1 L865.1,272.8 L865.3,276.6 L865.5,280.3 L865.7,283.5 L865.9,286.0 L866.2,287.7 L866.4,288.5 L866.6,288.4 L866.8,287.5 L867.0,286.0 L867.2,283.9 L867.5,281.6 L867.7,279.2 L867.9,277.0 L868.1,275.0 L868.3,273.4 L868.5,272.2 L868.8,271.4 L869.0,271.0 L869.2,270.9 L869.4,270.9 L869.6,271.0 L869.8,271.0 L870.0,270.9 L870.3,270.7 L870.5,270.3 L870.7,269.8 L870.9,269.4 L871.1,269.1 L871.3,269.1 L871.6,269.6 L871.8,270.6 L872.0,272.1 L872.2,274.1 L872.4,276.6 L872.6,279.5 L872.9,282.5 L873.1,285.4 L873.3,288.0 L873.5,290.1 L873.7,291.4 L873.9,291.8 L874.2,291.2 L874.4,289.6 L874.6,286.9 L874.8,283.3 L875.0,279.0 L875.2,274.4 L875.5,269.7 L875.7,265.3 L875.9,261.7 L876.1,259.0 L876.3,258.0 L876.5,258.0 L876.8,259.2 L877.0,262.2 L877.2,266.5 L877.4,271.7 L877.6,277.5 L877.8,283.4 L878.1,289.0 L878.3,293.8 L878.5,297.3 L878.7,297.5 L878.9,297.6 L879.1,297.7 L879.4,295.1 L879.6,290.6 L879.8,285.0 L880.0,278.9 L880.2,272.6 L880.4,266.8 L880.7,261.8 L880.9,258.2 L881.1,256.9 L881.3,256.8 L881.5,256.9 L881.7,259.7 L882.0,263.9 L882.2,268.9 L882.4,274.4 L882.6,280.0 L882.8,285.2 L883.0,289.6 L883.3,293.0 L883.5,295.1 L883.7,296.0 L883.9,295.6 L884.1,294.2 L884.3,291.8 L884.6,288.9 L884.8,285.6 L885.0,282.2 L885.2,278.9 L885.4,275.8 L885.6,272.9 L885.9,270.3 L886.1,268.0 L886.3,265.9 L886.5,264.1 L886.7,262.4 L886.9,261.1 L887.2,260.3 L887.4,260.0 L887.6,260.6 L887.8,262.0 L888.0,264.4 L888.2,267.8 L888.5,272.0 L888.7,276.8 L888.9,282.0 L889.1,287.0 L889.3,291.6 L889.5,295.2 L889.8,297.6 L890.0,298.4 L890.2,297.6 L890.4,295.0 L890.6,290.8 L890.8,285.4 L891.1,279.1 L891.3,272.4 L891.5,265.8 L891.7,259.9 L891.9,255.1 L892.1,251.7 L892.4,250.1 L892.6,250.3 L892.8,252.1 L893.0,255.5 L893.2,260.0 L893.4,265.3 L893.7,270.9 L893.9,276.4 L894.1,281.5 L894.3,285.8 L894.5,289.1 L894.7,291.4 L895.0,292.6 L895.2,292.9 L895.4,292.3 L895.6,291.0 L895.8,289.2 L896.0,287.0 L896.3,284.4 L896.5,281.6 L896.7,278.4 L896.9,275.0 L897.1,271.3 L897.3,267.5 L897.6,263.5 L897.8,259.7 L898.0,256.3 L898.2,253.5 L898.4,251.6 L898.6,250.8 L898.9,251.4 L899.1,253.5 L899.3,257.0 L899.5,261.9 L899.7,267.8 L899.9,274.6 L900.2,281.6 L900.4,288.4 L900.6,294.4 L900.8,299.3 L901.0,302.5 L901.2,303.4 L901.5,303.1 L901.7,300.4 L901.9,295.7 L902.1,289.3 L902.3,281.8 L902.5,273.6 L902.8,265.4 L903.0,257.7 L903.2,251.3 L903.4,246.6 L903.6,245.8 L903.8,245.8 L904.1,246.1 L904.3,250.6 L904.5,257.1 L904.7,265.1 L904.9,274.0 L905.1,283.1 L905.4,291.8 L905.6,299.4 L905.8,305.4 L906.0,309.4 L906.2,311.1 L906.4,310.4 L906.7,307.7 L906.9,303.0 L907.1,296.9 L907.3,289.9 L907.5,282.5 L907.7,275.1 L908.0,268.4 L908.2,262.6 L908.4,258.1 L908.6,254.9 L908.8,253.2 L909.0,253.0 L909.2,254.2 L909.5,256.5 L909.7,259.9 L909.9,264.1 L910.1,268.9 L910.3,274.1 L910.5,279.4 L910.8,284.7 L911.0,289.7 L911.2,294.1 L911.4,297.8 L911.6,300.7 L911.8,302.4 L912.1,303.1 L912.3,302.7 L912.5,301.1 L912.7,298.7 L912.9,295.5 L913.1,291.9 L913.4,288.1 L913.6,284.4 L913.8,280.9 L914.0,277.8 L914.2,275.0 L914.4,272.5 L914.7,270.2 L914.9,267.8 L915.1,265.4 L915.3,262.9 L915.5,260.4 L915.7,258.2 L916.0,256.7 L916.2,256.2 L916.4,257.1 L916.6,259.8 L916.8,264.2 L917.0,270.3 L917.3,277.9 L917.5,286.4 L917.7,295.1 L917.9,303.3 L918.1,310.2 L918.3,315.0 L918.6,317.0 L918.8,315.9 L919.0,312.0 L919.2,304.8 L919.4,294.7 L919.6,282.3 L919.9,268.7 L920.1,254.9 L920.3,242.3 L920.5,232.1 L920.7,228.3 L920.9,227.4 L921.2,226.5 L921.4,231.6 L921.6,242.7 L921.8,257.2 L922.0,273.8 L922.2,291.2 L922.5,307.8 L922.7,322.0 L922.9,330.5 L923.1,331.1 L923.3,331.7 L923.5,332.3 L923.8,322.3 L924.0,307.4 L924.2,289.3 L924.4,269.9 L924.6,251.3 L924.8,235.3 L925.1,223.2 L925.3,216.3 L925.5,216.8 L925.7,217.2 L925.9,223.8 L926.1,235.0 L926.4,248.9 L926.6,264.0 L926.8,278.9 L927.0,292.4 L927.2,303.4 L927.4,311.1 L927.7,315.1 L927.9,315.4 L928.1,312.3 L928.3,306.5 L928.5,298.8 L928.7,290.1 L929.0,281.5 L929.2,273.8 L929.4,267.6 L929.6,263.2 L929.8,260.7 L930.0,259.7 L930.3,259.8 L930.5,260.4 L930.7,260.8 L930.9,260.6 L931.1,259.5 L931.3,257.8 L931.6,255.7 L931.8,253.8 L932.0,252.7 L932.2,252.9 L932.4,254.8 L932.6,258.5 L932.9,263.8 L933.1,270.5 L933.3,278.0 L933.5,285.6 L933.7,292.6 L933.9,298.2 L934.2,301.9 L934.4,303.3 L934.6,302.1 L934.8,298.6 L935.0,293.0 L935.2,285.8 L935.5,277.8 L935.7,269.7 L935.9,262.3 L936.1,256.3 L936.3,252.1 L936.5,251.5 L936.8,252.3 L937.0,253.2 L937.2,257.6 L937.4,263.4 L937.6,269.9 L937.8,276.6 L938.1,282.8 L938.3,287.9 L938.5,292.3 L938.7,295.0 L938.9,295.3 L939.1,295.5 L939.4,294.2 L939.6,290.5 L939.8,285.6 L940.0,280.0 L940.2,274.1 L940.4,268.6 L940.7,263.9 L940.9,260.5 L941.1,258.7 L941.3,258.5 L941.5,260.0 L941.7,263.0 L942.0,267.2 L942.2,272.0 L942.4,277.2 L942.6,282.1 L942.8,286.3 L943.0,289.5 L943.3,291.5 L943.5,292.2 L943.7,291.7 L943.9,290.1 L944.1,287.9 L944.3,285.3 L944.6,282.8 L944.8,280.7 L945.0,279.1 L945.2,278.2 L945.4,277.9 L945.6,277.9 L945.9,278.1 L946.1,277.9 L946.3,277.2 L946.5,275.9 L946.7,273.9 L946.9,271.4 L947.2,268.6 L947.4,265.9 L947.6,263.8 L947.8,262.7 L948.0,262.9 L948.2,264.8 L948.4,268.3 L948.7,273.3 L948.9,279.5 L949.1,286.3 L949.3,293.0 L949.5,299.1 L949.7,303.7 L950.0,306.2 L950.2,306.2 L950.4,303.4 L950.6,298.0 L950.8,290.3 L951.0,280.9 L951.3,270.5 L951.5,260.3 L951.7,251.2 L951.9,244.2 L952.1,240.2 L952.3,239.6 L952.6,242.4 L952.8,248.9 L953.0,258.5 L953.2,270.3 L953.4,283.2 L953.6,296.1 L953.9,307.5 L954.1,316.5 L954.3,320.8 L954.5,321.3 L954.7,320.2 L954.9,312.9 L955.2,302.0 L955.4,288.5 L955.6,273.6 L955.8,258.7 L956.0,245.3 L956.2,234.8 L956.5,228.1 L956.7,227.2 L956.9,228.9 L957.1,236.5 L957.3,248.1 L957.5,262.6 L957.8,278.6 L958.0,294.7 L958.2,309.2 L958.4,320.7 L958.6,328.1 L958.8,330.5 L959.1,327.8 L959.3,320.1 L959.5,308.2 L959.7,293.2 L959.9,276.6 L960.1,259.9 L960.4,244.8 L960.6,232.7 L960.8,224.9 L961.0,222.2 L961.2,224.7 L961.4,232.4 L961.7,244.5 L961.9,259.8 L962.1,276.8 L962.3,293.9 L962.5,309.1 L962.7,321.1 L963.0,328.7 L963.2,331.3 L963.4,328.6 L963.6,320.9 L963.8,309.0 L964.0,294.1 L964.3,277.6 L964.5,261.0 L964.7,245.9 L964.9,233.7 L965.1,225.5 L965.3,222.0 L965.6,223.6 L965.8,230.0 L966.0,240.7 L966.2,254.7 L966.4,270.7 L966.6,287.3 L966.9,303.1 L967.1,316.6 L967.3,326.8 L967.5,332.7 L967.7,333.8 L967.9,330.1 L968.2,321.8 L968.4,309.7 L968.6,294.8 L968.8,278.2 L969.0,261.3 L969.2,245.6 L969.5,232.3 L969.7,222.5 L969.9,217.0 L970.1,216.4 L970.3,220.6 L970.5,229.5 L970.8,242.4 L971.0,258.2 L971.2,275.7 L971.4,293.5 L971.6,310.2 L971.8,324.3 L972.1,334.8 L972.3,340.6 L972.5,341.2 L972.7,336.5 L972.9,326.8 L973.1,312.7 L973.4,295.6 L973.6,276.8 L973.8,257.9 L974.0,240.5 L974.2,226.0 L974.4,215.8 L974.7,210.7 L974.9,211.2 L975.1,217.2 L975.3,228.4 L975.5,243.7 L975.7,261.9 L976.0,281.3 L976.2,300.4 L976.4,317.5 L976.6,331.0 L976.8,339.7 L977.0,343.0 L977.3,340.5 L977.5,332.3 L977.7,319.3 L977.9,302.6 L978.1,283.6 L978.3,264.1 L978.6,245.8 L978.8,230.3 L979.0,219.1 L979.2,213.1 L979.4,212.9 L979.6,218.4 L979.9,229.1 L980.1,244.1 L980.3,262.0 L980.5,281.1 L980.7,299.6 L980.9,315.9 L981.2,328.5 L981.4,336.2 L981.6,338.5 L981.8,335.0 L982.0,326.2 L982.2,312.9 L982.5,296.4 L982.7,278.3 L982.9,260.2 L983.1,243.9 L983.3,230.8 L983.5,222.2 L983.8,218.8 L984.0,221.0 L984.2,228.4 L984.4,240.0 L984.6,254.8 L984.8,271.1 L985.1,287.4 L985.3,302.2 L985.5,314.2 L985.7,322.2 L985.9,325.7 L986.1,324.7 L986.3,319.4 L986.6,310.6 L986.8,299.4 L987.0,287.0 L987.2,274.8 L987.4,263.8 L987.6,255.0 L987.9,249.1 L988.1,246.1 L988.3,246.0 L988.5,248.2 L988.7,252.0 L988.9,256.4 L989.2,260.6 L989.4,263.9 L989.6,266.0 L989.8,266.8 L990.0,266.8 L990.2,266.7 L990.5,267.3 L990.7,269.4 L990.9,273.5 L991.1,279.6 L991.3,287.4 L991.5,296.2 L991.8,304.9 L992.0,312.5 L992.2,318.0 L992.4,320.3 L992.6,318.9 L992.8,313.5 L993.1,304.5 L993.3,292.3 L993.5,278.1 L993.7,263.1 L993.9,248.8 L994.1,236.5 L994.4,227.5 L994.6,227.2 L994.8,227.5 L995.0,227.8 L995.2,236.8 L995.4,249.7 L995.7,264.9 L995.9,281.2 L996.1,297.0 L996.3,310.8 L996.5,321.4 L996.7,323.7 L997.0,323.4 L997.2,323.1 L997.4,319.8 L997.6,309.1 L997.8,296.0 L998.0,281.7 L998.3,267.7 L998.5,255.2 L998.7,245.3 L998.9,238.7 L999.1,236.0 L999.3,237.0 L999.6,241.3 L999.8,248.3 L1000.0,256.8 L1000.2,265.8 L1000.4,274.2 L1000.6,281.1 L1000.9,285.8 L1001.1,288.0 L1001.3,287.8 L1001.5,285.8 L1001.7,282.9 L1001.9,280.1 L1002.2,278.6 L1002.4,279.3 L1002.6,282.0 L1002.8,286.3 L1003.0,291.5 L1003.2,296.6 L1003.5,301.0 L1003.7,303.7 L1003.9,304.3 L1004.1,302.4 L1004.3,298.0 L1004.5,291.4 L1004.8,283.2 L1005.0,274.1 L1005.2,264.8 L1005.4,256.3 L1005.6,249.2 L1005.8,244.2 L1006.1,241.8 L1006.3,242.0 L1006.5,244.9 L1006.7,250.1 L1006.9,257.3 L1007.1,265.8 L1007.4,274.9 L1007.6,283.9 L1007.8,292.2 L1008.0,299.2 L1008.2,304.4 L1008.4,307.6 L1008.7,308.6 L1008.9,307.6 L1009.1,304.6 L1009.3,300.0 L1009.5,294.2 L1009.7,287.7 L1010.0,280.9 L1010.2,274.2 L1010.4,268.0 L1010.6,262.6 L1010.8,258.2 L1011.0,255.0 L1011.3,253.0 L1011.5,252.2 L1011.7,252.6 L1011.9,254.0 L1012.1,256.4 L1012.3,259.6 L1012.6,263.5 L1012.8,268.0 L1013.0,272.8 L1013.2,277.9 L1013.4,283.0 L1013.6,287.9 L1013.9,292.3 L1014.1,296.1 L1014.3,298.9 L1014.5,300.7 L1014.7,301.1 L1014.9,300.2 L1015.2,297.8 L1015.4,294.1 L1015.6,289.2 L1015.8,283.5 L1016.0,277.1 L1016.2,270.6 L1016.5,264.4 L1016.7,258.9 L1016.9,254.7 L1017.1,251.9 L1017.3,250.7 L1017.5,251.4 L1017.8,253.8 L1018.0,257.9 L1018.2,263.2 L1018.4,269.5 L1018.6,276.3 L1018.8,283.0 L1019.1,289.2 L1019.3,294.5 L1019.5,298.3 L1019.7,300.2 L1019.9,299.9 L1020.1,299.6 L1020.4,296.8 L1020.6,292.4 L1020.8,286.9 L1021.0,280.9 L1021.2,274.7 L1021.4,268.8 L1021.7,263.8 L1021.9,259.8 L1022.1,257.2 L1022.3,257.2 L1022.5,257.5 L1022.7,258.8 L1023.0,262.1 L1023.2,266.3 L1023.4,271.1 L1023.6,276.1 L1023.8,280.8 L1024.0,285.0 L1024.3,288.3 L1024.5,290.6 L1024.7,291.7 L1024.9,291.6 L1025.1,291.1 L1025.3,289.5 L1025.5,287.1 L1025.8,283.9 L1026.0,280.3 L1026.2,276.6 L1026.4,273.0 L1026.6,269.8 L1026.8,267.1 L1027.1,265.2 L1027.3,263.9 L1027.5,263.4 L1027.7,263.4 L1027.9,264.0 L1028.1,264.9 L1028.4,266.2 L1028.6,267.7 L1028.8,269.4 L1029.0,271.4 L1029.2,273.6 L1029.4,276.2 L1029.7,279.2 L1029.9,282.5 L1030.1,285.9 L1030.3,289.3 L1030.5,292.5 L1030.7,295.0 L1031.0,296.6 L1031.2,297.0 L1031.4,296.0 L1031.6,293.3 L1031.8,289.3 L1032.0,284.0 L1032.3,278.0 L1032.5,271.5 L1032.7,265.2 L1032.9,259.6 L1033.1,255.0 L1033.3,252.1 L1033.6,251.0 L1033.8,252.0 L1034.0,255.0 L1034.2,259.7 L1034.4,265.9 L1034.6,273.1 L1034.9,280.7 L1035.1,288.0 L1035.3,294.5 L1035.5,299.6 L1035.7,302.9 L1035.9,304.1 L1036.2,303.1 L1036.4,299.9 L1036.6,294.8 L1036.8,288.2 L1037.0,280.7 L1037.2,272.9 L1037.5,265.4 L1037.7,258.9 L1037.9,253.8 L1038.1,250.6 L1038.3,249.5 L1038.5,250.7 L1038.8,254.0 L1039.0,259.1 L1039.2,265.7 L1039.4,273.1 L1039.6,280.8 L1039.8,288.1 L1040.1,294.5 L1040.3,299.5 L1040.5,302.6 L1040.7,303.7 L1040.9,302.5 L1041.1,299.4 L1041.4,294.4 L1041.6,288.0 L1041.8,280.7 L1042.0,273.1 L1042.2,265.7 L1042.4,259.2 L1042.7,254.0 L1042.9,250.6 L1043.1,249.2 L1043.3,250.0 L1043.5,252.9 L1043.7,257.7 L1044.0,264.0 L1044.2,271.3 L1044.4,279.2 L1044.6,286.8 L1044.8,293.6 L1045.0,299.1 L1045.3,302.8 L1045.5,304.5 L1045.7,304.1 L1045.9,301.6 L1046.1,297.4 L1046.3,291.6 L1046.6,284.7 L1046.8,277.4 L1047.0,270.1 L1047.2,263.4 L1047.4,257.8 L1047.6,253.6 L1047.9,251.1 L1048.1,250.5 L1048.3,251.8 L1048.5,254.7 L1048.7,259.2 L1048.9,264.7 L1049.2,270.9 L1049.4,277.4 L1049.6,283.6 L1049.8,289.3 L1050.0,294.0 L1050.2,297.4 L1050.5,299.5 L1050.7,300.1 L1050.9,299.2 L1051.1,297.0 L1051.3,293.7 L1051.5,289.4 L1051.8,284.5 L1052.0,279.3 L1052.2,274.0 L1052.4,269.1 L1052.6,264.7 L1052.8,261.1 L1053.1,258.5 L1053.3,257.0 L1053.5,256.6 L1053.7,257.5 L1053.9,259.4 L1054.1,262.4 L1054.4,266.0 L1054.6,270.2 L1054.8,274.6 L1055.0,278.9 L1055.2,282.9 L1055.4,286.4 L1055.7,289.2 L1055.9,291.2 L1056.1,292.3 L1056.3,292.5 L1056.5,292.0 L1056.7,290.9 L1057.0,289.2 L1057.2,287.2 L1057.4,284.8 L1057.6,282.2 L1057.8,279.5 L1058.0,276.8 L1058.3,274.2 L1058.5,271.6 L1058.7,269.3 L1058.9,267.2 L1059.1,265.5 L1059.3,264.2 L1059.6,263.5 L1059.8,263.4 L1060.0,264.0 L1060.2,265.4 L1060.4,267.5 L1060.6,270.2 L1060.9,273.4 L1061.1,276.8 L1061.3,280.2 L1061.5,283.5 L1061.7,286.3 L1061.9,288.4 L1062.2,289.7 L1062.4,290.0 L1062.6,289.4 L1062.8,287.8 L1063.0,285.5 L1063.2,282.6 L1063.5,279.3 L1063.7,275.9 L1063.9,272.7 L1064.1,270.0 L1064.3,267.9 L1064.5,266.6 L1064.7,266.6 L1065.0,267.0 L1065.2,267.8 L1065.4,269.7 L1065.6,271.9 L1065.8,274.4 L1066.0,276.9 L1066.3,279.4 L1066.5,281.7 L1066.7,283.7 L1066.9,285.2 L1067.1,285.4 L1067.3,285.6 L1067.6,285.7 L1067.8,284.2 L1068.0,282.1 L1068.2,279.5 L1068.4,276.5 L1068.6,273.5 L1068.9,270.7 L1069.1,268.3 L1069.3,266.6 L1069.5,266.3 L1069.7,266.2 L1069.9,266.6 L1070.2,268.4 L1070.4,270.9 L1070.6,274.0 L1070.8,277.3 L1071.0,280.5 L1071.2,283.5 L1071.5,285.9 L1071.7,287.4 L1071.9,288.1 L1072.1,287.8 L1072.3,286.6 L1072.5,284.6 L1072.8,282.0 L1073.0,279.0 L1073.2,276.0 L1073.4,273.3 L1073.6,271.1 L1073.8,269.5 L1074.1,268.8 L1074.3,269.0 L1074.5,269.8 L1074.7,271.3 L1074.9,273.1 L1075.1,274.8 L1075.4,276.2 L1075.6,277.0 L1075.8,277.0 L1076.0,276.2 L1076.2,274.8 L1076.4,273.3 L1076.7,271.9 L1076.9,271.0 L1077.1,270.7 L1077.3,271.3 L1077.5,272.7 L1077.7,274.8 L1078.0,277.5 L1078.2,280.6 L1078.4,283.6 L1078.6,286.2 L1078.8,288.3 L1079.0,289.4 L1079.3,289.5 L1079.5,288.4 L1079.7,286.3 L1079.9,283.3 L1080.1,279.6 L1080.3,275.5 L1080.6,271.4 L1080.8,267.7 L1081.0,264.7 L1081.2,262.6 L1081.4,261.8 L1081.6,261.9 L1081.9,263.4 L1082.1,265.9 L1082.3,269.3 L1082.5,273.3 L1082.7,277.5 L1082.9,281.7 L1083.2,285.4 L1083.4,288.4 L1083.6,290.5 L1083.8,291.5 L1084.0,291.4 L1084.2,290.3 L1084.5,288.2 L1084.7,285.4 L1084.9,282.1 L1085.1,278.5 L1085.3,274.8 L1085.5,271.4 L1085.8,268.3 L1086.0,265.9 L1086.2,264.2 L1086.4,263.4 L1086.6,263.3 L1086.8,264.1 L1087.1,265.7 L1087.3,268.0 L1087.5,270.8 L1087.7,274.1 L1087.9,277.5 L1088.1,281.0 L1088.4,284.2 L1088.6,287.0 L1088.8,289.2 L1089.0,290.5 L1089.2,290.9 L1089.4,290.2 L1089.7,288.6 L1089.9,286.0 L1090.1,282.6 L1090.3,278.7 L1090.5,274.6 L1090.7,270.5 L1091.0,266.8 L1091.2,263.9 L1091.4,262.0 L1091.6,261.2 L1091.8,261.8 L1092.0,263.7 L1092.3,266.7 L1092.5,270.6 L1092.7,275.1 L1092.9,279.9 L1093.1,284.3 L1093.3,288.2 L1093.6,291.1 L1093.8,292.7 L1094.0,292.7 L1094.2,291.6 L1094.4,288.9 L1094.6,285.2 L1094.9,280.6 L1095.1,275.7 L1095.3,271.0 L1095.5,266.7 L1095.7,263.5 L1095.9,261.5 L1096.2,260.9 L1096.4,261.9 L1096.6,264.3 L1096.8,267.9 L1097.0,272.4 L1097.2,277.2 L1097.5,281.8 L1097.7,285.9 L1097.9,289.0 L1098.1,290.8 L1098.3,291.0 L1098.5,289.8 L1098.8,287.1 L1099.0,283.4 L1099.2,279.0 L1099.4,274.4 L1099.6,270.3 L1099.8,267.0 L1100.1,265.0 L1100.3,264.5 L1100.5,265.6 L1100.7,268.1 L1100.9,271.7 L1101.1,276.0 L1101.4,280.3 L1101.6,284.2 L1101.8,287.0 L1102.0,288.4 L1102.2,288.2 L1102.4,286.5 L1102.7,283.5 L1102.9,279.5 L1103.1,275.2 L1103.3,271.0 L1103.5,267.6 L1103.7,265.2 L1103.9,264.1 L1104.2,264.6 L1104.4,266.4 L1104.6,269.3 L1104.8,272.9 L1105.0,276.8 L1105.2,280.5 L1105.5,283.6 L1105.7,285.8 L1105.9,287.0 L1106.1,287.1 L1106.3,286.2 L1106.5,284.7 L1106.8,282.8 L1107.0,280.8 L1107.2,279.1 L1107.4,277.8 L1107.6,277.0 L1107.8,276.7 L1108.1,276.6 L1108.3,276.5 L1108.5,276.2 L1108.7,275.4 L1108.9,274.1 L1109.1,272.4 L1109.4,270.5 L1109.6,268.7 L1109.8,267.3 L1110.0,266.6 L1110.2,266.7 L1110.4,267.8 L1110.7,269.9 L1110.9,272.8 L1111.1,276.2 L1111.3,280.0 L1111.5,283.6 L1111.7,286.7 L1112.0,288.9 L1112.2,290.1 L1112.4,290.0 L1112.6,288.6 L1112.8,286.1 L1113.0,282.6 L1113.3,278.5 L1113.5,274.3 L1113.7,270.2 L1113.9,266.8 L1114.1,264.3 L1114.3,263.0 L1114.6,263.0 L1114.8,264.4 L1115.0,266.9 L1115.2,270.3 L1115.4,274.4 L1115.6,278.6 L1115.9,282.7 L1116.1,286.2 L1116.3,288.8 L1116.5,290.3 L1116.7,290.5 L1116.9,289.4 L1117.2,287.1 L1117.4,283.8 L1117.6,279.9 L1117.8,275.6 L1118.0,271.4 L1118.2,267.7 L1118.5,264.9 L1118.7,263.1 L1118.9,262.7 L1119.1,263.5 L1119.3,265.7 L1119.5,268.9 L1119.8,272.9 L1120.0,277.2 L1120.2,281.6 L1120.4,285.5 L1120.6,288.6 L1120.8,290.6 L1121.1,290.8 L1121.3,290.6 L1121.5,288.6 L1121.7,285.5 L1121.9,281.5 L1122.1,277.1 L1122.4,272.7 L1122.6,268.7 L1122.8,265.4 L1123.0,263.3 L1123.2,263.1 L1123.4,263.1 L1123.7,264.6 L1123.9,267.5 L1124.1,271.3 L1124.3,275.5 L1124.5,279.7 L1124.7,283.7 L1125.0,286.9 L1125.2,289.1 L1125.4,290.0 L1125.6,289.8 L1125.8,288.3 L1126.0,285.7 L1126.3,282.4 L1126.5,278.7 L1126.7,274.8 L1126.9,271.4 L1127.1,268.6 L1127.3,266.7 L1127.6,266.0 L1127.8,266.3 L1128.0,267.7 L1128.2,269.9 L1128.4,272.7 L1128.6,275.7 L1128.9,278.5 L1129.1,280.9 L1129.3,282.6 L1129.5,283.4 L1129.7,283.2 L1129.9,282.1 L1130.2,280.2 L1130.4,278.0 L1130.6,275.7 L1130.8,273.8 L1131.0,272.6 L1131.2,272.3 L1131.5,273.0 L1131.7,274.6 L1131.9,276.7 L1132.1,279.0 L1132.3,281.2 L1132.5,283.0 L1132.8,284.0 L1133.0,284.1 L1133.2,283.3 L1133.4,281.7 L1133.6,279.4 L1133.8,276.6 L1134.1,273.8 L1134.3,271.1 L1134.5,269.0 L1134.7,267.6 L1134.9,267.1 L1135.1,267.5 L1135.4,268.8 L1135.6,271.0 L1135.8,273.7 L1136.0,276.7 L1136.2,279.8 L1136.4,282.5 L1136.7,284.7 L1136.9,286.1 L1137.1,286.0 L1137.3,286.0 L1137.5,285.2 L1137.7,283.3 L1138.0,280.8 L1138.2,277.9 L1138.4,274.9 L1138.6,272.0 L1138.8,269.6 L1139.0,267.8 L1139.3,267.4 L1139.5,267.4 L1139.7,267.5 L1139.9,269.2 L1140.1,271.5 L1140.3,274.3 L1140.6,277.3 L1140.8,280.2 L1141.0,282.8 L1141.2,284.8 L1141.4,286.0 L1141.6,286.3 L1141.8,285.8 L1142.1,284.4 L1142.3,282.3 L1142.5,279.8 L1142.7,277.0 L1142.9,274.3 L1143.1,271.8 L1143.4,269.9 L1143.6,268.8 L1143.8,268.5 L1144.0,269.0 L1144.2,270.3 L1144.4,272.3 L1144.7,274.6 L1144.9,277.2 L1145.1,279.6 L1145.3,281.6 L1145.5,283.0 L1145.7,283.6 L1146.0,283.4 L1146.2,282.4 L1146.4,280.7 L1146.6,278.5 L1146.8,276.2 L1147.0,273.9 L1147.3,272.0 L1147.5,270.8 L1147.7,270.3 L1147.9,270.7 L1148.1,271.9 L1148.3,273.8 L1148.6,276.1 L1148.8,278.5 L1149.0,280.7 L1149.2,282.5 L1149.4,283.5 L1149.6,283.7 L1149.9,283.1 L1150.1,281.6 L1150.3,279.4 L1150.5,276.9 L1150.7,274.3 L1150.9,271.9 L1151.2,270.1 L1151.4,269.1 L1151.6,269.0 L1151.8,269.8 L1152.0,271.6 L1152.2,274.0 L1152.5,276.9 L1152.7,279.7 L1152.9,282.3 L1153.1,284.3 L1153.3,285.5 L1153.5,285.7 L1153.8,284.8 L1154.0,283.0 L1154.2,280.5 L1154.4,277.4 L1154.6,274.3 L1154.8,271.3 L1155.1,268.9 L1155.3,267.2 L1155.5,266.5 L1155.7,266.9 L1155.9,268.3 L1156.1,270.6 L1156.4,273.5 L1156.6,276.8 L1156.8,280.2 L1157.0,283.2 L1157.2,285.6 L1157.4,287.2 L1157.7,287.2 L1157.9,287.2 L1158.1,285.9 L1158.3,283.6 L1158.5,280.6 L1158.7,277.2 L1159.0,273.8 L1159.2,270.7 L1159.4,268.2 L1159.6,266.4 L1159.8,266.3 L1160.0,266.3 L1160.3,267.2 L1160.5,269.3 L1160.7,272.1 L1160.9,275.3 L1161.1,278.5 L1161.3,281.5 L1161.6,284.0 L1161.8,285.7 L1162.0,286.6 L1162.2,286.5 L1162.4,285.4 L1162.6,283.7 L1162.9,281.3 L1163.1,278.7 L1163.3,276.0 L1163.5,273.6 L1163.7,271.6 L1163.9,270.4 L1164.2,269.9 L1164.4,270.2 L1164.6,271.2 L1164.8,272.7 L1165.0,274.6 L1165.2,276.4 L1165.5,278.1 L1165.7,279.2 L1165.9,279.8 L1166.1,279.6 L1166.3,278.7 L1166.5,277.3 L1166.8,275.7 L1167.0,274.2 L1167.2,273.2 L1167.4,272.8 L1167.6,273.0 L1167.8,274.0 L1168.1,275.5 L1168.3,277.4 L1168.5,279.4 L1168.7,281.3 L1168.9,282.8 L1169.1,283.8 L1169.4,284.1 L1169.6,283.7 L1169.8,282.4 L1170.0,280.6 L1170.2,278.3 L1170.4,275.7 L1170.7,273.2 L1170.9,270.9 L1171.1,269.1 L1171.3,268.0 L1171.5,267.7 L1171.7,268.2 L1172.0,269.5 L1172.2,271.6 L1172.4,274.1 L1172.6,276.9 L1172.8,279.7 L1173.0,282.3 L1173.3,284.3 L1173.5,285.5 L1173.7,285.5 L1173.9,285.5 L1174.1,285.0 L1174.3,283.2 L1174.6,280.8 L1174.8,278.0 L1175.0,275.2 L1175.2,272.5 L1175.4,270.2 L1175.6,268.6 L1175.9,268.3 L1176.1,268.3 L1176.3,268.4 L1176.5,269.7 L1176.7,271.7 L1176.9,274.1 L1177.2,276.6 L1177.4,279.1 L1177.6,281.4 L1177.8,283.2 L1178.0,284.4 L1178.2,284.9 L1178.5,284.8 L1178.7,284.0 L1178.9,282.6 L1179.1,280.7 L1179.3,278.5 L1179.5,276.2 L1179.8,274.0 L1180.0,272.0 L1180.2,270.7 L1180.4,270.1" stroke="#EDB120" stroke-width="2"/>
</g>
<path d="M606.9 381.0v-6.5M606.9 167.4v6.5M693.5 381.0v-6.5M693.5 167.4v6.5M780.2 381.0v-6.5M780.2 167.4v6.5M866.8 381.0v-6.5M866.8 167.4v6.5M953.4 381.0v-6.5M953.4 167.4v6.5M1040.1 381.0v-6.5M1040.1 167.4v6.5M1126.7 381.0v-6.5M1126.7 167.4v6.5M541.9 381.0v-3.3M541.9 167.4v3.3M563.6 381.0v-3.3M563.6 167.4v3.3M585.3 381.0v-3.3M585.3 167.4v3.3M628.6 381.0v-3.3M628.6 167.4v3.3M650.2 381.0v-3.3M650.2 167.4v3.3M671.9 381.0v-3.3M671.9 167.4v3.3M715.2 381.0v-3.3M715.2 167.4v3.3M736.9 381.0v-3.3M736.9 167.4v3.3M758.5 381.0v-3.3M758.5 167.4v3.3M801.8 381.0v-3.3M801.8 167.4v3.3M823.5 381.0v-3.3M823.5 167.4v3.3M845.1 381.0v-3.3M845.1 167.4v3.3M888.5 381.0v-3.3M888.5 167.4v3.3M910.1 381.0v-3.3M910.1 167.4v3.3M931.8 381.0v-3.3M931.8 167.4v3.3M975.1 381.0v-3.3M975.1 167.4v3.3M996.7 381.0v-3.3M996.7 167.4v3.3M1018.4 381.0v-3.3M1018.4 167.4v3.3M1061.7 381.0v-3.3M1061.7 167.4v3.3M1083.4 381.0v-3.3M1083.4 167.4v3.3M1105.0 381.0v-3.3M1105.0 167.4v3.3M1148.3 381.0v-3.3M1148.3 167.4v3.3M1170.0 381.0v-3.3M1170.0 167.4v3.3M520.5 213.9h6.5M1180.4 213.9h-6.5M520.5 283.7h6.5M1180.4 283.7h-6.5M520.5 353.5h6.5M1180.4 353.5h-6.5M520.5 190.7h3.3M1180.4 190.7h-3.3M520.5 237.2h3.3M1180.4 237.2h-3.3M520.5 260.5h3.3M1180.4 260.5h-3.3M520.5 307.0h3.3M1180.4 307.0h-3.3M520.5 330.3h3.3M1180.4 330.3h-3.3M520.5 376.8h3.3M1180.4 376.8h-3.3" stroke="#000" stroke-width="1.1" fill="none"/>
<rect x="520.5" y="167.4" width="659.9" height="213.6" fill="none" stroke="#000" stroke-width="1.3"/>
<text x="606.9" y="397.7" text-anchor="middle">400</text>
<text x="693.5" y="397.7" text-anchor="middle">800</text>
<text x="780.2" y="397.7" text-anchor="middle">1200</text>
<text x="866.8" y="397.7" text-anchor="middle">1600</text>
<text x="953.4" y="397.7" text-anchor="middle">2000</text>
<text x="1040.1" y="397.7" text-anchor="middle">2400</text>
<text x="1126.7" y="397.7" text-anchor="middle">2800</text>
<text x="515.3" y="217.8" text-anchor="end">30</text>
<text x="515.3" y="287.6" text-anchor="end">0</text>
<text x="515.3" y="357.4" text-anchor="end">-30</text>
<text x="850" y="411.6" text-anchor="middle" font-size="12.8">seconds</text>
<text x="519.5" y="163.7">x10<tspan dy="-6">3</tspan></text>
<rect x="551.6" y="189.5" width="107" height="55.6" fill="#fff" stroke="#000" stroke-width="1.1"/>
<line x1="556.5" x2="588.3" y1="200.4" y2="200.4" stroke="#0072BD" stroke-width="1"/>
<text x="590.5" y="204.0" letter-spacing="0.15">kobe</text>
<line x1="556.5" x2="588.3" y1="217.4" y2="217.4" stroke="#D95319" stroke-width="1"/>
<text x="590.5" y="221.0" letter-spacing="0.15">kobe1</text>
<line x1="556.5" x2="588.3" y1="234.4" y2="234.4" stroke="#EDB120" stroke-width="2"/>
<text x="590.5" y="238.0" letter-spacing="0.15">kobe1Copy</text>
<rect x="525.6" y="470.4" width="655.2" height="80.0" fill="#fff"/>
<line x1="611.5" x2="611.5" y1="470.4" y2="550.4" stroke="#c2c2c2" stroke-width="1"/>
<line x1="697.5" x2="697.5" y1="470.4" y2="550.4" stroke="#c2c2c2" stroke-width="1"/>
<line x1="783.5" x2="783.5" y1="470.4" y2="550.4" stroke="#c2c2c2" stroke-width="1"/>
<line x1="869.5" x2="869.5" y1="470.4" y2="550.4" stroke="#c2c2c2" stroke-width="1"/>
<line x1="955.5" x2="955.5" y1="470.4" y2="550.4" stroke="#c2c2c2" stroke-width="1"/>
<line x1="1041.5" x2="1041.5" y1="470.4" y2="550.4" stroke="#c2c2c2" stroke-width="1"/>
<line x1="1127.5" x2="1127.5" y1="470.4" y2="550.4" stroke="#c2c2c2" stroke-width="1"/>
<line x1="525.6" x2="1180.8" y1="513.5" y2="513.5" stroke="#c2c2c2" stroke-width="1"/>
<path d="M525.6,513.8 L525.8,513.9 L526.0,514.0 L526.2,514.1 L526.5,514.2 L526.7,514.3 L526.9,514.3 L527.1,514.2 L527.3,514.2 L527.5,514.0 L527.8,513.9 L528.0,513.8 L528.2,513.7 L528.4,513.6 L528.6,513.5 L528.8,513.5 L529.0,513.5 L529.3,513.6 L529.5,513.7 L529.7,513.8 L529.9,513.9 L530.1,514.1 L530.3,514.2 L530.5,514.3 L530.8,514.4 L531.0,514.5 L531.2,514.5 L531.4,514.5 L531.6,514.4 L531.8,514.3 L532.1,514.1 L532.3,514.0 L532.5,513.9 L532.7,513.7 L532.9,513.6 L533.1,513.6 L533.3,513.5 L533.6,513.6 L533.8,513.6 L534.0,513.7 L534.2,513.8 L534.4,513.9 L534.6,514.0 L534.8,514.1 L535.1,514.1 L535.3,514.2 L535.5,514.2 L535.7,514.2 L535.9,514.1 L536.1,514.0 L536.4,513.9 L536.6,513.9 L536.8,513.9 L537.0,513.9 L537.2,513.9 L537.4,513.9 L537.6,514.0 L537.9,514.1 L538.1,514.2 L538.3,514.3 L538.5,514.3 L538.7,514.3 L538.9,514.3 L539.1,514.3 L539.4,514.2 L539.6,514.1 L539.8,513.9 L540.0,513.8 L540.2,513.7 L540.4,513.6 L540.7,513.5 L540.9,513.5 L541.1,513.5 L541.3,513.5 L541.5,513.6 L541.7,513.7 L541.9,513.9 L542.2,514.0 L542.4,514.1 L542.6,514.3 L542.8,514.4 L543.0,514.5 L543.2,514.5 L543.4,514.5 L543.7,514.5 L543.9,514.4 L544.1,514.3 L544.3,514.1 L544.5,514.0 L544.7,513.9 L545.0,513.7 L545.2,513.6 L545.4,513.5 L545.6,513.5 L545.8,513.5 L546.0,513.5 L546.2,513.5 L546.5,513.6 L546.7,513.7 L546.9,513.9 L547.1,514.0 L547.3,514.1 L547.5,514.2 L547.7,514.3 L548.0,514.4 L548.2,514.4 L548.4,514.4 L548.6,514.4 L548.8,514.3 L549.0,514.3 L549.3,514.2 L549.5,514.1 L549.7,514.0 L549.9,513.8 L550.1,513.7 L550.3,513.6 L550.5,513.5 L550.8,513.5 L551.0,513.4 L551.2,513.4 L551.4,513.5 L551.6,513.5 L551.8,513.5 L552.0,513.5 L552.3,513.6 L552.5,513.6 L552.7,513.6 L552.9,513.7 L553.1,513.7 L553.3,513.9 L553.6,514.0 L553.8,514.2 L554.0,514.4 L554.2,514.6 L554.4,514.9 L554.6,515.1 L554.8,515.3 L555.1,515.4 L555.3,515.4 L555.5,515.3 L555.7,515.0 L555.9,514.7 L556.1,514.3 L556.3,513.9 L556.6,513.5 L556.8,513.2 L557.0,512.9 L557.2,512.7 L557.4,512.6 L557.6,512.6 L557.9,512.7 L558.1,512.9 L558.3,513.1 L558.5,513.4 L558.7,513.7 L558.9,514.0 L559.1,514.3 L559.4,514.5 L559.6,514.7 L559.8,514.8 L560.0,514.9 L560.2,514.9 L560.4,514.8 L560.7,514.7 L560.9,514.6 L561.1,514.4 L561.3,514.2 L561.5,514.0 L561.7,513.9 L561.9,513.7 L562.2,513.6 L562.4,513.5 L562.6,513.5 L562.8,513.5 L563.0,513.5 L563.2,513.5 L563.4,513.6 L563.7,513.7 L563.9,513.8 L564.1,513.9 L564.3,514.1 L564.5,514.2 L564.7,514.3 L565.0,514.4 L565.2,514.4 L565.4,514.4 L565.6,514.4 L565.8,514.4 L566.0,514.3 L566.2,514.1 L566.5,514.0 L566.7,513.9 L566.9,513.7 L567.1,513.6 L567.3,513.6 L567.5,513.5 L567.7,513.5 L568.0,513.6 L568.2,513.7 L568.4,513.8 L568.6,513.9 L568.8,514.0 L569.0,514.2 L569.3,514.3 L569.5,514.4 L569.7,514.4 L569.9,514.4 L570.1,514.3 L570.3,514.2 L570.5,514.1 L570.8,514.0 L571.0,513.9 L571.2,513.7 L571.4,513.6 L571.6,513.6 L571.8,513.6 L572.0,513.6 L572.3,513.6 L572.5,513.7 L572.7,513.8 L572.9,514.0 L573.1,514.1 L573.3,514.2 L573.6,514.3 L573.8,514.4 L574.0,514.4 L574.2,514.4 L574.4,514.3 L574.6,514.3 L574.8,514.2 L575.1,514.1 L575.3,514.0 L575.5,513.8 L575.7,513.7 L575.9,513.7 L576.1,513.6 L576.3,513.6 L576.6,513.6 L576.8,513.6 L577.0,513.6 L577.2,513.7 L577.4,513.8 L577.6,513.9 L577.9,514.0 L578.1,514.1 L578.3,514.2 L578.5,514.3 L578.7,514.3 L578.9,514.4 L579.1,514.4 L579.4,514.3 L579.6,514.3 L579.8,514.2 L580.0,514.1 L580.2,514.0 L580.4,513.9 L580.6,513.8 L580.9,513.7 L581.1,513.7 L581.3,513.6 L581.5,513.6 L581.7,513.6 L581.9,513.7 L582.2,513.7 L582.4,513.8 L582.6,513.9 L582.8,514.0 L583.0,514.1 L583.2,514.2 L583.4,514.2 L583.7,514.3 L583.9,514.3 L584.1,514.3 L584.3,514.2 L584.5,514.2 L584.7,514.1 L584.9,514.0 L585.2,513.9 L585.4,513.8 L585.6,513.7 L585.8,513.7 L586.0,513.7 L586.2,513.7 L586.5,513.7 L586.7,513.7 L586.9,513.8 L587.1,513.9 L587.3,514.0 L587.5,514.1 L587.7,514.2 L588.0,514.2 L588.2,514.3 L588.4,514.3 L588.6,514.3 L588.8,514.3 L589.0,514.3 L589.2,514.2 L589.5,514.1 L589.7,514.0 L589.9,513.9 L590.1,513.8 L590.3,513.7 L590.5,513.6 L590.8,513.6 L591.0,513.5 L591.2,513.6 L591.4,513.6 L591.6,513.7 L591.8,513.8 L592.0,513.9 L592.3,514.1 L592.5,514.2 L592.7,514.3 L592.9,514.4 L593.1,514.4 L593.3,514.4 L593.5,514.4 L593.8,514.4 L594.0,514.3 L594.2,514.2 L594.4,514.0 L594.6,513.9 L594.8,513.7 L595.1,513.6 L595.3,513.5 L595.5,513.5 L595.7,513.5 L595.9,513.5 L596.1,513.6 L596.3,513.7 L596.6,513.8 L596.8,514.0 L597.0,514.1 L597.2,514.3 L597.4,514.4 L597.6,514.4 L597.9,514.5 L598.1,514.5 L598.3,514.4 L598.5,514.3 L598.7,514.2 L598.9,514.0 L599.1,513.9 L599.4,513.8 L599.6,513.6 L599.8,513.5 L600.0,513.5 L600.2,513.5 L600.4,513.5 L600.6,513.6 L600.9,513.7 L601.1,513.9 L601.3,514.0 L601.5,514.1 L601.7,514.3 L601.9,514.4 L602.2,514.4 L602.4,514.5 L602.6,514.4 L602.8,514.4 L603.0,514.3 L603.2,514.1 L603.4,514.0 L603.7,513.8 L603.9,513.7 L604.1,513.6 L604.3,513.5 L604.5,513.5 L604.7,513.5 L604.9,513.5 L605.2,513.6 L605.4,513.8 L605.6,513.9 L605.8,514.1 L606.0,514.2 L606.2,514.3 L606.5,514.4 L606.7,514.5 L606.9,514.5 L607.1,514.4 L607.3,514.4 L607.5,514.3 L607.7,514.1 L608.0,514.0 L608.2,513.8 L608.4,513.7 L608.6,513.6 L608.8,513.5 L609.0,513.5 L609.2,513.5 L609.5,513.5 L609.7,513.6 L609.9,513.7 L610.1,513.9 L610.3,514.0 L610.5,514.2 L610.8,514.3 L611.0,514.4 L611.2,514.5 L611.4,514.5 L611.6,514.5 L611.8,514.4 L612.0,514.3 L612.3,514.2 L612.5,514.1 L612.7,513.9 L612.9,513.7 L613.1,513.6 L613.3,513.5 L613.5,513.5 L613.8,513.4 L614.0,513.5 L614.2,513.5 L614.4,513.6 L614.6,513.8 L614.8,513.9 L615.1,514.1 L615.3,514.2 L615.5,514.4 L615.7,514.5 L615.9,514.5 L616.1,514.5 L616.3,514.5 L616.6,514.4 L616.8,514.2 L617.0,514.1 L617.2,513.9 L617.4,513.8 L617.6,513.7 L617.8,513.5 L618.1,513.5 L618.3,513.4 L618.5,513.5 L618.7,513.5 L618.9,513.6 L619.1,513.7 L619.4,513.9 L619.6,514.0 L619.8,514.2 L620.0,514.3 L620.2,514.4 L620.4,514.5 L620.6,514.5 L620.9,514.5 L621.1,514.4 L621.3,514.3 L621.5,514.2 L621.7,514.0 L621.9,513.9 L622.1,513.8 L622.4,513.7 L622.6,513.6 L622.8,513.5 L623.0,513.5 L623.2,513.6 L623.4,513.6 L623.7,513.7 L623.9,513.8 L624.1,513.9 L624.3,514.0 L624.5,514.1 L624.7,514.2 L624.9,514.2 L625.2,514.3 L625.4,514.2 L625.6,514.2 L625.8,514.2 L626.0,514.1 L626.2,514.0 L626.4,514.0 L626.7,514.0 L626.9,514.0 L627.1,514.0 L627.3,514.0 L627.5,514.1 L627.7,514.1 L628.0,514.1 L628.2,514.2 L628.4,514.1 L628.6,514.1 L628.8,514.1 L629.0,514.0 L629.2,513.9 L629.5,513.8 L629.7,513.7 L629.9,513.6 L630.1,513.6 L630.3,513.6 L630.5,513.6 L630.8,513.6 L631.0,513.7 L631.2,513.8 L631.4,513.9 L631.6,514.0 L631.8,514.2 L632.0,514.3 L632.3,514.4 L632.5,514.4 L632.7,514.5 L632.9,514.5 L633.1,514.4 L633.3,514.4 L633.5,514.3 L633.8,514.1 L634.0,514.0 L634.2,513.8 L634.4,513.7 L634.6,513.5 L634.8,513.4 L635.1,513.3 L635.3,513.3 L635.5,513.3 L635.7,513.3 L635.9,513.4 L636.1,513.6 L636.3,513.8 L636.6,514.0 L636.8,514.3 L637.0,514.5 L637.2,514.7 L637.4,514.8 L637.6,514.9 L637.8,514.9 L638.1,514.9 L638.3,514.8 L638.5,514.6 L638.7,514.4 L638.9,514.1 L639.1,513.9 L639.4,513.6 L639.6,513.4 L639.8,513.2 L640.0,513.1 L640.2,513.0 L640.4,513.0 L640.6,513.1 L640.9,513.3 L641.1,513.4 L641.3,513.6 L641.5,513.8 L641.7,514.0 L641.9,514.2 L642.1,514.4 L642.4,514.5 L642.6,514.6 L642.8,514.6 L643.0,514.6 L643.2,514.6 L643.4,514.5 L643.7,514.4 L643.9,514.2 L644.1,514.1 L644.3,514.0 L644.5,513.8 L644.7,513.7 L644.9,513.6 L645.2,513.6 L645.4,513.6 L645.6,513.6 L645.8,513.6 L646.0,513.7 L646.2,513.7 L646.4,513.8 L646.7,513.9 L646.9,514.1 L647.1,514.2 L647.3,514.3 L647.5,514.3 L647.7,514.3 L648.0,514.3 L648.2,514.3 L648.4,514.2 L648.6,514.1 L648.8,514.0 L649.0,513.9 L649.2,513.8 L649.5,513.7 L649.7,513.6 L649.9,513.7 L650.1,513.7 L650.3,513.8 L650.5,513.9 L650.7,514.0 L651.0,514.2 L651.2,514.3 L651.4,514.3 L651.6,514.4 L651.8,514.3 L652.0,514.3 L652.3,514.2 L652.5,514.1 L652.7,513.9 L652.9,513.8 L653.1,513.6 L653.3,513.6 L653.5,513.5 L653.8,513.5 L654.0,513.5 L654.2,513.6 L654.4,513.7 L654.6,513.9 L654.8,514.0 L655.0,514.2 L655.3,514.3 L655.5,514.4 L655.7,514.5 L655.9,514.5 L656.1,514.5 L656.3,514.4 L656.6,514.3 L656.8,514.2 L657.0,514.0 L657.2,513.9 L657.4,513.7 L657.6,513.6 L657.8,513.5 L658.1,513.4 L658.3,513.4 L658.5,513.5 L658.7,513.5 L658.9,513.6 L659.1,513.7 L659.3,513.9 L659.6,514.1 L659.8,514.2 L660.0,514.4 L660.2,514.5 L660.4,514.6 L660.6,514.7 L660.9,514.7 L661.1,514.6 L661.3,514.5 L661.5,514.3 L661.7,514.1 L661.9,513.9 L662.1,513.7 L662.4,513.5 L662.6,513.3 L662.8,513.1 L663.0,513.1 L663.2,513.1 L663.4,513.2 L663.7,513.3 L663.9,513.5 L664.1,513.8 L664.3,514.1 L664.5,514.4 L664.7,514.7 L664.9,514.9 L665.2,515.1 L665.4,515.1 L665.6,515.0 L665.8,514.9 L666.0,514.7 L666.2,514.4 L666.4,514.1 L666.7,513.7 L666.9,513.4 L667.1,513.2 L667.3,513.0 L667.5,512.9 L667.7,512.9 L668.0,513.0 L668.2,513.2 L668.4,513.5 L668.6,513.8 L668.8,514.1 L669.0,514.4 L669.2,514.6 L669.5,514.8 L669.7,514.9 L669.9,514.9 L670.1,514.9 L670.3,514.7 L670.5,514.5 L670.7,514.3 L671.0,514.0 L671.2,513.7 L671.4,513.5 L671.6,513.3 L671.8,513.2 L672.0,513.2 L672.3,513.2 L672.5,513.3 L672.7,513.4 L672.9,513.6 L673.1,513.8 L673.3,514.0 L673.5,514.2 L673.8,514.4 L674.0,514.6 L674.2,514.7 L674.4,514.7 L674.6,514.7 L674.8,514.6 L675.0,514.5 L675.3,514.2 L675.5,514.0 L675.7,513.8 L675.9,513.5 L676.1,513.3 L676.3,513.2 L676.6,513.1 L676.8,513.1 L677.0,513.2 L677.2,513.4 L677.4,513.6 L677.6,513.9 L677.8,514.2 L678.1,514.4 L678.3,514.6 L678.5,514.8 L678.7,514.9 L678.9,514.8 L679.1,514.7 L679.3,514.5 L679.6,514.2 L679.8,513.8 L680.0,513.5 L680.2,513.3 L680.4,513.1 L680.6,513.0 L680.9,513.0 L681.1,513.2 L681.3,513.5 L681.5,513.8 L681.7,514.2 L681.9,514.6 L682.1,515.0 L682.4,515.2 L682.6,515.4 L682.8,515.3 L683.0,515.2 L683.2,514.9 L683.4,514.5 L683.6,514.0 L683.9,513.5 L684.1,513.0 L684.3,512.5 L684.5,512.2 L684.7,512.0 L684.9,512.0 L685.2,512.2 L685.4,512.5 L685.6,513.0 L685.8,513.7 L686.0,514.3 L686.2,515.0 L686.4,515.6 L686.7,516.1 L686.9,516.4 L687.1,516.4 L687.3,516.3 L687.5,515.9 L687.7,515.4 L687.9,514.8 L688.2,514.1 L688.4,513.4 L688.6,512.8 L688.8,512.2 L689.0,511.8 L689.2,511.6 L689.5,511.6 L689.7,511.8 L689.9,512.1 L690.1,512.6 L690.3,513.3 L690.5,513.9 L690.7,514.6 L691.0,515.2 L691.2,515.7 L691.4,516.0 L691.6,516.2 L691.8,516.2 L692.0,516.0 L692.2,515.7 L692.5,515.2 L692.7,514.7 L692.9,514.1 L693.1,513.5 L693.3,513.0 L693.5,512.5 L693.8,512.2 L694.0,512.1 L694.2,512.0 L694.4,512.2 L694.6,512.4 L694.8,512.8 L695.0,513.2 L695.3,513.7 L695.5,514.2 L695.7,514.6 L695.9,515.0 L696.1,515.3 L696.3,515.5 L696.5,515.5 L696.8,515.5 L697.0,515.4 L697.2,515.2 L697.4,514.9 L697.6,514.6 L697.8,514.2 L698.1,513.9 L698.3,513.6 L698.5,513.3 L698.7,513.1 L698.9,512.9 L699.1,512.8 L699.3,512.8 L699.6,512.8 L699.8,512.8 L700.0,513.0 L700.2,513.2 L700.4,513.4 L700.6,513.7 L700.9,513.9 L701.1,514.2 L701.3,514.5 L701.5,514.8 L701.7,515.0 L701.9,515.1 L702.1,515.2 L702.4,515.1 L702.6,515.0 L702.8,514.8 L703.0,514.6 L703.2,514.3 L703.4,514.0 L703.6,513.7 L703.9,513.4 L704.1,513.1 L704.3,513.0 L704.5,512.9 L704.7,512.9 L704.9,513.0 L705.2,513.2 L705.4,513.4 L705.6,513.7 L705.8,514.0 L706.0,514.3 L706.2,514.5 L706.4,514.7 L706.7,514.8 L706.9,514.8 L707.1,514.7 L707.3,514.6 L707.5,514.4 L707.7,514.2 L707.9,513.9 L708.2,513.7 L708.4,513.5 L708.6,513.4 L708.8,513.3 L709.0,513.3 L709.2,513.4 L709.5,513.6 L709.7,513.7 L709.9,514.0 L710.1,514.2 L710.3,514.4 L710.5,514.6 L710.7,514.6 L711.0,514.7 L711.2,514.6 L711.4,514.5 L711.6,514.3 L711.8,514.0 L712.0,513.8 L712.2,513.5 L712.5,513.3 L712.7,513.2 L712.9,513.1 L713.1,513.2 L713.3,513.2 L713.5,513.4 L713.8,513.6 L714.0,513.9 L714.2,514.2 L714.4,514.5 L714.6,514.7 L714.8,514.9 L715.0,514.9 L715.3,515.0 L715.5,514.9 L715.7,514.7 L715.9,514.5 L716.1,514.2 L716.3,513.9 L716.5,513.6 L716.8,513.3 L717.0,513.1 L717.2,513.0 L717.4,513.0 L717.6,513.0 L717.8,513.0 L718.1,513.2 L718.3,513.5 L718.5,513.8 L718.7,514.1 L718.9,514.4 L719.1,514.7 L719.3,514.9 L719.6,515.0 L719.8,515.0 L720.0,515.0 L720.2,514.9 L720.4,514.7 L720.6,514.4 L720.8,514.1 L721.1,513.8 L721.3,513.5 L721.5,513.2 L721.7,513.0 L721.9,512.9 L722.1,512.9 L722.4,513.0 L722.6,513.1 L722.8,513.3 L723.0,513.6 L723.2,513.9 L723.4,514.2 L723.6,514.4 L723.9,514.7 L724.1,514.8 L724.3,514.9 L724.5,514.9 L724.7,514.8 L724.9,514.7 L725.1,514.5 L725.4,514.3 L725.6,514.1 L725.8,513.9 L726.0,513.7 L726.2,513.6 L726.4,513.5 L726.7,513.5 L726.9,513.5 L727.1,513.5 L727.3,513.5 L727.5,513.5 L727.7,513.5 L727.9,513.5 L728.2,513.6 L728.4,513.6 L728.6,513.6 L728.8,513.7 L729.0,513.8 L729.2,514.0 L729.4,514.2 L729.7,514.3 L729.9,514.5 L730.1,514.7 L730.3,514.8 L730.5,514.8 L730.7,514.8 L731.0,514.7 L731.2,514.5 L731.4,514.3 L731.6,514.0 L731.8,513.6 L732.0,513.3 L732.2,513.1 L732.5,512.9 L732.7,512.8 L732.9,512.9 L733.1,513.1 L733.3,513.3 L733.5,513.7 L733.8,514.1 L734.0,514.4 L734.2,514.8 L734.4,515.1 L734.6,515.2 L734.8,515.3 L735.0,515.2 L735.3,514.9 L735.5,514.6 L735.7,514.2 L735.9,513.8 L736.1,513.4 L736.3,513.1 L736.5,512.8 L736.8,512.7 L737.0,512.7 L737.2,512.7 L737.4,512.9 L737.6,513.3 L737.8,513.6 L738.1,514.0 L738.3,514.4 L738.5,514.7 L738.7,515.0 L738.9,515.2 L739.1,515.3 L739.3,515.2 L739.6,515.1 L739.8,514.9 L740.0,514.6 L740.2,514.3 L740.4,514.0 L740.6,513.7 L740.8,513.4 L741.1,513.2 L741.3,513.0 L741.5,512.9 L741.7,512.8 L741.9,512.8 L742.1,512.9 L742.4,513.0 L742.6,513.2 L742.8,513.4 L743.0,513.6 L743.2,513.9 L743.4,514.1 L743.6,514.4 L743.9,514.6 L744.1,514.8 L744.3,515.0 L744.5,515.1 L744.7,515.2 L744.9,515.2 L745.1,515.2 L745.4,515.1 L745.6,515.0 L745.8,514.8 L746.0,514.6 L746.2,514.3 L746.4,514.0 L746.7,513.7 L746.9,513.4 L747.1,513.1 L747.3,512.8 L747.5,512.5 L747.7,512.3 L747.9,512.2 L748.2,512.2 L748.4,512.3 L748.6,512.4 L748.8,512.7 L749.0,513.1 L749.2,513.6 L749.4,514.2 L749.7,514.7 L749.9,515.3 L750.1,515.8 L750.3,516.2 L750.5,516.5 L750.7,516.6 L751.0,516.5 L751.2,516.2 L751.4,515.7 L751.6,515.1 L751.8,514.3 L752.0,513.5 L752.2,512.8 L752.5,512.1 L752.7,511.6 L752.9,511.2 L753.1,511.2 L753.3,511.2 L753.5,511.5 L753.7,512.1 L754.0,512.8 L754.2,513.6 L754.4,514.5 L754.6,515.3 L754.8,516.0 L755.0,516.5 L755.3,516.6 L755.5,516.6 L755.7,516.6 L755.9,516.2 L756.1,515.5 L756.3,514.7 L756.5,513.9 L756.8,513.1 L757.0,512.4 L757.2,511.8 L757.4,511.5 L757.6,511.5 L757.8,511.5 L758.0,511.9 L758.3,512.5 L758.5,513.2 L758.7,514.0 L758.9,514.7 L759.1,515.4 L759.3,515.8 L759.6,516.1 L759.8,516.1 L760.0,515.9 L760.2,515.5 L760.4,515.0 L760.6,514.3 L760.8,513.7 L761.1,513.1 L761.3,512.6 L761.5,512.4 L761.7,512.4 L761.9,512.5 L762.1,512.9 L762.3,513.4 L762.6,514.0 L762.8,514.5 L763.0,515.0 L763.2,515.3 L763.4,515.4 L763.6,515.3 L763.9,515.0 L764.1,514.5 L764.3,513.9 L764.5,513.4 L764.7,512.9 L764.9,512.5 L765.1,512.3 L765.4,512.3 L765.6,512.6 L765.8,513.0 L766.0,513.5 L766.2,514.1 L766.4,514.7 L766.6,515.2 L766.9,515.5 L767.1,515.7 L767.3,515.7 L767.5,515.5 L767.7,515.2 L767.9,514.7 L768.2,514.1 L768.4,513.5 L768.6,513.1 L768.8,512.7 L769.0,512.5 L769.2,512.5 L769.4,512.7 L769.7,513.0 L769.9,513.5 L770.1,514.0 L770.3,514.5 L770.5,514.8 L770.7,515.1 L771.0,515.1 L771.2,515.0 L771.4,514.6 L771.6,514.2 L771.8,513.7 L772.0,513.3 L772.2,512.9 L772.5,512.7 L772.7,512.6 L772.9,512.7 L773.1,513.0 L773.3,513.4 L773.5,513.9 L773.7,514.5 L774.0,514.9 L774.2,515.3 L774.4,515.6 L774.6,515.7 L774.8,515.7 L775.0,515.4 L775.3,515.0 L775.5,514.5 L775.7,513.9 L775.9,513.3 L776.1,512.8 L776.3,512.4 L776.5,512.1 L776.8,512.0 L777.0,512.1 L777.2,512.4 L777.4,512.8 L777.6,513.4 L777.8,514.0 L778.0,514.6 L778.3,515.2 L778.5,515.6 L778.7,515.9 L778.9,516.0 L779.1,515.9 L779.3,515.7 L779.6,515.2 L779.8,514.6 L780.0,514.0 L780.2,513.3 L780.4,512.8 L780.6,512.3 L780.8,512.0 L781.1,511.9 L781.3,512.0 L781.5,512.3 L781.7,512.7 L781.9,513.3 L782.1,514.0 L782.3,514.6 L782.6,515.2 L782.8,515.7 L783.0,516.0 L783.2,516.1 L783.4,516.0 L783.6,515.7 L783.9,515.3 L784.1,514.7 L784.3,514.0 L784.5,513.3 L784.7,512.7 L784.9,512.2 L785.1,511.9 L785.4,511.7 L785.6,511.7 L785.8,512.0 L786.0,512.4 L786.2,513.0 L786.4,513.7 L786.6,514.4 L786.9,515.0 L787.1,515.6 L787.3,516.0 L787.5,516.3 L787.7,516.4 L787.9,516.2 L788.2,515.9 L788.4,515.4 L788.6,514.8 L788.8,514.2 L789.0,513.5 L789.2,512.9 L789.4,512.3 L789.7,511.9 L789.9,511.6 L790.1,511.6 L790.3,511.7 L790.5,511.9 L790.7,512.4 L790.9,512.9 L791.2,513.5 L791.4,514.1 L791.6,514.7 L791.8,515.3 L792.0,515.7 L792.2,516.0 L792.5,516.2 L792.7,516.3 L792.9,516.2 L793.1,516.0 L793.3,515.6 L793.5,515.2 L793.7,514.7 L794.0,514.2 L794.2,513.7 L794.4,513.1 L794.6,512.6 L794.8,512.2 L795.0,511.8 L795.2,511.6 L795.5,511.4 L795.7,511.5 L795.9,511.7 L796.1,512.0 L796.3,512.6 L796.5,513.2 L796.8,514.0 L797.0,514.8 L797.2,515.5 L797.4,516.2 L797.6,516.7 L797.8,517.1 L798.0,517.1 L798.3,516.9 L798.5,516.4 L798.7,515.7 L798.9,514.9 L799.1,513.9 L799.3,512.9 L799.5,512.0 L799.8,511.3 L800.0,510.9 L800.2,510.7 L800.4,510.9 L800.6,511.3 L800.8,512.0 L801.1,512.9 L801.3,513.8 L801.5,514.8 L801.7,515.6 L801.9,516.2 L802.1,516.5 L802.3,516.5 L802.6,516.3 L802.8,515.9 L803.0,515.2 L803.2,514.6 L803.4,513.9 L803.6,513.4 L803.9,513.1 L804.1,512.9 L804.3,513.1 L804.5,513.3 L804.7,513.7 L804.9,514.1 L805.1,514.4 L805.4,514.4 L805.6,514.3 L805.8,513.9 L806.0,513.4 L806.2,512.8 L806.4,512.3 L806.6,512.0 L806.9,511.8 L807.1,511.9 L807.3,512.3 L807.5,512.9 L807.7,513.8 L807.9,514.7 L808.2,515.6 L808.4,516.5 L808.6,517.1 L808.8,517.4 L809.0,517.3 L809.2,516.9 L809.4,516.2 L809.7,515.2 L809.9,514.1 L810.1,512.9 L810.3,511.7 L810.5,510.8 L810.7,510.2 L810.9,509.9 L811.2,510.1 L811.4,510.6 L811.6,511.5 L811.8,512.6 L812.0,513.9 L812.2,515.2 L812.5,516.4 L812.7,517.4 L812.9,518.1 L813.1,518.3 L813.3,518.1 L813.5,517.5 L813.7,516.5 L814.0,515.3 L814.2,514.0 L814.4,512.6 L814.6,511.4 L814.8,510.4 L815.0,509.8 L815.2,509.6 L815.5,509.8 L815.7,510.4 L815.9,511.4 L816.1,512.7 L816.3,514.1 L816.5,515.5 L816.8,516.7 L817.0,517.7 L817.2,518.2 L817.4,518.4 L817.6,518.1 L817.8,517.4 L818.0,516.4 L818.3,515.1 L818.5,513.7 L818.7,512.3 L818.9,511.1 L819.1,510.2 L819.3,509.6 L819.5,509.5 L819.8,509.9 L820.0,510.7 L820.2,511.8 L820.4,513.1 L820.6,514.5 L820.8,515.9 L821.1,517.1 L821.3,517.9 L821.5,518.4 L821.7,518.5 L821.9,518.0 L822.1,517.2 L822.3,516.1 L822.6,514.7 L822.8,513.3 L823.0,511.9 L823.2,510.7 L823.4,509.8 L823.6,509.4 L823.8,509.4 L824.1,509.8 L824.3,510.7 L824.5,511.8 L824.7,513.2 L824.9,514.7 L825.1,516.1 L825.4,517.3 L825.6,518.2 L825.8,518.7 L826.0,518.7 L826.2,518.3 L826.4,517.5 L826.6,516.4 L826.9,515.0 L827.1,513.6 L827.3,512.2 L827.5,511.0 L827.7,510.1 L827.9,509.6 L828.1,509.4 L828.4,509.7 L828.6,510.3 L828.8,511.3 L829.0,512.4 L829.2,513.7 L829.4,514.9 L829.7,516.0 L829.9,517.0 L830.1,517.6 L830.3,518.0 L830.5,518.0 L830.7,517.7 L830.9,517.0 L831.2,516.2 L831.4,515.2 L831.6,514.2 L831.8,513.1 L832.0,512.2 L832.2,511.4 L832.4,510.8 L832.7,510.5 L832.9,510.5 L833.1,510.7 L833.3,511.2 L833.5,511.9 L833.7,512.7 L834.0,513.6 L834.2,514.4 L834.4,515.3 L834.6,516.0 L834.8,516.6 L835.0,516.9 L835.2,517.1 L835.5,516.9 L835.7,516.6 L835.9,516.1 L836.1,515.4 L836.3,514.6 L836.5,513.7 L836.8,512.9 L837.0,512.2 L837.2,511.6 L837.4,511.2 L837.6,511.1 L837.8,511.2 L838.0,511.5 L838.3,512.1 L838.5,512.8 L838.7,513.7 L838.9,514.5 L839.1,515.3 L839.3,516.0 L839.5,516.5 L839.8,516.8 L840.0,516.7 L840.2,516.4 L840.4,515.9 L840.6,515.2 L840.8,514.3 L841.1,513.5 L841.3,512.7 L841.5,512.0 L841.7,511.5 L841.9,511.3 L842.1,511.4 L842.3,511.7 L842.6,512.3 L842.8,513.1 L843.0,513.9 L843.2,514.8 L843.4,515.5 L843.6,516.1 L843.8,516.5 L844.1,516.6 L844.3,516.4 L844.5,515.9 L844.7,515.2 L844.9,514.3 L845.1,513.4 L845.4,512.5 L845.6,511.8 L845.8,511.3 L846.0,511.1 L846.2,511.2 L846.4,511.7 L846.6,512.4 L846.9,513.3 L847.1,514.3 L847.3,515.3 L847.5,516.2 L847.7,516.8 L847.9,517.1 L848.1,517.1 L848.4,516.7 L848.6,516.0 L848.8,515.1 L849.0,514.0 L849.2,512.9 L849.4,512.0 L849.7,511.2 L849.9,510.8 L850.1,510.7 L850.3,511.0 L850.5,511.6 L850.7,512.5 L850.9,513.5 L851.2,514.6 L851.4,515.6 L851.6,516.4 L851.8,516.8 L852.0,516.9 L852.2,516.7 L852.4,516.0 L852.7,515.2 L852.9,514.2 L853.1,513.2 L853.3,512.3 L853.5,511.7 L853.7,511.5 L854.0,511.6 L854.2,512.1 L854.4,512.8 L854.6,513.8 L854.8,514.8 L855.0,515.7 L855.2,516.4 L855.5,516.8 L855.7,516.7 L855.9,516.3 L856.1,515.6 L856.3,514.6 L856.5,513.5 L856.7,512.4 L857.0,511.5 L857.2,510.7 L857.4,510.3 L857.6,510.3 L857.8,510.7 L858.0,511.4 L858.3,512.4 L858.5,513.7 L858.7,514.9 L858.9,516.1 L859.1,517.2 L859.3,517.9 L859.5,518.3 L859.8,518.3 L860.0,517.9 L860.2,517.2 L860.4,516.1 L860.6,514.8 L860.8,513.4 L861.0,512.1 L861.3,510.8 L861.5,509.8 L861.7,509.4 L861.9,509.3 L862.1,509.3 L862.3,509.7 L862.6,510.7 L862.8,512.0 L863.0,513.4 L863.2,515.0 L863.4,516.4 L863.6,517.7 L863.8,518.8 L864.1,519.1 L864.3,519.1 L864.5,519.2 L864.7,518.6 L864.9,517.5 L865.1,516.1 L865.3,514.6 L865.6,513.0 L865.8,511.5 L866.0,510.2 L866.2,509.1 L866.4,508.5 L866.6,508.3 L866.9,508.5 L867.1,509.2 L867.3,510.2 L867.5,511.4 L867.7,512.8 L867.9,514.2 L868.1,515.6 L868.4,516.8 L868.6,517.8 L868.8,518.4 L869.0,518.7 L869.2,518.7 L869.4,518.3 L869.6,517.7 L869.9,517.0 L870.1,516.1 L870.3,515.2 L870.5,514.4 L870.7,513.6 L870.9,513.0 L871.2,512.5 L871.4,512.3 L871.6,512.1 L871.8,512.0 L872.0,512.0 L872.2,512.1 L872.4,512.1 L872.7,512.0 L872.9,511.9 L873.1,511.7 L873.3,511.6 L873.5,511.4 L873.7,511.3 L874.0,511.3 L874.2,511.4 L874.4,511.8 L874.6,512.3 L874.8,513.1 L875.0,514.0 L875.2,515.1 L875.5,516.2 L875.7,517.2 L875.9,518.2 L876.1,519.0 L876.3,519.5 L876.5,519.6 L876.7,519.4 L877.0,518.7 L877.2,517.7 L877.4,516.3 L877.6,514.7 L877.8,513.0 L878.0,511.2 L878.3,509.6 L878.5,508.2 L878.7,507.2 L878.9,506.8 L879.1,506.8 L879.3,507.2 L879.5,508.3 L879.8,509.9 L880.0,511.8 L880.2,514.0 L880.4,516.2 L880.6,518.3 L880.8,520.1 L881.0,521.4 L881.3,521.4 L881.5,521.5 L881.7,521.5 L881.9,520.5 L882.1,518.8 L882.3,516.7 L882.6,514.4 L882.8,512.1 L883.0,509.9 L883.2,508.1 L883.4,506.7 L883.6,506.2 L883.8,506.2 L884.1,506.2 L884.3,507.3 L884.5,508.8 L884.7,510.7 L884.9,512.8 L885.1,514.9 L885.3,516.8 L885.6,518.5 L885.8,519.8 L886.0,520.6 L886.2,520.9 L886.4,520.8 L886.6,520.3 L886.9,519.4 L887.1,518.3 L887.3,517.1 L887.5,515.9 L887.7,514.6 L887.9,513.5 L888.1,512.5 L888.4,511.5 L888.6,510.7 L888.8,509.9 L889.0,509.2 L889.2,508.7 L889.4,508.2 L889.6,507.9 L889.9,507.8 L890.1,508.1 L890.3,508.7 L890.5,509.6 L890.7,510.9 L890.9,512.5 L891.2,514.3 L891.4,516.3 L891.6,518.2 L891.8,520.0 L892.0,521.4 L892.2,522.3 L892.4,522.6 L892.7,522.4 L892.9,521.4 L893.1,519.9 L893.3,517.9 L893.5,515.6 L893.7,513.1 L893.9,510.7 L894.2,508.5 L894.4,506.7 L894.6,505.5 L894.8,504.9 L895.0,505.0 L895.2,505.7 L895.5,507.0 L895.7,508.7 L895.9,510.7 L896.1,512.9 L896.3,515.0 L896.5,516.9 L896.7,518.5 L897.0,519.8 L897.2,520.6 L897.4,521.1 L897.6,521.2 L897.8,521.0 L898.0,520.6 L898.2,519.9 L898.5,519.1 L898.7,518.1 L898.9,517.0 L899.1,515.9 L899.3,514.6 L899.5,513.2 L899.8,511.7 L900.0,510.3 L900.2,508.8 L900.4,507.5 L900.6,506.4 L900.8,505.7 L901.0,505.4 L901.3,505.6 L901.5,506.3 L901.7,507.6 L901.9,509.4 L902.1,511.6 L902.3,514.1 L902.5,516.7 L902.8,519.2 L903.0,521.5 L903.2,523.2 L903.4,524.4 L903.6,524.7 L903.8,524.5 L904.1,523.4 L904.3,521.6 L904.5,519.2 L904.7,516.3 L904.9,513.2 L905.1,510.1 L905.3,507.2 L905.6,504.7 L905.8,502.9 L906.0,502.5 L906.2,502.4 L906.4,502.5 L906.6,504.1 L906.9,506.5 L907.1,509.4 L907.3,512.7 L907.5,516.1 L907.7,519.2 L907.9,522.0 L908.1,524.2 L908.4,525.6 L908.6,526.2 L908.8,525.9 L909.0,524.8 L909.2,523.0 L909.4,520.7 L909.6,518.0 L909.9,515.2 L910.1,512.4 L910.3,509.8 L910.5,507.6 L910.7,505.8 L910.9,504.6 L911.2,504.0 L911.4,503.8 L911.6,504.2 L911.8,505.1 L912.0,506.3 L912.2,507.8 L912.4,509.6 L912.7,511.5 L912.9,513.5 L913.1,515.5 L913.3,517.3 L913.5,519.0 L913.7,520.3 L913.9,521.4 L914.2,522.0 L914.4,522.3 L914.6,522.1 L914.8,521.6 L915.0,520.6 L915.2,519.5 L915.5,518.1 L915.7,516.7 L915.9,515.3 L916.1,514.0 L916.3,512.9 L916.5,511.9 L916.7,511.0 L917.0,510.1 L917.2,509.3 L917.4,508.4 L917.6,507.5 L917.8,506.6 L918.0,505.8 L918.2,505.3 L918.5,505.2 L918.7,505.6 L918.9,506.6 L919.1,508.3 L919.3,510.6 L919.5,513.5 L919.8,516.8 L920.0,520.1 L920.2,523.2 L920.4,525.9 L920.6,527.7 L920.8,528.5 L921.0,528.2 L921.3,526.8 L921.5,524.1 L921.7,520.4 L921.9,515.8 L922.1,510.8 L922.3,505.7 L922.5,501.0 L922.8,497.3 L923.0,495.9 L923.2,495.6 L923.4,495.4 L923.6,497.3 L923.8,501.5 L924.1,507.0 L924.3,513.3 L924.5,519.9 L924.7,526.1 L924.9,531.5 L925.1,534.8 L925.3,535.1 L925.6,535.3 L925.8,535.6 L926.0,531.9 L926.2,526.4 L926.4,519.6 L926.6,512.4 L926.8,505.5 L927.1,499.6 L927.3,495.0 L927.5,492.5 L927.7,492.7 L927.9,492.9 L928.1,495.4 L928.4,499.6 L928.6,504.8 L928.8,510.5 L929.0,516.1 L929.2,521.2 L929.4,525.4 L929.6,528.3 L929.9,529.8 L930.1,529.9 L930.3,528.7 L930.5,526.6 L930.7,523.7 L930.9,520.4 L931.1,517.2 L931.4,514.3 L931.6,512.0 L931.8,510.3 L932.0,509.4 L932.2,509.0 L932.4,509.1 L932.7,509.3 L932.9,509.4 L933.1,509.3 L933.3,508.9 L933.5,508.2 L933.7,507.4 L933.9,506.7 L934.2,506.2 L934.4,506.3 L934.6,507.0 L934.8,508.3 L935.0,510.3 L935.2,512.8 L935.4,515.5 L935.7,518.3 L935.9,520.9 L936.1,523.0 L936.3,524.3 L936.5,524.8 L936.7,524.3 L937.0,523.0 L937.2,520.8 L937.4,518.1 L937.6,515.1 L937.8,512.0 L938.0,509.2 L938.2,506.9 L938.5,505.3 L938.7,505.0 L938.9,505.3 L939.1,505.5 L939.3,507.2 L939.5,509.3 L939.8,511.7 L940.0,514.2 L940.2,516.4 L940.4,518.3 L940.6,519.9 L940.8,520.9 L941.0,521.0 L941.3,521.0 L941.5,520.5 L941.7,519.1 L941.9,517.2 L942.1,515.0 L942.3,512.8 L942.5,510.7 L942.8,508.9 L943.0,507.6 L943.2,506.9 L943.4,506.8 L943.6,507.4 L943.8,508.5 L944.1,510.0 L944.3,511.8 L944.5,513.7 L944.7,515.5 L944.9,517.1 L945.1,518.3 L945.3,519.0 L945.6,519.2 L945.8,519.0 L946.0,518.4 L946.2,517.6 L946.4,516.6 L946.6,515.7 L946.8,514.8 L947.1,514.2 L947.3,513.9 L947.5,513.8 L947.7,513.8 L947.9,513.8 L948.1,513.8 L948.4,513.5 L948.6,513.0 L948.8,512.3 L949.0,511.3 L949.2,510.3 L949.4,509.3 L949.6,508.5 L949.9,508.1 L950.1,508.2 L950.3,508.9 L950.5,510.2 L950.7,512.1 L950.9,514.4 L951.1,517.0 L951.4,519.5 L951.6,521.8 L951.8,523.5 L952.0,524.5 L952.2,524.5 L952.4,523.5 L952.7,521.5 L952.9,518.6 L953.1,515.1 L953.3,511.2 L953.5,507.4 L953.7,504.0 L953.9,501.4 L954.2,499.9 L954.4,499.7 L954.6,500.8 L954.8,503.2 L955.0,506.8 L955.2,511.3 L955.4,516.1 L955.7,520.9 L955.9,525.2 L956.1,528.6 L956.3,530.2 L956.5,530.4 L956.7,530.0 L957.0,527.3 L957.2,523.3 L957.4,518.2 L957.6,512.6 L957.8,507.1 L958.0,502.1 L958.2,498.1 L958.5,495.6 L958.7,495.3 L958.9,495.9 L959.1,498.8 L959.3,503.1 L959.5,508.6 L959.7,514.6 L960.0,520.6 L960.2,526.0 L960.4,530.4 L960.6,533.1 L960.8,534.0 L961.0,533.0 L961.3,530.2 L961.5,525.7 L961.7,520.1 L961.9,513.9 L962.1,507.6 L962.3,501.9 L962.5,497.4 L962.8,494.5 L963.0,493.5 L963.2,494.5 L963.4,497.3 L963.6,501.9 L963.8,507.6 L964.0,514.0 L964.3,520.4 L964.5,526.1 L964.7,530.6 L964.9,533.4 L965.1,534.4 L965.3,533.4 L965.6,530.5 L965.8,526.1 L966.0,520.5 L966.2,514.3 L966.4,508.1 L966.6,502.4 L966.8,497.8 L967.1,494.8 L967.3,493.5 L967.5,494.1 L967.7,496.5 L967.9,500.5 L968.1,505.7 L968.3,511.7 L968.6,517.9 L968.8,523.8 L969.0,528.9 L969.2,532.7 L969.4,534.9 L969.6,535.3 L969.9,533.9 L970.1,530.8 L970.3,526.3 L970.5,520.7 L970.7,514.5 L970.9,508.2 L971.1,502.3 L971.4,497.3 L971.6,493.6 L971.8,491.6 L972.0,491.4 L972.2,493.0 L972.4,496.3 L972.6,501.1 L972.9,507.0 L973.1,513.6 L973.3,520.3 L973.5,526.5 L973.7,531.8 L973.9,535.7 L974.2,537.9 L974.4,538.1 L974.6,536.3 L974.8,532.7 L975.0,527.4 L975.2,521.0 L975.4,514.0 L975.7,506.9 L975.9,500.4 L976.1,495.0 L976.3,491.1 L976.5,489.2 L976.7,489.4 L977.0,491.7 L977.2,495.9 L977.4,501.6 L977.6,508.4 L977.8,515.7 L978.0,522.8 L978.2,529.2 L978.5,534.3 L978.7,537.6 L978.9,538.8 L979.1,537.8 L979.3,534.8 L979.5,529.9 L979.7,523.6 L980.0,516.5 L980.2,509.2 L980.4,502.4 L980.6,496.6 L980.8,492.4 L981.0,490.1 L981.3,490.0 L981.5,492.1 L981.7,496.1 L981.9,501.8 L982.1,508.4 L982.3,515.6 L982.5,522.5 L982.8,528.6 L983.0,533.3 L983.2,536.2 L983.4,537.1 L983.6,535.8 L983.8,532.5 L984.0,527.5 L984.3,521.3 L984.5,514.5 L984.7,507.8 L984.9,501.7 L985.1,496.8 L985.3,493.5 L985.6,492.3 L985.8,493.1 L986.0,495.8 L986.2,500.2 L986.4,505.7 L986.6,511.9 L986.8,518.0 L987.1,523.5 L987.3,528.0 L987.5,531.0 L987.7,532.3 L987.9,531.9 L988.1,529.9 L988.3,526.6 L988.6,522.4 L988.8,517.8 L989.0,513.2 L989.2,509.1 L989.4,505.8 L989.6,503.6 L989.9,502.5 L990.1,502.5 L990.3,503.3 L990.5,504.7 L990.7,506.3 L990.9,507.9 L991.1,509.2 L991.4,509.9 L991.6,510.2 L991.8,510.2 L992.0,510.2 L992.2,510.4 L992.4,511.2 L992.6,512.8 L992.9,515.1 L993.1,518.0 L993.3,521.2 L993.5,524.5 L993.7,527.4 L993.9,529.4 L994.2,530.3 L994.4,529.7 L994.6,527.7 L994.8,524.3 L995.0,519.8 L995.2,514.5 L995.4,508.9 L995.7,503.5 L995.9,498.9 L996.1,495.5 L996.3,495.4 L996.5,495.5 L996.7,495.6 L996.9,499.0 L997.2,503.8 L997.4,509.5 L997.6,515.6 L997.8,521.5 L998.0,526.7 L998.2,530.7 L998.5,531.5 L998.7,531.4 L998.9,531.3 L999.1,530.1 L999.3,526.1 L999.5,521.2 L999.7,515.8 L1000.0,510.6 L1000.2,505.9 L1000.4,502.2 L1000.6,499.7 L1000.8,498.7 L1001.0,499.1 L1001.2,500.7 L1001.5,503.3 L1001.7,506.5 L1001.9,509.9 L1002.1,513.0 L1002.3,515.6 L1002.5,517.4 L1002.8,518.2 L1003.0,518.1 L1003.2,517.4 L1003.4,516.3 L1003.6,515.2 L1003.8,514.7 L1004.0,514.9 L1004.3,515.9 L1004.5,517.5 L1004.7,519.5 L1004.9,521.4 L1005.1,523.0 L1005.3,524.1 L1005.5,524.3 L1005.8,523.6 L1006.0,521.9 L1006.2,519.5 L1006.4,516.4 L1006.6,513.0 L1006.8,509.5 L1007.1,506.3 L1007.3,503.7 L1007.5,501.8 L1007.7,500.9 L1007.9,501.0 L1008.1,502.0 L1008.3,504.0 L1008.6,506.7 L1008.8,509.9 L1009.0,513.3 L1009.2,516.6 L1009.4,519.8 L1009.6,522.4 L1009.9,524.3 L1010.1,525.5 L1010.3,525.9 L1010.5,525.5 L1010.7,524.4 L1010.9,522.7 L1011.1,520.5 L1011.4,518.1 L1011.6,515.5 L1011.8,513.0 L1012.0,510.7 L1012.2,508.7 L1012.4,507.0 L1012.6,505.8 L1012.9,505.1 L1013.1,504.8 L1013.3,504.9 L1013.5,505.5 L1013.7,506.3 L1013.9,507.6 L1014.2,509.0 L1014.4,510.7 L1014.6,512.5 L1014.8,514.4 L1015.0,516.3 L1015.2,518.1 L1015.4,519.8 L1015.7,521.2 L1015.9,522.3 L1016.1,522.9 L1016.3,523.1 L1016.5,522.7 L1016.7,521.9 L1016.9,520.5 L1017.2,518.6 L1017.4,516.5 L1017.6,514.1 L1017.8,511.7 L1018.0,509.3 L1018.2,507.3 L1018.5,505.7 L1018.7,504.6 L1018.9,504.2 L1019.1,504.5 L1019.3,505.4 L1019.5,506.9 L1019.7,508.9 L1020.0,511.3 L1020.2,513.8 L1020.4,516.3 L1020.6,518.6 L1020.8,520.6 L1021.0,522.1 L1021.2,522.8 L1021.5,522.6 L1021.7,522.5 L1021.9,521.5 L1022.1,519.8 L1022.3,517.8 L1022.5,515.5 L1022.8,513.2 L1023.0,511.0 L1023.2,509.1 L1023.4,507.6 L1023.6,506.7 L1023.8,506.7 L1024.0,506.8 L1024.3,507.3 L1024.5,508.5 L1024.7,510.1 L1024.9,511.9 L1025.1,513.7 L1025.3,515.5 L1025.5,517.1 L1025.8,518.3 L1026.0,519.1 L1026.2,519.6 L1026.4,519.5 L1026.6,519.3 L1026.8,518.8 L1027.1,517.8 L1027.3,516.7 L1027.5,515.3 L1027.7,513.9 L1027.9,512.6 L1028.1,511.4 L1028.3,510.4 L1028.6,509.6 L1028.8,509.2 L1029.0,509.0 L1029.2,509.0 L1029.4,509.2 L1029.6,509.5 L1029.8,510.0 L1030.1,510.6 L1030.3,511.2 L1030.5,512.0 L1030.7,512.8 L1030.9,513.8 L1031.1,514.9 L1031.4,516.1 L1031.6,517.4 L1031.8,518.7 L1032.0,519.9 L1032.2,520.8 L1032.4,521.4 L1032.6,521.5 L1032.9,521.2 L1033.1,520.2 L1033.3,518.7 L1033.5,516.7 L1033.7,514.4 L1033.9,512.0 L1034.1,509.6 L1034.4,507.5 L1034.6,505.8 L1034.8,504.7 L1035.0,504.3 L1035.2,504.7 L1035.4,505.8 L1035.7,507.6 L1035.9,509.9 L1036.1,512.6 L1036.3,515.4 L1036.5,518.2 L1036.7,520.6 L1036.9,522.5 L1037.2,523.8 L1037.4,524.2 L1037.6,523.8 L1037.8,522.6 L1038.0,520.7 L1038.2,518.3 L1038.4,515.5 L1038.7,512.5 L1038.9,509.7 L1039.1,507.3 L1039.3,505.4 L1039.5,504.2 L1039.7,503.8 L1040.0,504.2 L1040.2,505.5 L1040.4,507.4 L1040.6,509.8 L1040.8,512.6 L1041.0,515.5 L1041.2,518.2 L1041.5,520.6 L1041.7,522.5 L1041.9,523.7 L1042.1,524.0 L1042.3,523.6 L1042.5,522.4 L1042.7,520.6 L1043.0,518.2 L1043.2,515.4 L1043.4,512.6 L1043.6,509.8 L1043.8,507.4 L1044.0,505.4 L1044.3,504.2 L1044.5,503.7 L1044.7,504.0 L1044.9,505.0 L1045.1,506.8 L1045.3,509.2 L1045.5,511.9 L1045.8,514.9 L1046.0,517.7 L1046.2,520.3 L1046.4,522.3 L1046.6,523.7 L1046.8,524.4 L1047.1,524.2 L1047.3,523.3 L1047.5,521.7 L1047.7,519.5 L1047.9,517.0 L1048.1,514.2 L1048.3,511.5 L1048.6,509.0 L1048.8,506.9 L1049.0,505.3 L1049.2,504.4 L1049.4,504.1 L1049.6,504.6 L1049.8,505.7 L1050.1,507.4 L1050.3,509.5 L1050.5,511.8 L1050.7,514.2 L1050.9,516.5 L1051.1,518.7 L1051.4,520.4 L1051.6,521.7 L1051.8,522.5 L1052.0,522.7 L1052.2,522.4 L1052.4,521.6 L1052.6,520.3 L1052.9,518.7 L1053.1,516.9 L1053.3,514.9 L1053.5,513.0 L1053.7,511.1 L1053.9,509.5 L1054.1,508.1 L1054.4,507.1 L1054.6,506.6 L1054.8,506.4 L1055.0,506.8 L1055.2,507.5 L1055.4,508.6 L1055.7,510.0 L1055.9,511.5 L1056.1,513.2 L1056.3,514.8 L1056.5,516.3 L1056.7,517.6 L1056.9,518.6 L1057.2,519.4 L1057.4,519.8 L1057.6,519.9 L1057.8,519.7 L1058.0,519.3 L1058.2,518.6 L1058.4,517.9 L1058.7,517.0 L1058.9,516.0 L1059.1,515.0 L1059.3,514.0 L1059.5,513.0 L1059.7,512.1 L1060.0,511.2 L1060.2,510.4 L1060.4,509.7 L1060.6,509.3 L1060.8,509.0 L1061.0,509.0 L1061.2,509.2 L1061.5,509.7 L1061.7,510.5 L1061.9,511.5 L1062.1,512.7 L1062.3,514.0 L1062.5,515.3 L1062.7,516.5 L1063.0,517.5 L1063.2,518.3 L1063.4,518.8 L1063.6,518.9 L1063.8,518.7 L1064.0,518.1 L1064.3,517.2 L1064.5,516.2 L1064.7,514.9 L1064.9,513.7 L1065.1,512.5 L1065.3,511.4 L1065.5,510.7 L1065.8,510.2 L1066.0,510.2 L1066.2,510.3 L1066.4,510.6 L1066.6,511.3 L1066.8,512.2 L1067.0,513.1 L1067.3,514.0 L1067.5,514.9 L1067.7,515.8 L1067.9,516.6 L1068.1,517.1 L1068.3,517.2 L1068.6,517.3 L1068.8,517.3 L1069.0,516.8 L1069.2,516.0 L1069.4,515.0 L1069.6,513.9 L1069.8,512.8 L1070.1,511.7 L1070.3,510.8 L1070.5,510.2 L1070.7,510.1 L1070.9,510.0 L1071.1,510.2 L1071.3,510.8 L1071.6,511.8 L1071.8,512.9 L1072.0,514.2 L1072.2,515.4 L1072.4,516.5 L1072.6,517.4 L1072.9,518.0 L1073.1,518.2 L1073.3,518.1 L1073.5,517.7 L1073.7,516.9 L1073.9,515.9 L1074.1,514.8 L1074.4,513.7 L1074.6,512.7 L1074.8,511.8 L1075.0,511.3 L1075.2,511.0 L1075.4,511.1 L1075.6,511.4 L1075.9,511.9 L1076.1,512.6 L1076.3,513.2 L1076.5,513.8 L1076.7,514.1 L1076.9,514.1 L1077.2,513.8 L1077.4,513.2 L1077.6,512.7 L1077.8,512.2 L1078.0,511.8 L1078.2,511.7 L1078.4,511.9 L1078.7,512.4 L1078.9,513.2 L1079.1,514.3 L1079.3,515.4 L1079.5,516.5 L1079.7,517.5 L1080.0,518.3 L1080.2,518.7 L1080.4,518.7 L1080.6,518.4 L1080.8,517.6 L1081.0,516.4 L1081.2,515.0 L1081.5,513.5 L1081.7,512.0 L1081.9,510.6 L1082.1,509.4 L1082.3,508.7 L1082.5,508.4 L1082.7,508.4 L1083.0,509.0 L1083.2,509.9 L1083.4,511.2 L1083.6,512.7 L1083.8,514.3 L1084.0,515.8 L1084.3,517.2 L1084.5,518.3 L1084.7,519.1 L1084.9,519.5 L1085.1,519.5 L1085.3,519.0 L1085.5,518.3 L1085.8,517.2 L1086.0,516.0 L1086.2,514.6 L1086.4,513.2 L1086.6,511.9 L1086.8,510.8 L1087.0,509.9 L1087.3,509.3 L1087.5,509.0 L1087.7,508.9 L1087.9,509.2 L1088.1,509.8 L1088.3,510.7 L1088.6,511.8 L1088.8,513.0 L1089.0,514.3 L1089.2,515.6 L1089.4,516.8 L1089.6,517.8 L1089.8,518.6 L1090.1,519.1 L1090.3,519.3 L1090.5,519.0 L1090.7,518.4 L1090.9,517.4 L1091.1,516.2 L1091.3,514.7 L1091.6,513.2 L1091.8,511.6 L1092.0,510.3 L1092.2,509.2 L1092.4,508.4 L1092.6,508.2 L1092.9,508.4 L1093.1,509.1 L1093.3,510.2 L1093.5,511.7 L1093.7,513.4 L1093.9,515.1 L1094.1,516.8 L1094.4,518.3 L1094.6,519.3 L1094.8,519.9 L1095.0,520.0 L1095.2,519.5 L1095.4,518.5 L1095.6,517.1 L1095.9,515.4 L1096.1,513.6 L1096.3,511.8 L1096.5,510.2 L1096.7,509.0 L1096.9,508.2 L1097.2,508.0 L1097.4,508.4 L1097.6,509.3 L1097.8,510.7 L1098.0,512.3 L1098.2,514.1 L1098.4,515.9 L1098.7,517.4 L1098.9,518.6 L1099.1,519.2 L1099.3,519.3 L1099.5,518.8 L1099.7,517.8 L1099.9,516.4 L1100.2,514.8 L1100.4,513.1 L1100.6,511.5 L1100.8,510.3 L1101.0,509.6 L1101.2,509.4 L1101.5,509.8 L1101.7,510.7 L1101.9,512.1 L1102.1,513.7 L1102.3,515.3 L1102.5,516.8 L1102.7,517.8 L1103.0,518.3 L1103.2,518.3 L1103.4,517.6 L1103.6,516.5 L1103.8,515.0 L1104.0,513.4 L1104.2,511.8 L1104.5,510.5 L1104.7,509.6 L1104.9,509.2 L1105.1,509.4 L1105.3,510.1 L1105.5,511.2 L1105.8,512.5 L1106.0,514.0 L1106.2,515.4 L1106.4,516.5 L1106.6,517.4 L1106.8,517.8 L1107.0,517.8 L1107.3,517.5 L1107.5,517.0 L1107.7,516.2 L1107.9,515.5 L1108.1,514.9 L1108.3,514.4 L1108.5,514.1 L1108.8,513.9 L1109.0,513.9 L1109.2,513.9 L1109.4,513.8 L1109.6,513.5 L1109.8,513.0 L1110.1,512.3 L1110.3,511.6 L1110.5,511.0 L1110.7,510.4 L1110.9,510.2 L1111.1,510.2 L1111.3,510.6 L1111.6,511.4 L1111.8,512.5 L1112.0,513.8 L1112.2,515.2 L1112.4,516.5 L1112.6,517.7 L1112.9,518.5 L1113.1,519.0 L1113.3,518.9 L1113.5,518.4 L1113.7,517.5 L1113.9,516.2 L1114.1,514.6 L1114.4,513.0 L1114.6,511.5 L1114.8,510.2 L1115.0,509.3 L1115.2,508.8 L1115.4,508.8 L1115.6,509.3 L1115.9,510.3 L1116.1,511.6 L1116.3,513.1 L1116.5,514.7 L1116.7,516.2 L1116.9,517.5 L1117.2,518.5 L1117.4,519.0 L1117.6,519.1 L1117.8,518.7 L1118.0,517.8 L1118.2,516.6 L1118.4,515.1 L1118.7,513.5 L1118.9,512.0 L1119.1,510.6 L1119.3,509.5 L1119.5,508.9 L1119.7,508.7 L1119.9,509.0 L1120.2,509.8 L1120.4,511.0 L1120.6,512.5 L1120.8,514.1 L1121.0,515.8 L1121.2,517.2 L1121.5,518.4 L1121.7,519.1 L1121.9,519.2 L1122.1,519.1 L1122.3,518.4 L1122.5,517.2 L1122.7,515.8 L1123.0,514.1 L1123.2,512.5 L1123.4,511.0 L1123.6,509.7 L1123.8,508.9 L1124.0,508.9 L1124.2,508.9 L1124.5,509.4 L1124.7,510.5 L1124.9,511.9 L1125.1,513.5 L1125.3,515.1 L1125.5,516.6 L1125.8,517.8 L1126.0,518.6 L1126.2,518.9 L1126.4,518.9 L1126.6,518.3 L1126.8,517.3 L1127.0,516.1 L1127.3,514.7 L1127.5,513.3 L1127.7,512.0 L1127.9,510.9 L1128.1,510.2 L1128.3,509.9 L1128.5,510.1 L1128.8,510.6 L1129.0,511.4 L1129.2,512.4 L1129.4,513.6 L1129.6,514.6 L1129.8,515.5 L1130.1,516.2 L1130.3,516.5 L1130.5,516.4 L1130.7,516.0 L1130.9,515.3 L1131.1,514.4 L1131.3,513.6 L1131.6,512.9 L1131.8,512.4 L1132.0,512.3 L1132.2,512.6 L1132.4,513.2 L1132.6,513.9 L1132.8,514.8 L1133.1,515.7 L1133.3,516.3 L1133.5,516.7 L1133.7,516.7 L1133.9,516.4 L1134.1,515.8 L1134.4,514.9 L1134.6,513.9 L1134.8,512.9 L1135.0,511.9 L1135.2,511.1 L1135.4,510.5 L1135.6,510.3 L1135.9,510.5 L1136.1,511.0 L1136.3,511.8 L1136.5,512.8 L1136.7,514.0 L1136.9,515.1 L1137.1,516.1 L1137.4,517.0 L1137.6,517.5 L1137.8,517.4 L1138.0,517.4 L1138.2,517.1 L1138.4,516.4 L1138.7,515.5 L1138.9,514.4 L1139.1,513.3 L1139.3,512.2 L1139.5,511.3 L1139.7,510.6 L1139.9,510.5 L1140.2,510.5 L1140.4,510.5 L1140.6,511.1 L1140.8,512.0 L1141.0,513.1 L1141.2,514.2 L1141.4,515.3 L1141.7,516.2 L1141.9,517.0 L1142.1,517.4 L1142.3,517.6 L1142.5,517.4 L1142.7,516.8 L1143.0,516.1 L1143.2,515.1 L1143.4,514.1 L1143.6,513.0 L1143.8,512.1 L1144.0,511.4 L1144.2,511.0 L1144.5,510.9 L1144.7,511.1 L1144.9,511.6 L1145.1,512.3 L1145.3,513.2 L1145.5,514.1 L1145.7,515.0 L1146.0,515.8 L1146.2,516.3 L1146.4,516.5 L1146.6,516.5 L1146.8,516.1 L1147.0,515.4 L1147.3,514.6 L1147.5,513.8 L1147.7,512.9 L1147.9,512.2 L1148.1,511.7 L1148.3,511.6 L1148.5,511.7 L1148.8,512.2 L1149.0,512.9 L1149.2,513.7 L1149.4,514.6 L1149.6,515.5 L1149.8,516.1 L1150.1,516.5 L1150.3,516.6 L1150.5,516.3 L1150.7,515.8 L1150.9,515.0 L1151.1,514.0 L1151.3,513.0 L1151.6,512.2 L1151.8,511.5 L1152.0,511.1 L1152.2,511.1 L1152.4,511.4 L1152.6,512.0 L1152.8,512.9 L1153.1,514.0 L1153.3,515.1 L1153.5,516.1 L1153.7,516.8 L1153.9,517.3 L1154.1,517.3 L1154.4,517.0 L1154.6,516.3 L1154.8,515.4 L1155.0,514.2 L1155.2,513.0 L1155.4,511.9 L1155.6,511.0 L1155.9,510.4 L1156.1,510.1 L1156.3,510.3 L1156.5,510.8 L1156.7,511.7 L1156.9,512.8 L1157.1,514.0 L1157.4,515.2 L1157.6,516.4 L1157.8,517.3 L1158.0,517.9 L1158.2,517.9 L1158.4,517.9 L1158.7,517.4 L1158.9,516.5 L1159.1,515.4 L1159.3,514.2 L1159.5,512.9 L1159.7,511.7 L1159.9,510.8 L1160.2,510.1 L1160.4,510.1 L1160.6,510.1 L1160.8,510.4 L1161.0,511.2 L1161.2,512.2 L1161.4,513.4 L1161.7,514.6 L1161.9,515.8 L1162.1,516.7 L1162.3,517.3 L1162.5,517.6 L1162.7,517.6 L1163.0,517.2 L1163.2,516.6 L1163.4,515.7 L1163.6,514.7 L1163.8,513.7 L1164.0,512.8 L1164.2,512.1 L1164.5,511.6 L1164.7,511.4 L1164.9,511.5 L1165.1,511.9 L1165.3,512.5 L1165.5,513.1 L1165.7,513.8 L1166.0,514.5 L1166.2,514.9 L1166.4,515.1 L1166.6,515.0 L1166.8,514.7 L1167.0,514.2 L1167.3,513.6 L1167.5,513.0 L1167.7,512.6 L1167.9,512.5 L1168.1,512.6 L1168.3,512.9 L1168.5,513.5 L1168.8,514.2 L1169.0,515.0 L1169.2,515.7 L1169.4,516.3 L1169.6,516.6 L1169.8,516.7 L1170.0,516.6 L1170.3,516.1 L1170.5,515.4 L1170.7,514.5 L1170.9,513.6 L1171.1,512.6 L1171.3,511.8 L1171.6,511.1 L1171.8,510.7 L1172.0,510.6 L1172.2,510.8 L1172.4,511.3 L1172.6,512.0 L1172.8,513.0 L1173.1,514.0 L1173.3,515.1 L1173.5,516.0 L1173.7,516.8 L1173.9,517.3 L1174.1,517.2 L1174.3,517.2 L1174.6,517.1 L1174.8,516.4 L1175.0,515.5 L1175.2,514.4 L1175.4,513.4 L1175.6,512.4 L1175.9,511.5 L1176.1,510.9 L1176.3,510.8 L1176.5,510.8 L1176.7,510.8 L1176.9,511.3 L1177.1,512.1 L1177.4,513.0 L1177.6,513.9 L1177.8,514.9 L1178.0,515.7 L1178.2,516.4 L1178.4,516.8 L1178.6,517.0 L1178.9,517.0 L1179.1,516.7 L1179.3,516.1 L1179.5,515.5 L1179.7,514.6 L1179.9,513.8 L1180.2,513.0 L1180.4,512.2 L1180.6,511.7 L1180.8,511.5" stroke="#0072BD" stroke-width="2" fill="none" stroke-linejoin="round"/>
<path d="M611.4 550.4v-6.5M611.4 470.4v6.5M697.4 550.4v-6.5M697.4 470.4v6.5M783.4 550.4v-6.5M783.4 470.4v6.5M869.4 550.4v-6.5M869.4 470.4v6.5M955.4 550.4v-6.5M955.4 470.4v6.5M1041.5 550.4v-6.5M1041.5 470.4v6.5M1127.5 550.4v-6.5M1127.5 470.4v6.5M546.9 550.4v-3.3M546.9 470.4v3.3M568.4 550.4v-3.3M568.4 470.4v3.3M589.9 550.4v-3.3M589.9 470.4v3.3M632.9 550.4v-3.3M632.9 470.4v3.3M654.4 550.4v-3.3M654.4 470.4v3.3M675.9 550.4v-3.3M675.9 470.4v3.3M718.9 550.4v-3.3M718.9 470.4v3.3M740.4 550.4v-3.3M740.4 470.4v3.3M761.9 550.4v-3.3M761.9 470.4v3.3M804.9 550.4v-3.3M804.9 470.4v3.3M826.4 550.4v-3.3M826.4 470.4v3.3M847.9 550.4v-3.3M847.9 470.4v3.3M890.9 550.4v-3.3M890.9 470.4v3.3M912.4 550.4v-3.3M912.4 470.4v3.3M933.9 550.4v-3.3M933.9 470.4v3.3M977.0 550.4v-3.3M977.0 470.4v3.3M998.5 550.4v-3.3M998.5 470.4v3.3M1020.0 550.4v-3.3M1020.0 470.4v3.3M1063.0 550.4v-3.3M1063.0 470.4v3.3M1084.5 550.4v-3.3M1084.5 470.4v3.3M1106.0 550.4v-3.3M1106.0 470.4v3.3M1149.0 550.4v-3.3M1149.0 470.4v3.3M1170.5 550.4v-3.3M1170.5 470.4v3.3M525.6 479.1h3.3M1180.8 479.1h-3.3M525.6 496.5h3.3M1180.8 496.5h-3.3M525.6 514.0h3.3M1180.8 514.0h-3.3M525.6 531.4h3.3M1180.8 531.4h-3.3M525.6 548.8h3.3M1180.8 548.8h-3.3" stroke="#000" stroke-width="1.1" fill="none"/>
<rect x="525.6" y="470.4" width="655.2" height="80.0" fill="none" stroke="#000" stroke-width="1.3"/>
<text x="520" y="517.9" text-anchor="end">0</text>
<text x="524.7" y="466.6">x10<tspan dy="-6">3</tspan></text>
<text transform="translate(503,510) rotate(-90)" text-anchor="middle">Level 4</text>
<line x1="485" x2="1200" y1="561.5" y2="561.5" stroke="#8c8c8c" stroke-width="1"/>
<rect x="532.5" y="584.5" width="648.3" height="100.7" fill="#fff"/>
<line x1="617.5" x2="617.5" y1="584.5" y2="685.2" stroke="#c2c2c2" stroke-width="1"/>
<line x1="702.5" x2="702.5" y1="584.5" y2="685.2" stroke="#c2c2c2" stroke-width="1"/>
<line x1="787.5" x2="787.5" y1="584.5" y2="685.2" stroke="#c2c2c2" stroke-width="1"/>
<line x1="872.5" x2="872.5" y1="584.5" y2="685.2" stroke="#c2c2c2" stroke-width="1"/>
<line x1="957.5" x2="957.5" y1="584.5" y2="685.2" stroke="#c2c2c2" stroke-width="1"/>
<line x1="1042.5" x2="1042.5" y1="584.5" y2="685.2" stroke="#c2c2c2" stroke-width="1"/>
<line x1="1128.5" x2="1128.5" y1="584.5" y2="685.2" stroke="#c2c2c2" stroke-width="1"/>
<line x1="532.5" x2="1180.8" y1="639.5" y2="639.5" stroke="#c2c2c2" stroke-width="1"/>
<path d="M532.5,636.1 L533.4,636.1 L534.2,636.1 L535.1,636.1 L535.9,636.1 L536.8,636.1 L537.6,636.1 L538.5,636.1 L539.3,636.1 L540.2,636.1 L541.0,636.1 L541.9,636.1 L542.7,636.1 L543.6,636.1 L544.4,636.1 L545.3,636.1 L546.1,636.1 L547.0,636.1 L547.8,636.1 L548.7,636.1 L549.5,636.1 L550.4,636.1 L551.2,636.1 L552.1,636.1 L552.9,636.1 L553.8,636.1 L554.6,636.1 L555.5,636.1 L556.3,636.1 L557.2,636.1 L558.0,636.1 L558.9,636.1 L559.7,636.1 L560.6,636.1 L561.4,636.1 L562.3,636.1 L563.1,636.1 L564.0,636.1 L564.8,636.1 L565.7,636.1 L566.5,636.1 L567.4,636.1 L568.2,636.1 L569.1,636.1 L569.9,636.1 L570.8,636.1 L571.6,636.1 L572.5,636.1 L573.4,636.1 L574.2,636.1 L575.1,636.1 L575.9,636.1 L576.8,636.1 L577.6,636.1 L578.5,636.1 L579.3,636.1 L580.2,636.1 L581.0,636.1 L581.9,636.1 L582.7,636.1 L583.6,636.1 L584.4,636.1 L585.3,636.1 L586.1,636.1 L587.0,636.1 L587.8,636.1 L588.7,636.1 L589.5,636.1 L590.4,636.1 L591.2,636.1 L592.1,636.1 L592.9,636.1 L593.8,636.1 L594.6,636.1 L595.5,636.1 L596.3,636.1 L597.2,636.1 L598.0,636.1 L598.9,636.1 L599.7,636.1 L600.6,636.1 L601.4,636.1 L602.3,636.1 L603.1,636.1 L604.0,636.1 L604.8,636.1 L605.7,636.1 L606.5,636.1 L607.4,636.1 L608.2,636.1 L609.1,636.1 L609.9,636.1 L610.8,636.1 L611.6,636.1 L612.5,636.1 L613.4,636.1 L614.2,636.1 L615.1,636.1 L615.9,636.1 L616.8,636.1 L617.6,636.1 L618.5,636.1 L619.3,636.1 L620.2,636.1 L621.0,636.1 L621.9,636.1 L622.7,636.1 L623.6,636.1 L624.4,636.1 L625.3,636.1 L626.1,636.1 L627.0,636.1 L627.8,636.1 L628.7,636.1 L629.5,636.1 L630.4,636.1 L631.2,636.1 L632.1,636.1 L632.9,636.1 L633.8,636.1 L634.6,636.1 L635.5,636.1 L636.3,636.1 L637.2,636.1 L638.0,636.1 L638.9,636.1 L639.7,636.1 L640.6,636.1 L641.4,636.1 L642.3,636.1 L643.1,636.1 L644.0,636.1 L644.8,636.1 L645.7,636.1 L646.5,636.1 L647.4,636.1 L648.2,636.1 L649.1,636.1 L649.9,636.1 L650.8,636.1 L651.6,636.1 L652.5,636.1 L653.4,636.1 L654.2,636.1 L655.1,636.1 L655.9,636.1 L656.8,636.1 L657.6,636.1 L658.5,636.1 L659.3,636.1 L660.2,636.1 L661.0,636.1 L661.9,636.1 L662.7,636.1 L663.6,636.1 L664.4,636.1 L665.3,636.1 L666.1,636.1 L667.0,636.1 L667.8,636.1 L668.7,636.1 L669.5,636.1 L670.4,636.1 L671.2,636.1 L672.1,636.1 L672.9,636.1 L673.8,636.1 L674.6,636.1 L675.5,636.1 L676.3,636.1 L677.2,636.1 L678.0,636.1 L678.9,636.1 L679.7,636.1 L680.6,636.1 L681.4,636.1 L682.3,636.1 L683.1,636.1 L684.0,636.1 L684.8,636.1 L685.7,636.1 L686.5,636.1 L687.4,636.1 L688.2,636.1 L689.1,636.1 L689.9,636.1 L690.8,636.1 L691.6,636.1 L692.5,636.1 L693.4,636.1 L694.2,636.1 L695.1,636.1 L695.9,636.1 L696.8,636.1 L697.6,636.1 L698.5,636.1 L699.3,636.1 L700.2,636.1 L701.0,636.1 L701.9,636.1 L702.7,636.1 L703.6,636.1 L704.4,636.1 L705.3,636.1 L706.1,636.1 L707.0,636.1 L707.8,636.1 L708.7,636.1 L709.5,636.1 L710.4,636.1 L711.2,636.1 L712.1,636.1 L712.9,636.1 L713.8,636.1 L714.6,636.1 L715.5,636.1 L716.3,636.1 L717.2,636.1 L718.0,636.1 L718.9,636.1 L719.7,636.1 L720.6,636.1 L721.4,636.1 L722.3,636.1 L723.1,636.2 L724.0,636.2 L724.8,636.2 L725.7,636.2 L726.5,636.2 L727.4,636.2 L728.2,636.2 L729.1,636.3 L729.9,636.3 L730.8,636.3 L731.6,636.3 L732.5,636.3 L733.4,636.3 L734.2,636.4 L735.1,636.4 L735.9,636.4 L736.8,636.4 L737.6,636.4 L738.5,636.4 L739.3,636.5 L740.2,636.5 L741.0,636.5 L741.9,636.5 L742.7,636.5 L743.6,636.5 L744.4,636.5 L745.3,636.5 L746.1,636.5 L747.0,636.5 L747.8,636.5 L748.7,636.5 L749.5,636.5 L750.4,636.5 L751.2,636.4 L752.1,636.4 L752.9,636.4 L753.8,636.4 L754.6,636.4 L755.5,636.4 L756.3,636.4 L757.2,636.3 L758.0,636.3 L758.9,636.3 L759.7,636.3 L760.6,636.3 L761.4,636.2 L762.3,636.2 L763.1,636.2 L764.0,636.2 L764.8,636.2 L765.7,636.2 L766.5,636.2 L767.4,636.2 L768.2,636.1 L769.1,636.1 L769.9,636.1 L770.8,636.1 L771.6,636.1 L772.5,636.1 L773.4,636.1 L774.2,636.1 L775.1,636.1 L775.9,636.1 L776.8,636.1 L777.6,636.1 L778.5,636.1 L779.3,636.1 L780.2,636.1 L781.0,636.1 L781.9,636.1 L782.7,636.1 L783.6,636.1 L784.4,636.1 L785.3,636.1 L786.1,636.1 L787.0,636.1 L787.8,636.1 L788.7,636.1 L789.5,636.1 L790.4,636.1 L791.2,636.1 L792.1,636.1 L792.9,636.1 L793.8,636.1 L794.6,636.1 L795.5,636.1 L796.3,636.1 L797.2,636.1 L798.0,636.1 L798.9,636.1 L799.7,636.1 L800.6,636.1 L801.4,636.1 L802.3,636.1 L803.1,636.1 L804.0,636.1 L804.8,636.1 L805.7,636.1 L806.5,636.1 L807.4,636.1 L808.2,636.1 L809.1,636.1 L809.9,636.1 L810.8,636.1 L811.6,636.1 L812.5,636.1 L813.4,636.1 L814.2,636.1 L815.1,636.1 L815.9,636.1 L816.8,636.1 L817.6,636.1 L818.5,636.1 L819.3,636.1 L820.2,636.1 L821.0,636.1 L821.9,636.1 L822.7,636.1 L823.6,636.1 L824.4,636.1 L825.3,636.1 L826.1,636.1 L827.0,636.1 L827.8,636.1 L828.7,636.1 L829.5,636.1 L830.4,636.1 L831.2,636.1 L832.1,636.1 L832.9,636.1 L833.8,636.1 L834.6,636.1 L835.5,636.1 L836.3,636.1 L837.2,636.1 L838.0,636.1 L838.9,636.1 L839.7,636.1 L840.6,636.1 L841.4,636.1 L842.3,636.1 L843.1,636.1 L844.0,636.1 L844.8,636.1 L845.7,636.1 L846.5,636.1 L847.4,636.1 L848.2,636.1 L849.1,636.1 L849.9,636.1 L850.8,636.1 L851.6,636.1 L852.5,636.1 L853.4,636.1 L854.2,636.1 L855.1,636.0 L855.9,636.0 L856.8,636.0 L857.6,636.0 L858.5,636.0 L859.3,636.0 L860.2,636.0 L861.0,636.0 L861.9,636.0 L862.7,635.9 L863.6,635.9 L864.4,635.9 L865.3,635.8 L866.1,635.8 L867.0,635.8 L867.8,635.7 L868.7,635.7 L869.5,635.7 L870.4,635.7 L871.2,635.6 L872.1,635.6 L872.9,635.7 L873.8,635.7 L874.6,635.7 L875.5,635.7 L876.3,635.8 L877.2,635.9 L878.0,635.9 L878.9,636.0 L879.7,636.1 L880.6,636.1 L881.4,636.2 L882.3,636.3 L883.1,636.4 L884.0,636.4 L884.8,636.4 L885.7,636.5 L886.5,636.5 L887.4,636.5 L888.2,636.4 L889.1,636.4 L889.9,636.3 L890.8,636.2 L891.7,636.1 L892.5,635.9 L893.4,635.8 L894.2,635.6 L895.1,635.4 L895.9,635.3 L896.8,635.1 L897.6,634.9 L898.5,634.8 L899.3,634.6 L900.2,634.6 L901.0,634.5 L901.9,634.5 L902.7,634.5 L903.6,634.6 L904.4,634.7 L905.3,634.8 L906.1,635.0 L907.0,635.3 L907.8,635.5 L908.7,635.8 L909.5,636.1 L910.4,636.4 L911.2,636.7 L912.1,637.0 L912.9,637.3 L913.8,637.5 L914.6,637.7 L915.5,637.9 L916.3,638.0 L917.2,638.0 L918.0,638.0 L918.9,637.9 L919.7,637.8 L920.6,637.6 L921.4,637.4 L922.3,637.2 L923.1,636.9 L924.0,636.6 L924.8,636.3 L925.7,635.9 L926.5,635.6 L927.4,635.4 L928.2,635.1 L929.1,634.8 L929.9,634.6 L930.8,634.5 L931.7,634.3 L932.5,634.3 L933.4,634.2 L934.2,634.2 L935.1,634.3 L935.9,634.3 L936.8,634.5 L937.6,634.6 L938.5,634.8 L939.3,635.0 L940.2,635.2 L941.0,635.4 L941.9,635.6 L942.7,635.8 L943.6,636.0 L944.4,636.2 L945.3,636.3 L946.1,636.5 L947.0,636.6 L947.8,636.7 L948.7,636.8 L949.5,636.8 L950.4,636.8 L951.2,636.8 L952.1,636.8 L952.9,636.8 L953.8,636.7 L954.6,636.7 L955.5,636.6 L956.3,636.5 L957.2,636.5 L958.0,636.4 L958.9,636.3 L959.7,636.3 L960.6,636.2 L961.4,636.2 L962.3,636.2 L963.1,636.1 L964.0,636.1 L964.8,636.1 L965.7,636.1 L966.5,636.1 L967.4,636.1 L968.2,636.1 L969.1,636.1 L969.9,636.1 L970.8,636.1 L971.7,636.1 L972.5,636.1 L973.4,636.1 L974.2,636.1 L975.1,636.1 L975.9,636.1 L976.8,636.1 L977.6,636.1 L978.5,636.1 L979.3,636.1 L980.2,636.1 L981.0,636.1 L981.9,636.1 L982.7,636.1 L983.6,636.1 L984.4,636.1 L985.3,636.1 L986.1,636.1 L987.0,636.1 L987.8,636.1 L988.7,636.1 L989.5,636.1 L990.4,636.1 L991.2,636.1 L992.1,636.1 L992.9,636.1 L993.8,636.1 L994.6,636.1 L995.5,636.1 L996.3,636.1 L997.2,636.1 L998.0,636.1 L998.9,636.1 L999.7,636.1 L1000.6,636.1 L1001.4,636.1 L1002.3,636.1 L1003.1,636.1 L1004.0,636.1 L1004.8,636.1 L1005.7,636.1 L1006.5,636.1 L1007.4,636.1 L1008.2,636.1 L1009.1,636.1 L1009.9,636.1 L1010.8,636.1 L1011.7,636.1 L1012.5,636.1 L1013.4,636.1 L1014.2,636.1 L1015.1,636.1 L1015.9,636.1 L1016.8,636.1 L1017.6,636.1 L1018.5,636.1 L1019.3,636.1 L1020.2,636.1 L1021.0,636.1 L1021.9,636.1 L1022.7,636.1 L1023.6,636.1 L1024.4,636.1 L1025.3,636.1 L1026.1,636.1 L1027.0,636.1 L1027.8,636.1 L1028.7,636.1 L1029.5,636.1 L1030.4,636.1 L1031.2,636.1 L1032.1,636.1 L1032.9,636.1 L1033.8,636.1 L1034.6,636.1 L1035.5,636.1 L1036.3,636.1 L1037.2,636.1 L1038.0,636.1 L1038.9,636.1 L1039.7,636.1 L1040.6,636.1 L1041.4,636.1 L1042.3,636.1 L1043.1,636.1 L1044.0,636.1 L1044.8,636.1 L1045.7,636.1 L1046.5,636.1 L1047.4,636.1 L1048.2,636.1 L1049.1,636.1 L1049.9,636.1 L1050.8,636.1 L1051.7,636.1 L1052.5,636.1 L1053.4,636.1 L1054.2,636.1 L1055.1,636.1 L1055.9,636.1 L1056.8,636.1 L1057.6,636.1 L1058.5,636.1 L1059.3,636.1 L1060.2,636.1 L1061.0,636.1 L1061.9,636.1 L1062.7,636.1 L1063.6,636.1 L1064.4,636.1 L1065.3,636.1 L1066.1,636.1 L1067.0,636.1 L1067.8,636.1 L1068.7,636.1 L1069.5,636.1 L1070.4,636.1 L1071.2,636.1 L1072.1,636.1 L1072.9,636.1 L1073.8,636.1 L1074.6,636.1 L1075.5,636.1 L1076.3,636.1 L1077.2,636.1 L1078.0,636.1 L1078.9,636.1 L1079.7,636.1 L1080.6,636.1 L1081.4,636.1 L1082.3,636.1 L1083.1,636.1 L1084.0,636.1 L1084.8,636.1 L1085.7,636.1 L1086.5,636.1 L1087.4,636.1 L1088.2,636.1 L1089.1,636.1 L1089.9,636.1 L1090.8,636.1 L1091.7,636.1 L1092.5,636.1 L1093.4,636.1 L1094.2,636.1 L1095.1,636.1 L1095.9,636.1 L1096.8,636.1 L1097.6,636.1 L1098.5,636.1 L1099.3,636.1 L1100.2,636.1 L1101.0,636.1 L1101.9,636.1 L1102.7,636.1 L1103.6,636.1 L1104.4,636.1 L1105.3,636.1 L1106.1,636.1 L1107.0,636.1 L1107.8,636.1 L1108.7,636.1 L1109.5,636.1 L1110.4,636.1 L1111.2,636.1 L1112.1,636.1 L1112.9,636.1 L1113.8,636.1 L1114.6,636.1 L1115.5,636.1 L1116.3,636.1 L1117.2,636.1 L1118.0,636.1 L1118.9,636.1 L1119.7,636.1 L1120.6,636.1 L1121.4,636.1 L1122.3,636.1 L1123.1,636.1 L1124.0,636.1 L1124.8,636.1 L1125.7,636.1 L1126.5,636.1 L1127.4,636.1 L1128.2,636.1 L1129.1,636.1 L1129.9,636.1 L1130.8,636.1 L1131.7,636.1 L1132.5,636.1 L1133.4,636.1 L1134.2,636.1 L1135.1,636.1 L1135.9,636.1 L1136.8,636.1 L1137.6,636.1 L1138.5,636.1 L1139.3,636.1 L1140.2,636.1 L1141.0,636.1 L1141.9,636.1 L1142.7,636.1 L1143.6,636.1 L1144.4,636.1 L1145.3,636.1 L1146.1,636.1 L1147.0,636.1 L1147.8,636.1 L1148.7,636.1 L1149.5,636.1 L1150.4,636.1 L1151.2,636.1 L1152.1,636.1 L1152.9,636.1 L1153.8,636.1 L1154.6,636.1 L1155.5,636.1 L1156.3,636.1 L1157.2,636.1 L1158.0,636.1 L1158.9,636.1 L1159.7,636.1 L1160.6,636.1 L1161.4,636.1 L1162.3,636.1 L1163.1,636.1 L1164.0,636.1 L1164.8,636.1 L1165.7,636.1 L1166.5,636.1 L1167.4,636.1 L1168.2,636.1 L1169.1,636.1 L1169.9,636.1 L1170.8,636.1 L1171.7,636.1 L1172.5,636.1 L1173.4,636.1 L1174.2,636.1 L1175.1,636.1 L1175.9,636.1 L1176.8,636.1 L1177.6,636.1 L1178.5,636.1 L1179.3,636.1 L1180.2,636.1" stroke="#0072BD" stroke-width="2" fill="none" stroke-linejoin="round"/>
<path d="M617.4 685.2v-6.5M617.4 584.5v6.5M702.5 685.2v-6.5M702.5 584.5v6.5M787.6 685.2v-6.5M787.6 584.5v6.5M872.7 685.2v-6.5M872.7 584.5v6.5M957.8 685.2v-6.5M957.8 584.5v6.5M1042.9 685.2v-6.5M1042.9 584.5v6.5M1128.0 685.2v-6.5M1128.0 584.5v6.5M553.6 685.2v-3.3M553.6 584.5v3.3M574.8 685.2v-3.3M574.8 584.5v3.3M596.1 685.2v-3.3M596.1 584.5v3.3M638.7 685.2v-3.3M638.7 584.5v3.3M659.9 685.2v-3.3M659.9 584.5v3.3M681.2 685.2v-3.3M681.2 584.5v3.3M723.8 685.2v-3.3M723.8 584.5v3.3M745.1 685.2v-3.3M745.1 584.5v3.3M766.3 685.2v-3.3M766.3 584.5v3.3M808.9 685.2v-3.3M808.9 584.5v3.3M830.2 685.2v-3.3M830.2 584.5v3.3M851.4 685.2v-3.3M851.4 584.5v3.3M894.0 685.2v-3.3M894.0 584.5v3.3M915.3 685.2v-3.3M915.3 584.5v3.3M936.5 685.2v-3.3M936.5 584.5v3.3M979.1 685.2v-3.3M979.1 584.5v3.3M1000.4 685.2v-3.3M1000.4 584.5v3.3M1021.7 685.2v-3.3M1021.7 584.5v3.3M1064.2 685.2v-3.3M1064.2 584.5v3.3M1085.5 685.2v-3.3M1085.5 584.5v3.3M1106.8 685.2v-3.3M1106.8 584.5v3.3M1149.3 685.2v-3.3M1149.3 584.5v3.3M1170.6 685.2v-3.3M1170.6 584.5v3.3M532.5 611.9h3.3M1180.8 611.9h-3.3M532.5 639.3h3.3M1180.8 639.3h-3.3M532.5 666.8h3.3M1180.8 666.8h-3.3" stroke="#000" stroke-width="1.1" fill="none"/>
<rect x="532.5" y="584.5" width="648.3" height="100.7" fill="none" stroke="#000" stroke-width="1.3"/>
<text x="617.4" y="701.7" text-anchor="middle">400</text>
<text x="702.5" y="701.7" text-anchor="middle">800</text>
<text x="787.6" y="701.7" text-anchor="middle">1200</text>
<text x="872.7" y="701.7" text-anchor="middle">1600</text>
<text x="957.8" y="701.7" text-anchor="middle">2000</text>
<text x="1042.9" y="701.7" text-anchor="middle">2400</text>
<text x="1128.0" y="701.7" text-anchor="middle">2800</text>
<text x="526.5" y="643.2" text-anchor="end">0</text>
<text x="526.5" y="587.4" text-anchor="end">50</text>
<text x="531.7" y="580.8">x10<tspan dy="-6">3</tspan></text>
<text transform="translate(503.5,635.5) rotate(-90)" text-anchor="middle">Approx.</text>
<text x="855" y="715.6" text-anchor="middle" font-size="12.8">seconds</text>
</svg>
</div>
</body>
</html>
